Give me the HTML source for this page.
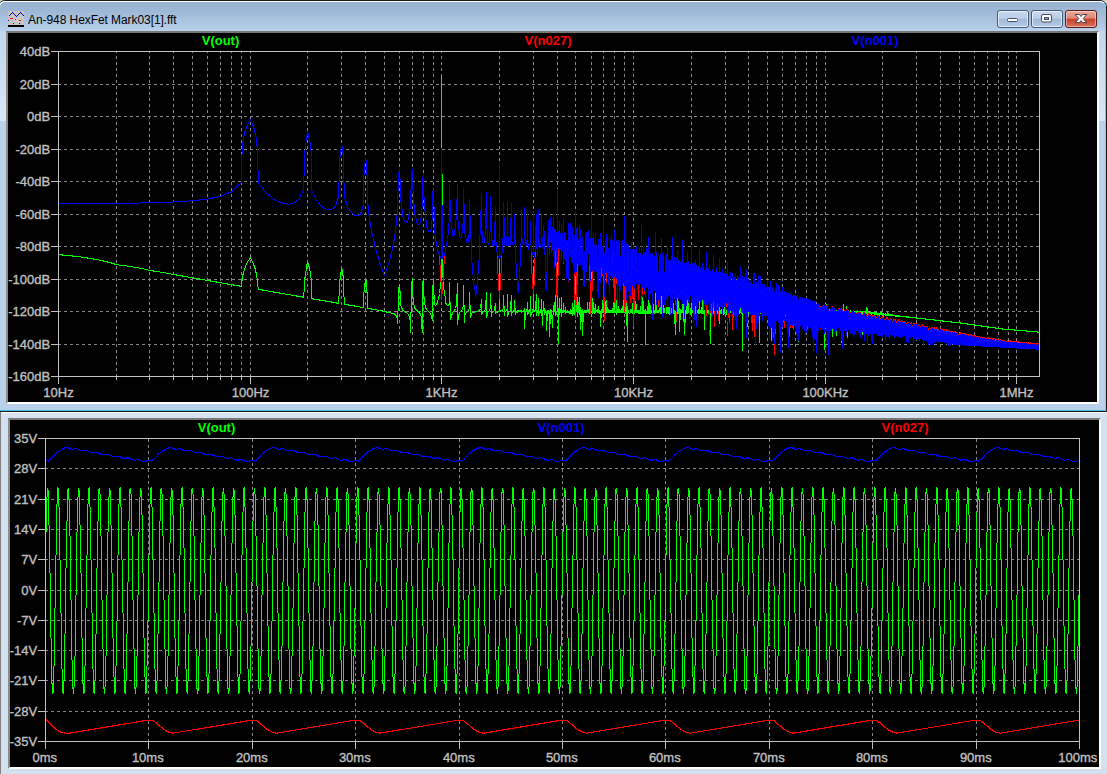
<!DOCTYPE html>
<html><head><meta charset="utf-8"><title>LTspice</title>
<style>
html,body{margin:0;padding:0;}
body{width:1107px;height:774px;overflow:hidden;position:relative;background:#d4d0c8;font-family:"Liberation Sans",sans-serif;}
div{position:absolute;box-sizing:border-box;}
#w1{left:-2px;top:0;width:1109px;height:412px;background:#b9d1ea;border:1px solid #1c1c1c;border-radius:7px 7px 0 0;}
#w1in{left:-1px;top:1px;width:1107px;height:410px;border:1px solid #fff;border-right-color:#62d2ee;border-bottom-color:#3ac8ea;border-radius:6px 6px 0 0;background:linear-gradient(#98b4d2 0,#9db8d6 9px,#a9c3df 18px,#b9d1ea 29px,#b9d1ea 100%);}
#w1l{left:0;top:31px;width:6px;height:90px;background:linear-gradient(#c3d7ee,#d9e6f5);}
#w1r{left:1099px;top:31px;width:6px;height:90px;background:linear-gradient(#c3d7ee,#d9e6f5);}
#c1{left:6px;top:31px;width:1093px;height:373px;background:#000;border-top:2px solid #777;border-left:2px solid #8a8a8a;border-right:2px solid #fff;border-bottom:2px solid #fff;}
#title{left:28px;top:12px;font-size:12px;line-height:16px;color:#000;white-space:nowrap;letter-spacing:-0.07px;}
#w2{left:0;top:412px;width:1107px;height:362px;background:linear-gradient(#fff 0,#fff 1px,#dbe6f4 1px,#d3e0f0 7px);}
#w2 .in{left:8px;top:6px;width:1093px;height:351px;background:#000;border-top:2px solid #777;border-left:2px solid #8a8a8a;border-right:2px solid #fff;border-bottom:2px solid #fff;}
#w2l{left:0;top:0;width:1px;height:362px;background:#808080;}
.btn{top:10px;height:18px;border:1px solid #46597a;border-radius:3px;box-shadow:inset 0 0 0 1px rgba(255,255,255,.65);background:linear-gradient(#c6d8ee 0,#bccfe8 45%,#9fb9d8 50%,#b4cbe6 100%);}
#bmin{left:997px;width:32px;}
#bmax{left:1031px;width:32px;}
#bclose{left:1065px;width:32px;border-color:#5a1a14;background:linear-gradient(#e9a99b 0,#de8a78 45%,#c8402a 50%,#d9735c 100%);box-shadow:inset 0 0 0 1px rgba(255,255,255,.45);}
svg{position:absolute;left:0;top:0;}
svg text{font-family:"Liberation Sans",sans-serif;}
</style></head><body>
<div id="w1"></div><div id="w1in"></div><div id="w1l"></div><div id="w1r"></div>
<div id="c1"></div>
<div id="w2"><div class="in"></div><div id="w2l"></div></div>
<div id="title">An-948 HexFet Mark03[1].fft</div>
<svg width="24" height="20" viewBox="0 0 24 20" style="left:8px;top:11px" shape-rendering="crispEdges">
<rect x="0" y="0" width="16" height="14" fill="#c6c6c6"/>
<path d="M0.5 5.5L4.5 1.500L8.5 5.5L12.5 1.500L16 5" stroke="#0000ff" fill="none"/>
<path d="M2 7.500H5M7 8.500H8M11 9.500H13" stroke="#ff0000"/>
<path d="M5 12.5H6M11 12.5H12M0 9.5H1" stroke="#0000c0"/>
<path d="M0 15H16" stroke="#000" stroke-width="2"/>
</svg>
<div class="btn" id="bmin"></div><div class="btn" id="bmax"></div><div class="btn" id="bclose"></div>
<svg width="1107" height="40" viewBox="0 0 1107 40">
<rect x="1007.5" y="18.5" width="10" height="3" rx="1" fill="#fff" stroke="#454f63"/>
<rect x="1041.5" y="14.5" width="10" height="7.5" rx="1.5" fill="#fff" stroke="#454f63"/>
<rect x="1044.5" y="17.500" width="4" height="2" fill="#8ea7c6" stroke="#454f63"/>
<path d="M1075.2 14.500h4.200l1.600 2l1.600-2h4.200l-3.600 4.100l3.600 4.100h-4.200l-1.600-2l-1.600 2h-4.200l3.600-4.100z" fill="#fff" stroke="#4a3a44" stroke-width="1" stroke-linejoin="round"/>
</svg>
<svg width="1107" height="774" viewBox="0 0 1107 774" shape-rendering="crispEdges" stroke-width="1">
<path d="M58 84.5H1039" stroke="#858585" stroke-dasharray="3 3"/>
<path d="M58 116.5H1039" stroke="#858585" stroke-dasharray="3 3"/>
<path d="M58 149.5H1039" stroke="#858585" stroke-dasharray="3 3"/>
<path d="M58 181.5H1039" stroke="#858585" stroke-dasharray="3 3"/>
<path d="M58 214.5H1039" stroke="#858585" stroke-dasharray="3 3"/>
<path d="M58 246.5H1039" stroke="#858585" stroke-dasharray="3 3"/>
<path d="M58 279.5H1039" stroke="#858585" stroke-dasharray="3 3"/>
<path d="M58 311.5H1039" stroke="#858585" stroke-dasharray="3 3"/>
<path d="M58 344.5H1039" stroke="#858585" stroke-dasharray="3 3"/>
<path d="M58.5 376V384" stroke="#c0c0c0"/>
<path d="M116.5 377V52" stroke="#858585" stroke-dasharray="3 3"/>
<path d="M116.5 376V380" stroke="#c0c0c0"/>
<path d="M149.5 377V52" stroke="#858585" stroke-dasharray="3 3"/>
<path d="M149.5 376V380" stroke="#c0c0c0"/>
<path d="M173.5 377V52" stroke="#858585" stroke-dasharray="3 3"/>
<path d="M173.5 376V380" stroke="#c0c0c0"/>
<path d="M192.5 377V52" stroke="#858585" stroke-dasharray="3 3"/>
<path d="M192.5 376V380" stroke="#c0c0c0"/>
<path d="M207.5 377V52" stroke="#858585" stroke-dasharray="3 3"/>
<path d="M207.5 376V380" stroke="#c0c0c0"/>
<path d="M220.5 377V52" stroke="#858585" stroke-dasharray="3 3"/>
<path d="M220.5 376V380" stroke="#c0c0c0"/>
<path d="M231.5 377V52" stroke="#858585" stroke-dasharray="3 3"/>
<path d="M231.5 376V380" stroke="#c0c0c0"/>
<path d="M241.5 377V52" stroke="#858585" stroke-dasharray="3 3"/>
<path d="M241.5 376V380" stroke="#c0c0c0"/>
<path d="M250.5 377V52" stroke="#858585" stroke-dasharray="3 3"/>
<path d="M250.5 376V384" stroke="#c0c0c0"/>
<path d="M307.5 377V52" stroke="#858585" stroke-dasharray="3 3"/>
<path d="M307.5 376V380" stroke="#c0c0c0"/>
<path d="M341.5 377V52" stroke="#858585" stroke-dasharray="3 3"/>
<path d="M341.5 376V380" stroke="#c0c0c0"/>
<path d="M365.5 377V52" stroke="#858585" stroke-dasharray="3 3"/>
<path d="M365.5 376V380" stroke="#c0c0c0"/>
<path d="M384.5 377V52" stroke="#858585" stroke-dasharray="3 3"/>
<path d="M384.5 376V380" stroke="#c0c0c0"/>
<path d="M399.5 377V52" stroke="#858585" stroke-dasharray="3 3"/>
<path d="M399.5 376V380" stroke="#c0c0c0"/>
<path d="M412.5 377V52" stroke="#858585" stroke-dasharray="3 3"/>
<path d="M412.5 376V380" stroke="#c0c0c0"/>
<path d="M423.5 377V52" stroke="#858585" stroke-dasharray="3 3"/>
<path d="M423.5 376V380" stroke="#c0c0c0"/>
<path d="M433.5 377V52" stroke="#858585" stroke-dasharray="3 3"/>
<path d="M433.5 376V380" stroke="#c0c0c0"/>
<path d="M441.5 377V52" stroke="#858585" stroke-dasharray="3 3"/>
<path d="M441.5 376V384" stroke="#c0c0c0"/>
<path d="M499.5 377V52" stroke="#858585" stroke-dasharray="3 3"/>
<path d="M499.5 376V380" stroke="#c0c0c0"/>
<path d="M533.5 377V52" stroke="#858585" stroke-dasharray="3 3"/>
<path d="M533.5 376V380" stroke="#c0c0c0"/>
<path d="M557.5 377V52" stroke="#858585" stroke-dasharray="3 3"/>
<path d="M557.5 376V380" stroke="#c0c0c0"/>
<path d="M575.5 377V52" stroke="#858585" stroke-dasharray="3 3"/>
<path d="M575.5 376V380" stroke="#c0c0c0"/>
<path d="M591.5 377V52" stroke="#858585" stroke-dasharray="3 3"/>
<path d="M591.5 376V380" stroke="#c0c0c0"/>
<path d="M603.5 377V52" stroke="#858585" stroke-dasharray="3 3"/>
<path d="M603.5 376V380" stroke="#c0c0c0"/>
<path d="M614.5 377V52" stroke="#858585" stroke-dasharray="3 3"/>
<path d="M614.5 376V380" stroke="#c0c0c0"/>
<path d="M624.5 377V52" stroke="#858585" stroke-dasharray="3 3"/>
<path d="M624.5 376V380" stroke="#c0c0c0"/>
<path d="M633.5 377V52" stroke="#858585" stroke-dasharray="3 3"/>
<path d="M633.5 376V384" stroke="#c0c0c0"/>
<path d="M691.5 377V52" stroke="#858585" stroke-dasharray="3 3"/>
<path d="M691.5 376V380" stroke="#c0c0c0"/>
<path d="M725.5 377V52" stroke="#858585" stroke-dasharray="3 3"/>
<path d="M725.5 376V380" stroke="#c0c0c0"/>
<path d="M748.5 377V52" stroke="#858585" stroke-dasharray="3 3"/>
<path d="M748.5 376V380" stroke="#c0c0c0"/>
<path d="M767.5 377V52" stroke="#858585" stroke-dasharray="3 3"/>
<path d="M767.5 376V380" stroke="#c0c0c0"/>
<path d="M782.5 377V52" stroke="#858585" stroke-dasharray="3 3"/>
<path d="M782.5 376V380" stroke="#c0c0c0"/>
<path d="M795.5 377V52" stroke="#858585" stroke-dasharray="3 3"/>
<path d="M795.5 376V380" stroke="#c0c0c0"/>
<path d="M806.5 377V52" stroke="#858585" stroke-dasharray="3 3"/>
<path d="M806.5 376V380" stroke="#c0c0c0"/>
<path d="M816.5 377V52" stroke="#858585" stroke-dasharray="3 3"/>
<path d="M816.5 376V380" stroke="#c0c0c0"/>
<path d="M825.5 377V52" stroke="#858585" stroke-dasharray="3 3"/>
<path d="M825.5 376V384" stroke="#c0c0c0"/>
<path d="M882.5 377V52" stroke="#858585" stroke-dasharray="3 3"/>
<path d="M882.5 376V380" stroke="#c0c0c0"/>
<path d="M916.5 377V52" stroke="#858585" stroke-dasharray="3 3"/>
<path d="M916.5 376V380" stroke="#c0c0c0"/>
<path d="M940.5 377V52" stroke="#858585" stroke-dasharray="3 3"/>
<path d="M940.5 376V380" stroke="#c0c0c0"/>
<path d="M959.5 377V52" stroke="#858585" stroke-dasharray="3 3"/>
<path d="M959.5 376V380" stroke="#c0c0c0"/>
<path d="M974.5 377V52" stroke="#858585" stroke-dasharray="3 3"/>
<path d="M974.5 376V380" stroke="#c0c0c0"/>
<path d="M987.5 377V52" stroke="#858585" stroke-dasharray="3 3"/>
<path d="M987.5 376V380" stroke="#c0c0c0"/>
<path d="M998.5 377V52" stroke="#858585" stroke-dasharray="3 3"/>
<path d="M998.5 376V380" stroke="#c0c0c0"/>
<path d="M1008.5 377V52" stroke="#858585" stroke-dasharray="3 3"/>
<path d="M1008.5 376V380" stroke="#c0c0c0"/>
<path d="M1016.5 377V52" stroke="#858585" stroke-dasharray="3 3"/>
<path d="M1016.5 376V384" stroke="#c0c0c0"/>
<path d="M58.5 254.5H59.5H60.5H61.5H62.5V255.5H63.5H64.5H65.5H66.5H67.5H68.5H69.5H70.5H71.5H72.5V256.5H73.5H74.5H75.5H76.5H77.5H78.5H79.5H80.5L81.5 257.5H82.5H83.5H84.5H85.5H86.5H87.5V258.5H88.5H89.5H90.5H91.5H92.5H93.5V259.5H94.5H95.5H96.5H97.5H98.5L99.5 260.5H100.5H101.5H102.5H103.5V261.5H104.5H105.5H106.5H107.5V262.5H108.5H109.5H110.5H111.5V263.5H112.5H113.5H114.5V264.5H115.5H116.5H117.5H118.5L119.5 265.5H120.5H121.5H122.5H123.5H124.5H125.5H126.5L127.5 266.5H128.5H129.5H130.5H131.5H132.5L133.5 267.5H134.5H135.5H136.5H137.5H138.5L139.5 268.5H140.5H141.5H142.5H143.5L144.5 269.5H145.5H146.5H147.5L148.5 270.5H149.5H150.5H151.5H152.5H153.5V271.5H154.5H155.5H156.5H157.5H158.5H159.5L160.5 272.5H161.5H162.5H163.5H164.5H165.5L166.5 273.5H167.5H168.5H169.5H170.5L171.5 274.5H172.5H173.5H174.5H175.5H176.5V275.5H177.5H178.5H179.5H180.5H181.5H182.5V276.5H183.5H184.5H185.5H186.5H187.5L188.5 277.5H189.5H190.5H191.5H192.5H193.5V278.5H194.5H195.5H196.5H197.5H198.5H199.5V279.5H200.5H201.5H202.5H203.5H204.5L205.5 280.5H206.5H207.5H208.5H209.5H210.5V281.5H211.5H212.5H213.5H214.5H215.5H216.5V282.5H217.5H218.5H219.5H220.5H221.5L222.5 283.5H223.5H224.5H225.5H226.5H227.5V284.5H228.5H229.5H230.5H231.5H232.5H233.5V285.5H234.5H235.5H236.5H237.5H238.5H239.5V286.5H240.5H241.5V282.5L242.5 278.5V275.5L243.5 273.5V271.5L244.5 270.5V268.5L245.5 267.5V265.5L246.5 264.5V263.5L247.5 262.5V261.5L248.5 260.5L249.5 259.5V258.5L250.5 257.5V258.5L251.5 259.5V260.5L252.5 261.5V262.5L253.5 263.5V264.5L254.5 266.5V267.5L255.5 269.5V271.5L256.5 273.5V276.5L257.5 279.5V283.5L258.5 289.5H259.5H260.5H261.5H262.5V290.5H263.5H264.5H265.5H266.5H267.5L268.5 291.5H269.5H270.5H271.5H272.5H273.5V292.5H274.5H275.5H276.5H277.5H278.5H279.5V293.5H280.5H281.5H282.5H283.5H284.5L285.5 294.5H286.5H287.5H288.5H289.5H290.5L291.5 295.5H292.5H293.5H294.5H295.5H296.5V296.5H297.5H298.5H299.5H300.5H301.5H302.5V297.5H303.5L304.5 286.5V279.5L305.5 275.5V272.5L306.5 269.5V265.5L307.5 263.5V262.5L308.5 263.5V265.5L309.5 267.5V269.5L310.5 272.5V275.5L311.5 280.5V298.5H312.5H313.5V299.5H314.5H315.5H316.5H317.5H318.5H319.5V300.5H320.5H321.5H322.5H323.5H324.5H325.5V301.5H326.5H327.5H328.5H329.5H330.5H331.5V302.5H332.5H333.5H334.5H335.5H336.5V303.5H337.5H338.5L339.5 288.5V281.5L340.5 277.5V273.5L341.5 270.5V268.5L342.5 270.5V273.5L343.5 277.5V289.5L344.5 304.5H345.5H346.5H347.5H348.5V305.5H349.5H350.5H351.5H352.5H353.5H354.5V306.5H355.5H356.5H357.5H358.5H359.5L360.5 307.5H361.5H362.5H363.5V295.5L364.5 289.5V285.5L365.5 281.5V278.5L366.5 281.5V289.5L367.5 295.5V308.5H368.5H369.5H370.5H371.5V309.5H372.5H373.5H374.5H375.5H376.5L377.5 310.5H378.5H379.5H380.5H381.5H382.5V311.5H383.5H384.5H385.5H386.5V312.5H387.5H388.5H389.5H390.5L391.5 313.5H392.5H393.5H394.5V314.5H395.5V315.5H396.5V316.5L397.5 318.5V323.5L398.5 298.5V289.5L399.5 284.5V288.5L400.5 294.5V305.5L401.5 306.5V307.5L402.5 309.5V310.5H403.5L404.5 311.5H405.5V312.5H406.5L407.5 313.5L408.5 314.5V315.5L409.5 316.5V317.5L410.5 321.5V332.5L411.5 293.5V284.5L412.5 278.5V290.5L413.5 302.5V304.5L414.5 305.5V308.5H415.5V309.5H416.5V310.5H417.5V311.5H418.5V312.5H419.5V313.5H420.5V315.5L421.5 316.5V325.5L422.5 332.5V284.5L423.5 278.5V290.5L424.5 302.5V304.5L425.5 305.5V308.5H426.5V309.5L427.5 310.5L428.5 311.5L429.5 312.5L430.5 313.5V314.5L431.5 315.5V317.5L432.5 320.5V289.5L433.5 280.5V287.5L434.5 302.5V304.5L435.5 305.5L436.5 304.5L437.5 302.5V301.5L438.5 298.5L439.5 293.5L440.5 285.5L441.5 270.5V75.5L442.5 270.5L443.5 285.5L444.5 293.5L445.5 298.5V302.5L446.5 304.5L447.5 305.5H448.5L449.5 303.5V282.5L450.5 319.5L451.5 315.5L452.5 313.5V312.5L453.5 311.5L454.5 310.5L455.5 308.5L456.5 304.5L457.5 283.5V324.5L458.5 315.5L459.5 313.5V312.5L460.5 311.5H461.5V310.5L462.5 309.5L463.5 305.5V285.5L464.5 322.5V315.5L465.5 313.5L466.5 312.5L467.5 311.5L468.5 310.5L469.5 307.5V292.5L470.5 317.5L471.5 314.5V313.5L472.5 312.5H473.5H474.5L475.5 311.5H476.5H477.5L478.5 310.5H479.5L480.5 308.5L481.5 299.5V314.5L482.5 312.5V311.5H483.5L484.5 310.5L485.5 309.5V307.5L486.5 292.5V317.5L487.5 313.5V311.5H488.5L489.5 310.5L490.5 307.5V293.5L491.5 316.5V313.5L492.5 312.5L493.5 311.5L494.5 310.5V309.5L495.5 303.5V313.5L496.5 312.5H497.5V311.5H498.5H499.5V248.5V311.5H500.5V310.5H501.5H502.5V309.5L503.5 308.5V295.5L504.5 315.5V312.5L505.5 311.5L506.5 310.5L507.5 307.5V293.5V316.5L508.5 313.5V312.5L509.5 311.5L510.5 310.5V307.5L511.5 295.5V315.5V312.5H512.5V311.5H513.5V310.5H514.5V300.5L515.5 314.5V312.5L516.5 311.5V312.5V311.5H517.5V312.5V310.5L518.5 311.5V310.5H519.5V311.5L520.5 310.5V311.5L521.5 310.5V312.5L522.5 311.5H523.5V310.5V311.5L524.5 309.5V307.5V328.5L525.5 312.5V311.5L526.5 310.5V311.5V309.5L527.5 308.5V301.5V314.5L528.5 313.5V310.5L529.5 311.5V310.5L530.5 308.5V295.5V316.5L531.5 313.5V311.5V312.5L532.5 311.5V312.5L533.5 306.5V266.5V311.5L534.5 310.5V311.5L535.5 309.5V310.5V307.5L536.5 294.5V315.5V312.5L537.5 311.5V312.5V310.5H538.5V297.5V315.5L539.5 312.5V311.5V312.5H540.5V310.5L541.5 308.5V298.5V315.5V311.5H542.5V325.5V310.5H543.5V301.5L544.5 314.5V311.5H545.5V312.5V310.5L546.5 311.5V330.5L547.5 311.5V309.5V310.5L548.5 311.5V309.5V313.5V311.5H549.5V336.5L550.5 311.5V309.5L551.5 312.5V310.5L552.5 326.5V327.5V324.5L553.5 305.5V310.5V307.5L554.5 311.5V308.5L555.5 295.5V315.5L556.5 313.5V312.5L557.5 311.5V252.5V311.5H558.5V343.5V308.5H559.5V297.5V314.5V312.5L560.5 311.5V312.5V310.5L561.5 307.5V296.5V316.5V311.5L562.5 310.5V312.5V310.5L563.5 309.5V302.5V312.5V309.5L564.5 311.5V310.5H565.5V306.5V313.5V311.5L566.5 312.5V311.5L567.5 310.5V312.5V311.5L568.5 312.5V310.5V311.5H569.5V313.5V311.5H570.5V308.5V313.5L571.5 312.5V313.5V311.5L572.5 308.5V302.5V315.5V313.5H573.5V307.5L574.5 308.5V299.5V314.5V312.5L575.5 311.5V313.5V270.5L576.5 311.5V310.5L577.5 309.5V296.5V316.5V312.5H578.5V307.5L579.5 297.5V314.5V312.5H580.5V329.5V306.5V315.5L581.5 311.5V312.5V309.5V310.5L582.5 332.5V308.5V335.5V331.5L583.5 312.5V310.5V311.5H584.5V310.5V312.5V310.5H585.5V309.5V312.5V311.5L586.5 312.5V309.5V312.5L587.5 310.5V311.5V301.5V311.5L588.5 310.5V308.5V312.5V311.5L589.5 310.5V301.5V313.5V311.5L590.5 305.5V312.5V304.5V307.5L591.5 264.5V312.5V311.5L592.5 310.5V297.5V313.5V311.5L593.5 310.5V312.5V301.5V311.5H594.5V313.5V310.5V311.5L595.5 304.5V312.5V310.5H596.5V311.5V310.5H597.5V312.5V311.5L598.5 306.5V312.5V310.5L599.5 312.5V310.5V313.5V310.5L600.5 311.5V310.5V326.5V325.5L601.5 310.5V312.5V308.5V311.5L602.5 309.5V299.5V312.5L603.5 311.5V312.5V270.5V311.5L604.5 312.5V310.5V313.5V311.5L605.5 301.5V313.5V312.5H606.5V299.5V311.5L607.5 312.5V306.5V312.5L608.5 310.5V308.5V312.5V311.5H609.5V312.5V309.5V311.5H610.5V310.5V312.5V310.5L611.5 311.5V312.5V309.5V311.5L612.5 312.5V307.5V311.5L613.5 312.5V302.5L614.5 311.5V312.5V285.5L615.5 310.5V309.5V312.5V311.5L616.5 300.5V314.5V304.5L617.5 298.5V312.5L618.5 306.5V312.5V311.5L619.5 309.5V312.5V311.5H620.5V310.5V312.5V310.5L621.5 311.5V312.5V308.5L622.5 311.5V312.5V306.5L623.5 311.5V312.5V297.5V310.5L624.5 311.5V280.5V312.5V311.5H625.5V313.5V296.5V311.5L626.5 310.5V312.5V298.5V311.5L627.5 340.5V305.5V341.5V310.5L628.5 311.5V309.5V312.5V311.5L629.5 310.5V305.5V313.5V307.5L630.5 311.5V310.5V312.5V310.5L631.5 311.5V312.5V306.5V310.5H632.5V313.5V302.5V311.5L633.5 310.5V293.5V312.5H634.5V298.5V313.5V312.5L635.5 311.5V300.5V312.5V311.5L636.5 304.5V312.5L637.5 311.5V312.5V309.5V311.5H638.5V313.5V309.5V312.5L639.5 311.5V309.5V313.5V310.5L640.5 311.5V313.5V305.5V310.5L641.5 312.5V313.5V296.5V310.5L642.5 312.5V296.5V313.5V311.5L643.5 301.5V313.5V309.5L644.5 312.5V313.5V309.5V311.5L645.5 312.5V344.5V309.5L646.5 312.5V313.5V310.5V311.5H647.5V310.5V313.5V311.5L648.5 301.5V313.5V296.5V310.5L649.5 312.5V302.5V313.5V311.5H650.5V304.5V313.5V312.5L651.5 311.5V312.5V309.5V311.5H652.5V313.5V309.5L653.5 310.5V303.5V312.5L654.5 313.5V309.5V310.5H655.5V292.5V312.5V311.5L656.5 302.5V312.5V311.5L657.5 310.5V312.5V309.5V312.5L658.5 310.5V312.5V311.5L659.5 309.5V311.5V303.5V311.5L660.5 312.5V313.5V307.5L661.5 311.5V313.5V292.5V313.5L662.5 312.5V298.5V311.5L663.5 312.5V305.5L664.5 310.5V312.5V309.5V310.5L665.5 312.5V313.5V309.5V310.5H666.5V313.5V306.5V311.5H667.5V295.5V312.5V311.5L668.5 313.5V306.5V308.5L669.5 310.5V306.5V314.5V311.5L670.5 310.5V313.5V309.5L671.5 311.5V312.5V307.5V309.5L672.5 312.5V292.5V313.5V311.5H673.5V302.5V313.5V311.5H674.5V313.5V309.5V312.5L675.5 334.5V310.5V334.5L676.5 310.5V309.5V313.5V312.5L677.5 309.5V313.5V292.5V313.5L678.5 311.5V300.5V313.5L679.5 310.5V307.5V331.5V328.5L680.5 312.5V309.5V313.5V309.5L681.5 310.5V312.5V309.5V312.5L682.5 308.5V312.5V295.5V301.5L683.5 310.5V312.5V303.5V310.5L684.5 333.5V310.5V334.5V333.5L685.5 312.5V309.5V313.5V310.5L686.5 312.5V309.5V313.5V311.5L687.5 288.5V313.5V310.5L688.5 305.5V312.5V303.5L689.5 311.5V309.5V313.5V311.5L690.5 313.5V314.5V307.5V311.5H691.5V296.5V313.5V309.5L692.5 311.5V304.5V312.5V310.5L693.5 311.5V309.5V313.5V311.5L694.5 310.5V312.5V308.5V312.5H695.5V297.5V313.5V311.5L696.5 312.5V301.5V313.5V310.5H697.5V312.5V310.5L698.5 311.5V313.5V308.5V311.5L699.5 313.5V296.5V311.5H700.5V312.5V309.5V312.5L701.5 311.5V313.5V309.5V311.5L702.5 303.5V313.5V284.5V312.5L703.5 311.5V304.5V313.5V309.5L704.5 311.5V309.5V329.5V310.5H705.5V309.5V312.5L706.5 310.5V313.5V294.5V312.5H707.5V305.5V311.5H708.5V309.5V313.5V312.5L709.5 311.5V313.5V296.5V311.5H710.5V300.5V343.5V311.5H711.5V309.5V313.5V312.5H712.5V313.5V304.5V310.5L713.5 311.5V292.5V313.5L714.5 311.5V312.5V302.5V311.5H715.5V312.5V302.5V312.5L716.5 309.5V297.5V313.5V309.5L717.5 311.5V309.5V313.5V311.5L718.5 310.5V312.5V309.5V312.5L719.5 310.5V323.5V301.5V314.5L720.5 311.5V313.5V309.5V311.5H721.5V313.5V308.5V311.5L722.5 310.5V299.5V313.5V311.5H723.5V309.5V314.5V309.5L724.5 311.5V313.5V306.5V313.5L725.5 312.5V296.5V311.5L726.5 312.5V309.5V314.5V312.5L727.5 311.5V312.5V293.5V309.5L728.5 311.5V301.5V313.5L729.5 310.5V312.5V309.5V312.5L730.5 311.5V312.5V293.5V311.5L731.5 310.5V307.5V313.5V310.5L732.5 309.5V312.5V298.5V311.5L733.5 312.5V304.5V313.5V311.5H734.5V313.5V303.5V305.5L735.5 311.5V314.5V297.5V312.5L736.5 313.5V309.5V313.5L737.5 311.5V313.5V302.5V310.5H738.5V305.5V313.5V310.5L739.5 312.5V313.5V305.5V312.5L740.5 310.5V312.5V298.5V310.5L741.5 311.5V300.5V313.5V310.5L742.5 311.5V350.5V303.5V311.5L743.5 312.5V313.5V309.5V313.5L744.5 311.5V313.5V290.5V312.5L745.5 311.5V304.5V313.5V311.5L746.5 310.5V331.5V302.5V312.5L747.5 313.5V305.5V326.5V311.5H748.5V313.5V299.5V311.5L749.5 312.5V301.5V313.5V312.5L750.5 310.5V314.5V311.5H751.5V301.5V313.5V311.5H752.5V300.5V313.5V311.5L753.5 310.5V301.5V314.5V311.5L754.5 310.5V313.5V300.5L755.5 311.5V304.5V323.5V311.5L756.5 310.5V313.5V299.5V310.5H757.5V304.5V313.5V312.5H758.5V313.5V301.5V310.5L759.5 311.5V342.5V309.5V310.5H760.5V313.5V308.5V313.5L761.5 312.5V313.5V309.5V311.5H762.5V309.5V313.5V310.5L763.5 311.5V309.5V313.5V311.5H764.5V313.5V309.5V311.5H765.5V305.5V314.5V310.5L766.5 312.5V309.5V313.5V311.5H767.5V313.5V309.5V312.5H768.5V313.5V310.5L769.5 311.5V312.5V308.5V311.5L770.5 310.5V309.5V313.5V309.5L771.5 311.5V309.5V340.5V311.5L772.5 312.5V313.5V309.5V310.5H773.5V309.5V314.5V309.5L774.5 312.5V308.5V313.5V311.5L775.5 312.5V309.5V313.5V311.5H776.5V309.5V313.5V312.5H777.5V313.5V309.5V311.5H778.5V309.5V313.5V310.5H779.5V313.5V309.5V311.5L780.5 313.5V314.5V309.5V311.5L781.5 312.5V300.5V313.5V311.5L782.5 313.5V309.5V312.5L783.5 311.5V313.5V309.5V310.5L784.5 311.5V309.5V313.5V311.5L785.5 310.5V313.5V309.5V310.5L786.5 312.5V313.5V309.5V312.5H787.5V313.5V309.5V311.5L788.5 312.5V313.5V308.5V311.5L789.5 312.5V309.5V314.5V312.5L790.5 313.5V309.5V311.5H791.5V313.5V308.5V311.5H792.5V313.5V309.5V312.5L793.5 311.5V310.5V313.5V312.5H794.5V309.5V312.5L795.5 311.5V313.5V308.5V313.5L796.5 311.5V313.5V309.5V310.5L797.5 311.5V313.5V309.5V312.5L798.5 341.5V309.5V312.5H799.5V313.5V308.5V310.5H800.5V313.5V308.5V312.5L801.5 310.5V314.5V308.5V311.5L802.5 310.5V309.5V313.5V311.5L803.5 326.5V309.5V327.5V311.5L804.5 313.5V309.5V314.5V311.5L805.5 312.5V309.5V314.5V309.5L806.5 311.5V309.5V313.5V311.5L807.5 312.5V309.5V313.5V311.5H808.5V309.5V313.5V311.5H809.5V309.5V314.5V309.5L810.5 311.5V314.5V309.5V312.5L811.5 311.5V309.5V314.5V312.5L812.5 310.5V309.5V313.5V312.5L813.5 313.5V309.5V312.5L814.5 310.5V309.5V313.5V311.5L815.5 310.5V313.5V302.5V313.5L816.5 311.5V310.5V313.5V312.5H817.5V313.5V308.5V310.5L818.5 312.5V309.5V314.5V312.5L819.5 309.5V313.5V312.5H820.5V313.5V306.5V310.5L821.5 311.5V314.5V309.5V311.5H822.5V309.5V313.5V311.5L823.5 310.5V309.5V313.5L824.5 311.5V309.5V349.5V313.5L825.5 312.5V309.5V314.5V312.5H826.5V314.5V303.5V305.5L827.5 311.5V314.5V309.5V313.5L828.5 312.5V313.5V309.5V311.5L829.5 312.5V308.5V314.5V312.5L830.5 311.5V308.5V314.5V312.5L831.5 310.5V309.5V314.5V311.5L832.5 313.5V309.5V336.5V334.5L833.5 311.5V313.5V309.5V310.5L834.5 311.5V309.5V314.5V311.5L835.5 312.5V309.5V315.5V312.5L836.5 311.5V309.5V335.5V312.5L837.5 311.5V314.5V309.5V311.5H838.5V314.5V309.5V312.5H839.5V313.5V309.5V312.5H840.5V310.5V313.5V312.5L841.5 311.5V310.5V342.5V310.5L842.5 313.5V309.5V311.5L843.5 310.5V313.5V303.5V311.5H844.5V314.5V309.5V313.5L845.5 311.5V309.5V322.5V313.5L846.5 307.5V305.5V313.5V307.5L847.5 313.5V337.5V309.5V311.5L848.5 310.5V313.5V312.5L849.5 311.5V313.5V310.5V312.5H850.5V310.5V314.5V310.5L851.5 312.5V310.5V314.5V312.5H852.5V310.5V314.5V311.5H853.5V310.5V314.5V311.5H854.5V314.5V310.5V311.5H855.5V313.5V310.5V312.5L856.5 313.5V310.5V312.5L857.5 310.5V313.5V311.5L858.5 312.5V310.5V314.5L859.5 312.5V313.5V310.5V312.5H860.5V310.5V326.5V312.5H861.5V313.5V310.5V311.5L862.5 312.5V310.5V334.5V312.5L863.5 311.5V313.5V310.5V312.5H864.5V313.5V310.5V311.5L865.5 312.5V313.5V310.5V312.5H866.5V313.5V306.5V312.5L867.5 308.5V307.5V314.5V312.5H868.5V311.5V313.5V312.5H869.5V313.5V311.5L870.5 312.5V313.5V311.5V312.5H871.5V311.5V314.5V312.5H872.5V311.5V313.5V312.5L873.5 313.5V311.5V312.5H874.5V311.5V314.5V312.5L875.5 313.5V311.5V314.5V312.5L876.5 314.5V311.5V312.5L877.5 313.5V312.5V314.5V313.5H878.5V312.5V329.5V328.5L879.5 313.5V312.5V314.5L880.5 312.5V314.5V313.5H881.5V314.5V311.5V313.5H882.5V314.5V312.5V313.5H883.5V320.5V314.5H884.5V313.5V314.5H885.5V313.5V315.5V313.5L886.5 314.5V313.5V315.5V314.5H887.5V312.5V315.5V312.5L888.5 314.5V313.5V315.5V314.5H889.5V315.5V313.5V314.5L890.5 315.5V314.5H891.5V315.5V314.5H892.5V315.5H893.5V314.5V315.5H894.5V314.5V315.5H895.5V314.5V316.5V315.5H896.5V316.5V315.5H897.5V316.5V315.5H898.5V316.5V315.5H899.5V316.5V314.5V315.5L900.5 316.5V315.5V316.5H901.5V315.5V316.5H902.5V315.5V316.5H903.5H904.5H905.5H906.5V317.5V316.5H907.5V317.5L908.5 316.5V317.5H909.5H910.5H911.5H912.5H913.5H914.5H915.5H916.5V318.5H917.5H918.5H919.5H920.5H921.5H922.5H923.5H924.5H925.5V319.5H926.5H927.5H928.5H929.5H930.5H931.5H932.5H933.5H934.5V320.5H935.5H936.5H937.5H938.5H939.5H940.5H941.5H942.5V321.5H943.5H944.5H945.5H946.5H947.5H948.5H949.5H950.5H951.5V322.5H952.5H953.5H954.5H955.5H956.5H957.5H958.5H959.5H960.5V323.5H961.5H962.5H963.5H964.5H965.5H966.5H967.5V324.5H968.5H969.5H970.5H971.5H972.5H973.5H974.5V325.5H975.5H976.5H977.5H978.5H979.5H980.5H981.5V326.5H982.5H983.5H984.5H985.5H986.5H987.5H988.5V327.5H989.5H990.5H991.5H992.5H993.5H994.5H995.5V328.5H996.5H997.5H998.5H999.5H1000.5H1001.5H1002.5V329.5H1003.5H1004.5H1005.5H1006.5H1007.5H1008.5H1009.5H1010.5H1011.5H1012.5H1013.5H1014.5V330.5H1015.5H1016.5H1017.5H1018.5H1019.5H1020.5H1021.5H1022.5H1023.5H1024.5H1025.5H1026.5V331.5H1027.5H1028.5H1029.5H1030.5H1031.5H1032.5H1033.5H1034.5H1035.5H1036.5H1037.5V332.5H1038.5H1039.5" stroke="#00ff00" fill="none"/>
<path d="M58.5 203.5H59.5H60.5H61.5H62.5H63.5H64.5H65.5H66.5H67.5H68.5H69.5H70.5H71.5H72.5H73.5H74.5H75.5H76.5H77.5H78.5H79.5H80.5H81.5H82.5H83.5H84.5H85.5H86.5H87.5H88.5H89.5H90.5H91.5H92.5H93.5H94.5H95.5H96.5H97.5H98.5H99.5H100.5H101.5H102.5H103.5H104.5H105.5H106.5H107.5H108.5H109.5H110.5H111.5H112.5H113.5H114.5H115.5H116.5H117.5H118.5H119.5H120.5H121.5H122.5H123.5H124.5H125.5H126.5H127.5H128.5H129.5H130.5H131.5H132.5H133.5H134.5H135.5H136.5H137.5H138.5L139.5 202.5H140.5H141.5H142.5H143.5H144.5H145.5H146.5H147.5H148.5H149.5H150.5H151.5H152.5H153.5H154.5H155.5H156.5H157.5H158.5H159.5H160.5H161.5H162.5H163.5H164.5H165.5H166.5H167.5H168.5H169.5H170.5H171.5H172.5H173.5V201.5H174.5H175.5H176.5H177.5H178.5H179.5H180.5H181.5H182.5H183.5H184.5H185.5H186.5H187.5H188.5H189.5V200.5H190.5H191.5H192.5H193.5H194.5H195.5H196.5H197.5H198.5H199.5V199.5H200.5H201.5H202.5H203.5H204.5H205.5H206.5H207.5L208.5 198.5H209.5H210.5H211.5H212.5V197.5H213.5H214.5H215.5H216.5H217.5V196.5H218.5H219.5H220.5H221.5V195.5H222.5H223.5L224.5 194.5H225.5V193.5H226.5H227.5H228.5V192.5H229.5H230.5L231.5 191.5H232.5V190.5H233.5V189.5L234.5 188.5L235.5 187.5H236.5V186.5H237.5V185.5H238.5V184.5H239.5L240.5 183.5L241.5 182.5V158.5L242.5 149.5V144.5L243.5 140.5V137.5L244.5 134.5V132.5L245.5 130.5V129.5L246.5 127.5V126.5L247.5 125.5V124.5L248.5 123.5V122.5L249.5 121.5V120.5L250.5 119.5V120.5L251.5 121.5V122.5L252.5 123.5V124.5L253.5 126.5V127.5L254.5 129.5V131.5L255.5 133.5V135.5L256.5 138.5V142.5L257.5 148.5V156.5L258.5 183.5L259.5 184.5L260.5 185.5L261.5 186.5L262.5 187.5V188.5H263.5V190.5L264.5 191.5L265.5 192.5V193.5H266.5L267.5 194.5H268.5V195.5H269.5L270.5 196.5L271.5 197.5L272.5 198.5H273.5V199.5H274.5H275.5V200.5H276.5L277.5 201.5H278.5H279.5V202.5H280.5H281.5H282.5V203.5H283.5H284.5H285.5H286.5H287.5V204.5H288.5H289.5L290.5 203.5H291.5H292.5H293.5L294.5 202.5H295.5V201.5H296.5V200.5H297.5L298.5 199.5H299.5V197.5L300.5 196.5V194.5L301.5 193.5L302.5 192.5V191.5L303.5 190.5L304.5 161.5V153.5L305.5 147.5V143.5L306.5 140.5V136.5L307.5 134.5V132.5L308.5 134.5V136.5L309.5 138.5V140.5L310.5 143.5V147.5L311.5 153.5V190.5L312.5 191.5V192.5L313.5 193.5V194.5L314.5 195.5V196.5L315.5 197.5V199.5L316.5 200.5L317.5 201.5L318.5 202.5V203.5H319.5V204.5L320.5 205.5H321.5V206.5H322.5V207.5H323.5L324.5 208.5H325.5V209.5H326.5H327.5H328.5H329.5H330.5H331.5L332.5 208.5H333.5V207.5H334.5V206.5H335.5V205.5L336.5 203.5V201.5L337.5 200.5V199.5L338.5 197.5V196.5L339.5 168.5V159.5L340.5 154.5V150.5L341.5 147.5V145.5L342.5 147.5V150.5L343.5 154.5V168.5L344.5 196.5V197.5L345.5 199.5V200.5L346.5 202.5V203.5L347.5 205.5V207.5L348.5 208.5L349.5 209.5V210.5L350.5 211.5L351.5 212.5L352.5 213.5L353.5 214.5H354.5V215.5H355.5H356.5H357.5H358.5H359.5V214.5H360.5V212.5H361.5V210.5L362.5 208.5V207.5L363.5 205.5V179.5L364.5 170.5V165.5L365.5 161.5V158.5L366.5 161.5V170.5L367.5 179.5V204.5L368.5 206.5V212.5L369.5 216.5V221.5L370.5 223.5V226.5L371.5 228.5V232.5L372.5 234.5V235.5L373.5 238.5V240.5L374.5 242.5V245.5L375.5 247.5V249.5L376.5 250.5V252.5L377.5 254.5V255.5L378.5 257.5V258.5L379.5 260.5V262.5L380.5 264.5V265.5L381.5 266.5V268.5L382.5 269.5V271.5L383.5 272.5V274.5L384.5 275.5V274.5L385.5 273.5V271.5L386.5 270.5V268.5L387.5 267.5V265.5L388.5 264.5V263.5L389.5 262.5V259.5L390.5 257.5V254.5L391.5 253.5V251.5L392.5 250.5V245.5L393.5 244.5V242.5L394.5 238.5V235.5L395.5 233.5V227.5L396.5 223.5V220.5L397.5 210.5V200.5L398.5 182.5V174.5L399.5 169.5V174.5L400.5 182.5V200.5L401.5 203.5V206.5L402.5 212.5V215.5L403.5 218.5V219.5L404.5 220.5V221.5H405.5L406.5 222.5V221.5H407.5V220.5L408.5 219.5V215.5L409.5 213.5V211.5L410.5 206.5V199.5L411.5 181.5V174.5L412.5 169.5V181.5L413.5 199.5V202.5L414.5 206.5V213.5L415.5 215.5V218.5L416.5 219.5V222.5L417.5 223.5V224.5H418.5H419.5V223.5L420.5 222.5V218.5L421.5 217.5V208.5L422.5 205.5V179.5L423.5 174.5V187.5L424.5 205.5V208.5L425.5 212.5V219.5L426.5 221.5V226.5L427.5 228.5V229.5L428.5 230.5V231.5H429.5H430.5V229.5L431.5 228.5V222.5L432.5 217.5V195.5L433.5 187.5V195.5L434.5 217.5V232.5L435.5 235.5V240.5L436.5 242.5V245.5L437.5 247.5V249.5L438.5 252.5L439.5 254.5L440.5 274.5L441.5 288.5V299.5L442.5 289.5L443.5 274.5L444.5 254.5L445.5 252.5V249.5L446.5 244.5L447.5 239.5L448.5 230.5L449.5 215.5V184.5L450.5 215.5L451.5 227.5L452.5 232.5V235.5L453.5 236.5L454.5 235.5V232.5L455.5 226.5L456.5 214.5L457.5 184.5V214.5L458.5 226.5L459.5 232.5V236.5L460.5 237.5H461.5V235.5L462.5 230.5L463.5 218.5V188.5L464.5 218.5V230.5L465.5 236.5L466.5 239.5V241.5L467.5 242.5H468.5V238.5L469.5 229.5V199.5L470.5 229.5L471.5 248.5V258.5L472.5 266.5V272.5L473.5 277.5V282.5L474.5 287.5L475.5 292.5V296.5L476.5 292.5V287.5L477.5 282.5V277.5L478.5 271.5V264.5L479.5 256.5V244.5L480.5 225.5L481.5 194.5V225.5L482.5 236.5V241.5L483.5 243.5L484.5 242.5V240.5L485.5 234.5V223.5L486.5 192.5V223.5L487.5 234.5V243.5L488.5 244.5L489.5 242.5V237.5L490.5 227.5V196.5L491.5 226.5V237.5L492.5 243.5V245.5L493.5 246.5L494.5 244.5V236.5L495.5 207.5V236.5L496.5 246.5V250.5L497.5 252.5V268.5L498.5 279.5V287.5L499.5 293.5V298.5V293.5L500.5 286.5V278.5L501.5 268.5V253.5L502.5 251.5V243.5L503.5 232.5V202.5L504.5 231.5V244.5L505.5 245.5H506.5V241.5L507.5 230.5V200.5V230.5L508.5 242.5V245.5L509.5 244.5V245.5L510.5 243.5V232.5L511.5 203.5V240.5L512.5 243.5V244.5H513.5L514.5 243.5V214.5L515.5 242.5V261.5L516.5 264.5V275.5L517.5 279.5V289.5L518.5 292.5V284.5L519.5 279.5V270.5L520.5 264.5V250.5L521.5 236.5V208.5V236.5L522.5 241.5V243.5L523.5 244.5V241.5L524.5 235.5V206.5V235.5L525.5 241.5V242.5L526.5 244.5V245.5V243.5L527.5 237.5V210.5V238.5L528.5 248.5V249.5L529.5 245.5V244.5L530.5 243.5V220.5V243.5L531.5 246.5V269.5L532.5 277.5V286.5L533.5 291.5V293.5V284.5L534.5 285.5V265.5L535.5 248.5V236.5L536.5 214.5V245.5L537.5 251.5V249.5V255.5V252.5L538.5 242.5V208.5V233.5L539.5 242.5V244.5L540.5 245.5V244.5V247.5L541.5 241.5V212.5V246.5H542.5V237.5L543.5 248.5V226.5L544.5 234.5V250.5L545.5 259.5V286.5L546.5 290.5V280.5V281.5L547.5 263.5V236.5V244.5L548.5 247.5V219.5V246.5H549.5V254.5V235.5L550.5 241.5V217.5L551.5 243.5V242.5V252.5L552.5 247.5V249.5V233.5V236.5L553.5 217.5V250.5V248.5L554.5 262.5V267.5V230.5L555.5 228.5V265.5L556.5 252.5V296.5L557.5 281.5V295.5V276.5L558.5 274.5V240.5L559.5 227.5V220.5V255.5V231.5L560.5 244.5V232.5V248.5L561.5 251.5V223.5V260.5L562.5 234.5V251.5V233.5L563.5 263.5V218.5V252.5L564.5 258.5V232.5L565.5 245.5V232.5V260.5V238.5L566.5 242.5V277.5V271.5L567.5 276.5V241.5L568.5 281.5V223.5L569.5 249.5V237.5V245.5L570.5 256.5V222.5V240.5L571.5 260.5V253.5V262.5V258.5L572.5 260.5V226.5V258.5L573.5 266.5V245.5V264.5L574.5 262.5V234.5V299.5L575.5 296.5V293.5V318.5L576.5 280.5V304.5V269.5L577.5 284.5V226.5V254.5L578.5 246.5V265.5V239.5V252.5L579.5 226.5V261.5V239.5L580.5 241.5V264.5V228.5V241.5L581.5 257.5V246.5V264.5V261.5L582.5 253.5V236.5V269.5V242.5L583.5 264.5V259.5V285.5V260.5L584.5 286.5V250.5V257.5L585.5 244.5V232.5V271.5V254.5L586.5 268.5V271.5V231.5V260.5L587.5 258.5V261.5V240.5L588.5 241.5V229.5V253.5V252.5L589.5 253.5V240.5V272.5V266.5L590.5 294.5V281.5V313.5V305.5L591.5 310.5V278.5V297.5L592.5 285.5V237.5V270.5L593.5 266.5V232.5V257.5L594.5 252.5V243.5V271.5V260.5L595.5 234.5V267.5V251.5L596.5 270.5V244.5V271.5L597.5 265.5V262.5V290.5L598.5 292.5V297.5V239.5L599.5 249.5V277.5V248.5V261.5L600.5 269.5V232.5V282.5V259.5L601.5 265.5V233.5V276.5V255.5L602.5 258.5V275.5V245.5V271.5L603.5 280.5V276.5V298.5V297.5L604.5 307.5V320.5V275.5V302.5L605.5 239.5V274.5V265.5L606.5 251.5V233.5V282.5V256.5L607.5 270.5V235.5V271.5L608.5 257.5V247.5V284.5V283.5L609.5 264.5V293.5V280.5L610.5 272.5V275.5V238.5V259.5L611.5 275.5V280.5V234.5V250.5L612.5 271.5V277.5V239.5V265.5L613.5 263.5V287.5V250.5L614.5 272.5V302.5V295.5L615.5 300.5V310.5V277.5V291.5L616.5 241.5V283.5V278.5L617.5 241.5V308.5V288.5L618.5 240.5V285.5V265.5L619.5 241.5V304.5L620.5 278.5V287.5V257.5V269.5L621.5 244.5V273.5V241.5L622.5 273.5V285.5V240.5L623.5 270.5V247.5V299.5L624.5 296.5V274.5V311.5V310.5L625.5 297.5V306.5V245.5V292.5L626.5 302.5V242.5V299.5L627.5 273.5V243.5V283.5V276.5L628.5 257.5V244.5V290.5V284.5L629.5 280.5V312.5V274.5V285.5L630.5 296.5V248.5V302.5V262.5L631.5 242.5V308.5V257.5L632.5 274.5V248.5V298.5V285.5L633.5 294.5V326.5V281.5L634.5 307.5V309.5V248.5V285.5L635.5 283.5V249.5V284.5V274.5L636.5 246.5V283.5V270.5L637.5 274.5V269.5V289.5V280.5L638.5 283.5V252.5V299.5V276.5L639.5 270.5V246.5V287.5V250.5L640.5 280.5V283.5V252.5V275.5L641.5 264.5V311.5V303.5L642.5 287.5V254.5V281.5L643.5 251.5V287.5V248.5V281.5L644.5 292.5V251.5V293.5V290.5L645.5 293.5V297.5V251.5V289.5L646.5 281.5V287.5V247.5V271.5L647.5 265.5V248.5V286.5V271.5L648.5 251.5V299.5V290.5L649.5 267.5V255.5V287.5V283.5L650.5 287.5V252.5V293.5V281.5L651.5 279.5V253.5V292.5V290.5L652.5 277.5V319.5V252.5V305.5L653.5 272.5V287.5V254.5V276.5L654.5 288.5V290.5V255.5V280.5L655.5 275.5V292.5V264.5V283.5L656.5 256.5V304.5V251.5V292.5L657.5 297.5V254.5V280.5L658.5 285.5V271.5V306.5V292.5L659.5 299.5V255.5V307.5V293.5L660.5 278.5V253.5V306.5V256.5L661.5 270.5V267.5V295.5V291.5L662.5 280.5V252.5V317.5L663.5 281.5V254.5V292.5V270.5L664.5 282.5V304.5V271.5V275.5L665.5 315.5V254.5V319.5V281.5L666.5 273.5V253.5V298.5V294.5L667.5 285.5V306.5V259.5V277.5H668.5V295.5V260.5L669.5 293.5V260.5V294.5V290.5L670.5 292.5V314.5V259.5V291.5L671.5 283.5V255.5V296.5V271.5L672.5 297.5V258.5V313.5V301.5L673.5 285.5V290.5V257.5V290.5L674.5 291.5V298.5V256.5V279.5L675.5 271.5V298.5V260.5V296.5L676.5 312.5V257.5V320.5V304.5L677.5 294.5V262.5V290.5L678.5 298.5V259.5V276.5L679.5 282.5V296.5V259.5V293.5L680.5 294.5V261.5V299.5L681.5 288.5V258.5V294.5V287.5L682.5 263.5V303.5V266.5L683.5 302.5V259.5V279.5L684.5 302.5V262.5V318.5V305.5L685.5 284.5V302.5V262.5V286.5L686.5 278.5V261.5V305.5V276.5L687.5 294.5V262.5V299.5L688.5 285.5V301.5V260.5V288.5L689.5 309.5V267.5V318.5V308.5L690.5 265.5V295.5V263.5V283.5L691.5 284.5V302.5V268.5V290.5L692.5 308.5V309.5V262.5V301.5L693.5 287.5V322.5V267.5V305.5L694.5 311.5V319.5V262.5V313.5L695.5 289.5V305.5V268.5V291.5L696.5 314.5V326.5V264.5V311.5L697.5 293.5V307.5V268.5V306.5L698.5 294.5V302.5V265.5V299.5H699.5V267.5V300.5V294.5H700.5V301.5V267.5V298.5L701.5 285.5V303.5V266.5V298.5L702.5 286.5V264.5V299.5V295.5L703.5 300.5V310.5V266.5V267.5L704.5 297.5V269.5V302.5V287.5L705.5 320.5V266.5V302.5L706.5 313.5V273.5V315.5V313.5L707.5 296.5V309.5V267.5V293.5L708.5 297.5V302.5V267.5V302.5L709.5 298.5V270.5V335.5V322.5L710.5 303.5V304.5V270.5V302.5L711.5 304.5V316.5V271.5V312.5L712.5 307.5V315.5V268.5V301.5L713.5 295.5V301.5V273.5V291.5L714.5 324.5V271.5V326.5V323.5L715.5 276.5V314.5V269.5V311.5L716.5 309.5V314.5V272.5V299.5L717.5 302.5V304.5V270.5V301.5L718.5 311.5V320.5V271.5V277.5L719.5 300.5V306.5V273.5V298.5L720.5 296.5V271.5V306.5V297.5L721.5 295.5V271.5V304.5V300.5L722.5 313.5V271.5V305.5H723.5V272.5V308.5V302.5L724.5 306.5V272.5V301.5L725.5 307.5V311.5V274.5V304.5L726.5 300.5V302.5V273.5V295.5L727.5 317.5V273.5V335.5V326.5L728.5 310.5V275.5V308.5L729.5 321.5V322.5V278.5V315.5L730.5 307.5V310.5V277.5V306.5L731.5 308.5V317.5V279.5V312.5L732.5 322.5V276.5V329.5V326.5L733.5 309.5V311.5V275.5V310.5L734.5 312.5V276.5V315.5L735.5 311.5V316.5V276.5V312.5L736.5 327.5V279.5V328.5V324.5L737.5 310.5V278.5V315.5L738.5 311.5V314.5V276.5V311.5L739.5 305.5V309.5V280.5V307.5L740.5 303.5V306.5V279.5V304.5L741.5 311.5V278.5V310.5L742.5 309.5V312.5V280.5V309.5L743.5 313.5V315.5V278.5V312.5L744.5 307.5V281.5V309.5V308.5L745.5 318.5V282.5V321.5V320.5L746.5 286.5V279.5V337.5V333.5L747.5 312.5V316.5V281.5V314.5L748.5 309.5V310.5V280.5V309.5L749.5 312.5V314.5V282.5V314.5L750.5 313.5V314.5V281.5V313.5L751.5 314.5V315.5V285.5V314.5L752.5 330.5V283.5V327.5L753.5 316.5V318.5V287.5V316.5L754.5 328.5V330.5V282.5V329.5L755.5 343.5V345.5V283.5V343.5L756.5 316.5V318.5V284.5V318.5L757.5 314.5V315.5V283.5V313.5L758.5 319.5V284.5V322.5V321.5L759.5 311.5V285.5V312.5V310.5H760.5V311.5V285.5V310.5L761.5 315.5V288.5V316.5L762.5 319.5V320.5V288.5V319.5L763.5 312.5V314.5V286.5V292.5L764.5 314.5V315.5V286.5V314.5L765.5 312.5V316.5V286.5V315.5H766.5V286.5V314.5L767.5 316.5V286.5V315.5L768.5 314.5V315.5V286.5V314.5L769.5 337.5V338.5V288.5V336.5L770.5 321.5V322.5V289.5V322.5L771.5 318.5V320.5V288.5V318.5L772.5 336.5V338.5V288.5V335.5L773.5 322.5V324.5V289.5V320.5L774.5 354.5V290.5V351.5L775.5 317.5V318.5V290.5V317.5L776.5 320.5V290.5V318.5L777.5 316.5V291.5V317.5V315.5L778.5 320.5V322.5V291.5V322.5L779.5 318.5V292.5V319.5V318.5L780.5 351.5V352.5V291.5V351.5L781.5 326.5V328.5V291.5V326.5L782.5 324.5V291.5V326.5V325.5L783.5 292.5V318.5L784.5 326.5V327.5V293.5V325.5L785.5 309.5V313.5V293.5V299.5L786.5 320.5V295.5V321.5V319.5L787.5 320.5V295.5V319.5L788.5 346.5V347.5V296.5V347.5L789.5 298.5V336.5V295.5V333.5L790.5 323.5V324.5V295.5V324.5L791.5 323.5V324.5V295.5V324.5L792.5 325.5V295.5V325.5L793.5 329.5V295.5V329.5L794.5 297.5V323.5V295.5V320.5L795.5 330.5V331.5V295.5V330.5L796.5 331.5V333.5V295.5V331.5L797.5 332.5V296.5V335.5V334.5L798.5 337.5V298.5V340.5V338.5L799.5 327.5V328.5V298.5V325.5L800.5 323.5V299.5V325.5V323.5L801.5 322.5V300.5V323.5V322.5L802.5 327.5V328.5V300.5V326.5L803.5 323.5V326.5V299.5V326.5L804.5 329.5V330.5V298.5V328.5L805.5 301.5V334.5V300.5V333.5L806.5 330.5V331.5V298.5L807.5 328.5V329.5V299.5V327.5H808.5V298.5V328.5V327.5L809.5 323.5V325.5V300.5V324.5L810.5 326.5V327.5V301.5V326.5L811.5 325.5V327.5V304.5V327.5L812.5 334.5V302.5V335.5V305.5L813.5 350.5V351.5V302.5V351.5L814.5 327.5V328.5V301.5V310.5L815.5 326.5V327.5V301.5V326.5L816.5 350.5V352.5V303.5V350.5L817.5 331.5V334.5V304.5V331.5L818.5 328.5V302.5V330.5V328.5L819.5 319.5V322.5V304.5V322.5L820.5 326.5V328.5V305.5V326.5L821.5 323.5V326.5V305.5V325.5L822.5 328.5V305.5V325.5L823.5 322.5V323.5V304.5V322.5L824.5 332.5V333.5V304.5V330.5L825.5 324.5V303.5V325.5V324.5L826.5 309.5V326.5V304.5V326.5L827.5 332.5V333.5V305.5V333.5L828.5 353.5V308.5V351.5L829.5 314.5V327.5V309.5V325.5L830.5 329.5V308.5V329.5H831.5V306.5V325.5L832.5 327.5V305.5V328.5V326.5L833.5 331.5V332.5V306.5V331.5L834.5 328.5V330.5V307.5V330.5H835.5V332.5V308.5V329.5L836.5 328.5V329.5V310.5V325.5H837.5V326.5V309.5V325.5L838.5 324.5V327.5V307.5V326.5L839.5 328.5V332.5V307.5V330.5L840.5 328.5V329.5V307.5V328.5L841.5 331.5V334.5V307.5V333.5L842.5 346.5V308.5V348.5V345.5L843.5 327.5V328.5V310.5V326.5L844.5 329.5V309.5V327.5H845.5V329.5V309.5V328.5L846.5 309.5V334.5V308.5V334.5L847.5 328.5V329.5V308.5V328.5L848.5 326.5V309.5V328.5V326.5L849.5 331.5V333.5V310.5V315.5L850.5 330.5V331.5V311.5V330.5L851.5 332.5V333.5V310.5V330.5L852.5 329.5V332.5V310.5V332.5L853.5 333.5V335.5V309.5V335.5L854.5 331.5V311.5V329.5L855.5 331.5V332.5V311.5V331.5L856.5 328.5V329.5V312.5V329.5L857.5 326.5V329.5V311.5V327.5L858.5 329.5V331.5V311.5V330.5L859.5 332.5V333.5V311.5V333.5L860.5 334.5V311.5V336.5V335.5L861.5 328.5V330.5V313.5V330.5L862.5 329.5V330.5V313.5V329.5L863.5 326.5V329.5V311.5V329.5L864.5 338.5V339.5V311.5V332.5H865.5V312.5V332.5H866.5V314.5V320.5L867.5 342.5V314.5V341.5L868.5 318.5V334.5V312.5V332.5L869.5 331.5V333.5V312.5V331.5L870.5 329.5V331.5V314.5V328.5L871.5 337.5V316.5V336.5L872.5 342.5V314.5V340.5L873.5 328.5V331.5V314.5V328.5L874.5 331.5V314.5V331.5H875.5V315.5V329.5L876.5 330.5V332.5V316.5V329.5L877.5 331.5V333.5V314.5V333.5L878.5 331.5V314.5V334.5L879.5 316.5V334.5V315.5V333.5L880.5 334.5V317.5V333.5L881.5 332.5V334.5V316.5V332.5L882.5 320.5V335.5V315.5V332.5L883.5 330.5V332.5V316.5V332.5L884.5 333.5V318.5V329.5L885.5 337.5V338.5V318.5V337.5L886.5 332.5V335.5V316.5V335.5L887.5 330.5V332.5V316.5V332.5L888.5 333.5V318.5V334.5V333.5L889.5 337.5V319.5V337.5L890.5 330.5V332.5V317.5V331.5L891.5 334.5V318.5V334.5L892.5 332.5V334.5V320.5V332.5H893.5V333.5V318.5V332.5L894.5 335.5V318.5V336.5V321.5L895.5 330.5V318.5V334.5V329.5L896.5 332.5V334.5V320.5V334.5L897.5 335.5V319.5V333.5L898.5 332.5V335.5V318.5V334.5L899.5 332.5V334.5V320.5V334.5L900.5 333.5V335.5V320.5V335.5L901.5 333.5V334.5V319.5V333.5L902.5 334.5V335.5V320.5V332.5L903.5 331.5V334.5V321.5V333.5L904.5 332.5V334.5V320.5V327.5L905.5 334.5V321.5V336.5V335.5L906.5 339.5V340.5V322.5V339.5L907.5 332.5V334.5V321.5V333.5L908.5 339.5V341.5V321.5V340.5L909.5 334.5V335.5V324.5V332.5L910.5 334.5V336.5V322.5V334.5L911.5 332.5V334.5V321.5V332.5H912.5V335.5V324.5V334.5L913.5 328.5V341.5V322.5V340.5L914.5 334.5V335.5V322.5V334.5L915.5 336.5V337.5V324.5V336.5L916.5 337.5V322.5V336.5L917.5 335.5V336.5V323.5V336.5L918.5 337.5V324.5V337.5H919.5V338.5V323.5V338.5L920.5 334.5V325.5V337.5V334.5L921.5 336.5V324.5V335.5H922.5V336.5V323.5V334.5L923.5 342.5V343.5V325.5V343.5L924.5 337.5V338.5V325.5V337.5H925.5V325.5V337.5H926.5V325.5V337.5L927.5 341.5V325.5V339.5L928.5 343.5V327.5V342.5L929.5 337.5V338.5V325.5V338.5L930.5 342.5V343.5V327.5V342.5L931.5 338.5V339.5V326.5V338.5L932.5 343.5V326.5V342.5L933.5 333.5V340.5V327.5V331.5L934.5 341.5V326.5V340.5L935.5 339.5V340.5V328.5V339.5L936.5 337.5V339.5V326.5V338.5L937.5 340.5V328.5V339.5L938.5 338.5V340.5V328.5V337.5L939.5 340.5V341.5V330.5V340.5L940.5 330.5V340.5V327.5V340.5L941.5 334.5V341.5V328.5V340.5L942.5 339.5V328.5V339.5H943.5V340.5V328.5V340.5H944.5V341.5V328.5V340.5H945.5V330.5V341.5V340.5L946.5 341.5V328.5V335.5L947.5 342.5V343.5V330.5V342.5L948.5 344.5V329.5V335.5L949.5 341.5V342.5V330.5V341.5H950.5V343.5V330.5V342.5L951.5 341.5V342.5V330.5V342.5H952.5V330.5V341.5H953.5V343.5V331.5V342.5L954.5 343.5V330.5V342.5H955.5V330.5V343.5V342.5H956.5V331.5V343.5V342.5L957.5 341.5V343.5V331.5V343.5H958.5V333.5V342.5H959.5V343.5V332.5V343.5H960.5V331.5V342.5L961.5 343.5V332.5V343.5H962.5V332.5V343.5H963.5V332.5V343.5H964.5V332.5V343.5H965.5V332.5V343.5H966.5V333.5V343.5H967.5V333.5V343.5H968.5V333.5V343.5H969.5V334.5V344.5V343.5H970.5V344.5V333.5V343.5L971.5 344.5V333.5V343.5H972.5V344.5V334.5V344.5H973.5V334.5V344.5H974.5V334.5V344.5H975.5V334.5V344.5H976.5V335.5V344.5H977.5V335.5V344.5H978.5V335.5V342.5L979.5 344.5V335.5V344.5H980.5V336.5V344.5H981.5V335.5V344.5H982.5V336.5V344.5H983.5V336.5V344.5H984.5V336.5V344.5H985.5V337.5V344.5H986.5V337.5V345.5H987.5V336.5V345.5H988.5V336.5V345.5H989.5V337.5V345.5H990.5V337.5V345.5L991.5 338.5V345.5V337.5V345.5H992.5V337.5V345.5H993.5V337.5V345.5H994.5V337.5V345.5H995.5V338.5V345.5H996.5V338.5V345.5H997.5V338.5V345.5H998.5V338.5V345.5H999.5V339.5V345.5H1000.5V338.5V345.5H1001.5V339.5V345.5H1002.5V339.5V345.5H1003.5V339.5V345.5H1004.5V339.5V346.5H1005.5V340.5V346.5H1006.5V340.5V346.5H1007.5V339.5V346.5H1008.5V340.5V346.5H1009.5V339.5V346.5H1010.5V339.5V346.5H1011.5V340.5V346.5H1012.5V340.5V346.5H1013.5V340.5V346.5H1014.5V340.5V346.5H1015.5V340.5V346.5H1016.5V340.5V346.5H1017.5V340.5V346.5L1018.5 344.5V346.5V340.5V346.5H1019.5V341.5V346.5H1020.5V341.5V346.5H1021.5V341.5V347.5H1022.5V341.5V347.5H1023.5V341.5V347.5H1024.5V341.5V347.5H1025.5V341.5V347.5H1026.5V341.5V342.5L1027.5 347.5V342.5V347.5H1028.5V341.5V347.5H1029.5V342.5V347.5H1030.5V341.5V347.5H1031.5V342.5V347.5H1032.5V342.5V347.5H1033.5V342.5V347.5H1034.5V342.5V347.5H1035.5V342.5V347.5H1036.5V342.5V347.5H1037.5V342.5V347.5L1038.5 343.5V347.5V342.5V347.5H1039.5V342.5V347.5" stroke="#ff0000" fill="none"/>
<path d="M58.5 203.5H59.5H60.5H61.5H62.5H63.5H64.5H65.5H66.5H67.5H68.5H69.5H70.5H71.5H72.5H73.5H74.5H75.5H76.5H77.5H78.5H79.5H80.5H81.5H82.5H83.5H84.5H85.5H86.5H87.5H88.5H89.5H90.5H91.5H92.5H93.5H94.5H95.5H96.5H97.5H98.5H99.5H100.5H101.5H102.5H103.5H104.5H105.5H106.5H107.5H108.5H109.5H110.5H111.5H112.5H113.5H114.5H115.5H116.5H117.5H118.5H119.5H120.5H121.5H122.5H123.5H124.5H125.5H126.5H127.5H128.5H129.5H130.5H131.5H132.5H133.5H134.5H135.5H136.5H137.5H138.5L139.5 202.5H140.5H141.5H142.5H143.5H144.5H145.5H146.5H147.5H148.5H149.5H150.5H151.5H152.5H153.5H154.5H155.5H156.5H157.5H158.5H159.5H160.5H161.5H162.5H163.5H164.5H165.5H166.5H167.5H168.5H169.5H170.5H171.5H172.5H173.5V201.5H174.5H175.5H176.5H177.5H178.5H179.5H180.5H181.5H182.5H183.5H184.5H185.5H186.5H187.5H188.5H189.5V200.5H190.5H191.5H192.5H193.5H194.5H195.5H196.5H197.5H198.5H199.5V199.5H200.5H201.5H202.5H203.5H204.5H205.5H206.5H207.5L208.5 198.5H209.5H210.5H211.5H212.5V197.5H213.5H214.5H215.5H216.5H217.5V196.5H218.5H219.5H220.5H221.5V195.5H222.5H223.5L224.5 194.5H225.5V193.5H226.5H227.5H228.5V192.5H229.5H230.5L231.5 191.5H232.5V190.5H233.5V189.5L234.5 188.5L235.5 187.5H236.5V186.5H237.5V185.5H238.5V184.5H239.5L240.5 183.5L241.5 182.5V158.5L242.5 149.5V144.5L243.5 140.5V137.5L244.5 134.5V132.5L245.5 130.5V129.5L246.5 127.5V126.5L247.5 125.5V124.5L248.5 123.5V122.5L249.5 121.5V120.5L250.5 119.5V120.5L251.5 121.5V122.5L252.5 123.5V124.5L253.5 126.5V127.5L254.5 129.5V131.5L255.5 133.5V135.5L256.5 138.5V142.5L257.5 148.5V156.5L258.5 183.5L259.5 184.5L260.5 185.5L261.5 186.5L262.5 187.5V188.5H263.5V190.5L264.5 191.5L265.5 192.5V193.5H266.5L267.5 194.5H268.5V195.5H269.5L270.5 196.5L271.5 197.5L272.5 198.5H273.5V199.5H274.5H275.5V200.5H276.5L277.5 201.5H278.5H279.5V202.5H280.5H281.5H282.5V203.5H283.5H284.5H285.5H286.5H287.5V204.5H288.5H289.5L290.5 203.5H291.5H292.5H293.5L294.5 202.5H295.5V201.5H296.5V200.5H297.5L298.5 199.5H299.5V197.5L300.5 196.5V194.5L301.5 193.5L302.5 192.5V191.5L303.5 190.5L304.5 161.5V153.5L305.5 147.5V143.5L306.5 140.5V136.5L307.5 134.5V132.5L308.5 134.5V136.5L309.5 138.5V140.5L310.5 143.5V147.5L311.5 153.5V190.5L312.5 191.5V192.5L313.5 193.5V194.5L314.5 195.5V196.5L315.5 197.5V199.5L316.5 200.5L317.5 201.5L318.5 202.5V203.5H319.5V204.5L320.5 205.5H321.5V206.5H322.5V207.5H323.5L324.5 208.5H325.5V209.5H326.5H327.5H328.5H329.5H330.5H331.5L332.5 208.5H333.5V207.5H334.5V206.5H335.5V205.5L336.5 203.5V201.5L337.5 200.5V199.5L338.5 197.5V196.5L339.5 168.5V159.5L340.5 154.5V150.5L341.5 147.5V145.5L342.5 147.5V150.5L343.5 154.5V168.5L344.5 196.5V197.5L345.5 199.5V200.5L346.5 202.5V203.5L347.5 205.5V207.5L348.5 208.5L349.5 209.5V210.5L350.5 211.5L351.5 212.5L352.5 213.5L353.5 214.5H354.5V215.5H355.5H356.5H357.5H358.5H359.5V214.5H360.5V212.5H361.5V210.5L362.5 208.5V207.5L363.5 205.5V179.5L364.5 170.5V165.5L365.5 161.5V158.5L366.5 161.5V170.5L367.5 179.5V204.5L368.5 206.5V212.5L369.5 216.5V221.5L370.5 223.5V226.5L371.5 228.5V232.5L372.5 234.5V235.5L373.5 238.5V240.5L374.5 242.5V245.5L375.5 247.5V249.5L376.5 250.5V252.5L377.5 254.5V255.5L378.5 257.5V258.5L379.5 260.5V262.5L380.5 264.5V265.5L381.5 266.5V268.5L382.5 269.5V271.5L383.5 272.5V274.5L384.5 275.5V274.5L385.5 273.5V271.5L386.5 270.5V268.5L387.5 267.5V265.5L388.5 264.5V263.5L389.5 262.5V259.5L390.5 257.5V254.5L391.5 253.5V251.5L392.5 250.5V245.5L393.5 244.5V242.5L394.5 238.5V235.5L395.5 233.5V227.5L396.5 223.5V220.5L397.5 210.5V200.5L398.5 182.5V174.5L399.5 169.5V174.5L400.5 182.5V200.5L401.5 203.5V206.5L402.5 212.5V215.5L403.5 218.5V219.5L404.5 220.5V221.5H405.5L406.5 222.5V221.5H407.5V220.5L408.5 219.5V215.5L409.5 213.5V211.5L410.5 206.5V199.5L411.5 181.5V174.5L412.5 169.5V181.5L413.5 199.5V202.5L414.5 206.5V213.5L415.5 215.5V218.5L416.5 219.5V222.5L417.5 223.5V224.5H418.5H419.5V223.5L420.5 222.5V218.5L421.5 217.5V208.5L422.5 205.5V179.5L423.5 174.5V187.5L424.5 205.5V208.5L425.5 212.5V219.5L426.5 221.5V226.5L427.5 228.5V229.5L428.5 230.5V231.5H429.5H430.5V229.5L431.5 228.5V222.5L432.5 217.5V195.5L433.5 187.5V195.5L434.5 217.5V232.5L435.5 235.5V240.5L436.5 242.5V245.5L437.5 247.5V249.5L438.5 252.5L439.5 254.5L440.5 257.5L441.5 258.5V148.5L442.5 258.5L443.5 257.5L444.5 254.5L445.5 252.5V249.5L446.5 244.5L447.5 239.5L448.5 230.5L449.5 215.5V184.5L450.5 215.5L451.5 227.5L452.5 232.5V235.5L453.5 236.5L454.5 235.5V232.5L455.5 226.5L456.5 214.5L457.5 184.5V214.5L458.5 226.5L459.5 232.5V236.5L460.5 237.5H461.5V235.5L462.5 230.5L463.5 218.5V188.5L464.5 218.5V230.5L465.5 236.5L466.5 239.5V241.5L467.5 242.5H468.5V238.5L469.5 229.5V199.5L470.5 229.5L471.5 248.5V258.5L472.5 266.5V272.5L473.5 277.5V282.5L474.5 287.5L475.5 292.5V296.5L476.5 292.5V287.5L477.5 282.5V277.5L478.5 271.5V264.5L479.5 256.5V244.5L480.5 225.5L481.5 194.5V225.5L482.5 236.5V241.5L483.5 243.5L484.5 242.5V240.5L485.5 234.5V223.5L486.5 192.5V223.5L487.5 234.5V243.5L488.5 244.5L489.5 242.5V237.5L490.5 227.5V196.5L491.5 226.5V237.5L492.5 243.5V245.5L493.5 246.5L494.5 244.5V236.5L495.5 207.5V236.5L496.5 246.5V250.5L497.5 252.5V255.5L498.5 256.5V257.5L499.5 258.5V161.5V258.5L500.5 257.5V256.5L501.5 254.5V253.5L502.5 251.5V243.5L503.5 232.5V202.5L504.5 231.5V244.5L505.5 245.5H506.5V241.5L507.5 230.5V200.5V230.5L508.5 242.5V245.5L509.5 244.5V245.5L510.5 243.5V232.5L511.5 203.5V240.5L512.5 243.5V244.5H513.5L514.5 243.5V214.5L515.5 242.5V261.5L516.5 264.5V275.5L517.5 279.5V289.5L518.5 292.5V284.5L519.5 279.5V270.5L520.5 264.5V250.5L521.5 236.5V208.5V236.5L522.5 241.5V243.5L523.5 244.5V241.5L524.5 235.5V206.5V235.5L525.5 241.5V242.5L526.5 244.5V245.5V243.5L527.5 237.5V210.5V238.5L528.5 248.5V249.5L529.5 245.5V244.5L530.5 243.5V220.5V243.5L531.5 246.5V251.5L532.5 253.5V254.5L533.5 255.5V210.5V252.5L534.5 256.5V257.5V252.5V255.5L535.5 248.5V236.5L536.5 214.5V245.5L537.5 251.5V249.5V255.5V252.5L538.5 242.5V208.5V233.5L539.5 242.5V244.5L540.5 245.5V244.5V247.5L541.5 241.5V212.5V246.5H542.5V237.5L543.5 248.5V226.5L544.5 234.5V250.5L545.5 259.5V286.5L546.5 290.5V280.5V281.5L547.5 263.5V236.5V244.5L548.5 247.5V219.5V246.5H549.5V254.5V235.5L550.5 241.5V217.5L551.5 243.5V242.5V252.5L552.5 247.5V249.5V233.5V236.5L553.5 217.5V250.5V248.5L554.5 262.5V267.5V230.5L555.5 228.5V250.5L556.5 232.5V262.5L557.5 244.5V188.5V261.5V245.5L558.5 247.5V248.5V235.5L559.5 227.5V220.5V255.5V231.5L560.5 244.5V232.5V247.5L561.5 251.5V223.5V260.5L562.5 234.5V251.5V233.5L563.5 261.5V218.5V252.5L564.5 258.5V232.5L565.5 245.5V232.5V260.5V238.5L566.5 242.5V277.5V271.5L567.5 276.5V241.5L568.5 280.5V223.5L569.5 249.5V237.5V245.5L570.5 256.5V222.5V240.5L571.5 260.5V253.5V262.5V258.5L572.5 260.5V226.5V258.5L573.5 266.5V245.5V264.5L574.5 260.5V234.5V272.5L575.5 264.5V275.5V211.5L576.5 243.5V271.5V245.5L577.5 263.5V226.5V254.5L578.5 246.5V265.5V239.5V252.5L579.5 226.5V261.5V239.5L580.5 241.5V264.5V228.5V241.5L581.5 257.5V246.5V264.5V261.5L582.5 253.5V236.5V269.5V242.5L583.5 264.5V259.5V285.5V260.5L584.5 286.5V250.5V257.5L585.5 244.5V232.5V271.5V254.5L586.5 268.5V271.5V231.5V260.5L587.5 258.5V261.5V240.5L588.5 241.5V229.5V253.5V252.5L589.5 253.5V240.5V264.5V244.5L590.5 270.5V254.5V280.5V268.5L591.5 209.5V271.5V270.5L592.5 261.5V237.5V270.5L593.5 266.5V232.5V257.5L594.5 252.5V243.5V271.5V260.5L595.5 234.5V267.5V251.5L596.5 270.5V244.5V271.5L597.5 265.5V262.5V290.5L598.5 292.5V297.5V239.5L599.5 249.5V277.5V248.5V261.5L600.5 269.5V232.5V282.5V259.5L601.5 260.5V233.5V267.5V252.5L602.5 258.5V273.5V245.5V253.5L603.5 261.5V273.5V211.5V270.5L604.5 281.5V296.5V252.5V286.5L605.5 239.5V274.5V265.5L606.5 249.5V233.5V272.5V253.5L607.5 270.5V235.5V271.5L608.5 257.5V247.5V284.5V283.5L609.5 264.5V293.5V280.5L610.5 272.5V275.5V238.5V259.5L611.5 275.5V280.5V234.5V250.5L612.5 271.5V277.5V239.5V265.5L613.5 263.5V277.5V250.5L614.5 255.5V276.5V230.5L615.5 274.5V284.5V253.5V274.5L616.5 241.5V278.5L617.5 241.5V308.5V288.5L618.5 240.5V285.5V265.5L619.5 241.5V304.5L620.5 278.5V287.5V257.5V269.5L621.5 244.5V273.5V241.5L622.5 273.5V285.5V240.5L623.5 270.5V282.5V247.5V281.5L624.5 277.5V285.5V215.5V285.5L625.5 272.5V282.5V245.5V280.5L626.5 292.5V299.5V242.5V299.5L627.5 273.5V243.5V283.5V276.5L628.5 257.5V244.5V290.5V284.5L629.5 280.5V312.5V274.5V285.5L630.5 290.5V248.5V295.5V261.5L631.5 242.5V308.5V257.5L632.5 274.5V285.5V248.5V264.5L633.5 271.5V292.5V244.5V257.5L634.5 285.5V288.5V248.5V280.5L635.5 283.5V249.5V284.5V274.5L636.5 246.5V283.5V270.5L637.5 274.5V269.5V289.5V280.5L638.5 274.5V252.5V284.5V270.5H639.5V246.5V287.5V250.5L640.5 280.5V283.5V252.5V275.5L641.5 263.5V295.5V223.5V288.5L642.5 287.5V254.5V281.5L643.5 251.5V287.5V248.5V281.5L644.5 287.5V251.5V289.5V287.5L645.5 293.5V297.5V251.5V289.5L646.5 281.5V287.5V247.5V271.5L647.5 265.5V248.5V286.5V271.5L648.5 251.5V299.5V236.5V290.5L649.5 267.5V255.5V287.5V283.5L650.5 287.5V252.5V293.5V281.5L651.5 279.5V253.5V292.5V290.5L652.5 277.5V319.5V252.5V305.5L653.5 272.5V287.5V254.5V276.5L654.5 288.5V290.5V255.5V280.5L655.5 275.5V292.5V231.5V283.5L656.5 256.5V304.5V251.5V292.5L657.5 297.5V254.5V280.5H658.5V270.5V299.5V286.5L659.5 299.5V255.5V307.5V293.5L660.5 278.5V253.5V306.5V256.5L661.5 270.5V237.5V295.5V291.5L662.5 280.5V252.5V317.5L663.5 281.5V254.5V292.5V270.5L664.5 282.5V304.5V271.5V275.5L665.5 315.5V254.5V319.5V281.5L666.5 273.5V253.5V298.5V294.5L667.5 285.5V246.5V306.5V277.5H668.5V295.5V260.5L669.5 293.5V260.5V294.5V290.5L670.5 292.5V314.5V259.5V291.5L671.5 283.5V255.5V296.5V271.5L672.5 297.5V236.5V313.5V301.5L673.5 285.5V290.5V257.5V290.5L674.5 291.5V298.5V256.5V279.5L675.5 271.5V298.5V260.5V296.5L676.5 305.5V257.5V311.5V299.5L677.5 294.5V249.5V290.5L678.5 298.5V259.5V276.5L679.5 282.5V296.5V259.5V293.5L680.5 294.5V261.5V299.5L681.5 288.5V258.5V294.5V287.5L682.5 263.5V239.5V303.5V266.5L683.5 302.5V259.5V279.5L684.5 302.5V262.5V318.5V305.5L685.5 284.5V302.5V262.5V286.5L686.5 278.5V261.5V305.5V276.5L687.5 252.5V299.5L688.5 285.5V301.5V260.5V288.5L689.5 309.5V267.5V318.5V308.5L690.5 265.5V295.5V263.5V283.5L691.5 284.5V245.5V302.5V290.5L692.5 308.5V309.5V262.5V301.5L693.5 287.5V322.5V267.5V305.5L694.5 311.5V319.5V262.5V313.5L695.5 289.5V305.5V259.5V291.5L696.5 314.5V326.5V264.5V311.5L697.5 293.5V307.5V268.5V306.5L698.5 294.5V302.5V265.5V299.5H699.5V248.5V300.5V294.5H700.5V301.5V267.5V298.5L701.5 285.5V303.5V266.5V298.5L702.5 286.5V299.5V262.5V295.5L703.5 292.5V266.5V300.5V267.5L704.5 297.5V269.5V302.5V287.5L705.5 320.5V266.5V302.5H706.5V251.5V304.5V303.5L707.5 296.5V309.5V267.5V293.5L708.5 297.5V302.5V267.5V302.5L709.5 296.5V264.5V329.5V318.5L710.5 303.5V304.5V270.5V302.5L711.5 296.5V303.5V271.5V300.5L712.5 307.5V315.5V268.5V301.5L713.5 295.5V254.5V301.5V291.5L714.5 309.5V271.5V310.5V307.5L715.5 276.5V314.5V269.5V311.5L716.5 309.5V266.5V314.5V299.5L717.5 302.5V304.5V270.5V301.5L718.5 303.5V310.5V271.5V277.5L719.5 300.5V306.5V257.5V298.5L720.5 296.5V271.5V306.5V297.5L721.5 295.5V271.5V304.5V300.5L722.5 313.5V268.5V305.5H723.5V272.5V308.5V302.5L724.5 306.5V272.5V301.5L725.5 307.5V269.5V311.5V304.5L726.5 300.5V302.5V273.5V295.5L727.5 309.5V321.5V260.5V314.5L728.5 310.5V275.5V308.5L729.5 311.5V312.5V278.5V307.5H730.5V310.5V271.5V306.5L731.5 308.5V317.5V279.5V312.5L732.5 308.5V313.5V272.5V310.5L733.5 309.5V311.5V275.5V310.5L734.5 312.5V276.5V315.5L735.5 311.5V316.5V273.5V312.5L736.5 327.5V279.5V328.5V324.5L737.5 310.5V315.5V274.5V315.5L738.5 311.5V314.5V276.5V311.5L739.5 305.5V309.5V280.5V307.5L740.5 303.5V306.5V266.5V304.5L741.5 311.5V278.5V310.5L742.5 309.5V275.5V312.5V309.5L743.5 313.5V315.5V278.5V312.5L744.5 307.5V309.5V276.5V308.5L745.5 318.5V282.5V321.5V320.5L746.5 286.5V337.5V269.5V333.5L747.5 312.5V316.5V281.5V314.5L748.5 309.5V310.5V278.5V309.5L749.5 312.5V314.5V282.5V314.5L750.5 313.5V314.5V281.5V313.5L751.5 314.5V278.5V315.5V314.5H752.5V283.5V311.5L753.5 316.5V272.5V318.5V316.5L754.5 312.5V313.5V273.5L755.5 343.5V345.5V283.5V343.5L756.5 316.5V318.5V281.5V318.5L757.5 314.5V315.5V283.5V313.5L758.5 319.5V322.5V274.5V321.5L759.5 311.5V285.5V312.5V310.5H760.5V311.5V275.5V310.5L761.5 315.5V288.5V316.5L762.5 319.5V320.5V283.5V319.5L763.5 312.5V314.5V286.5V292.5L764.5 314.5V315.5V283.5V314.5L765.5 312.5V316.5V284.5V315.5H766.5V286.5V314.5L767.5 316.5V279.5V315.5L768.5 314.5V315.5V286.5V314.5L769.5 337.5V338.5V285.5V336.5L770.5 321.5V322.5V280.5V322.5L771.5 318.5V320.5V288.5V318.5L772.5 336.5V338.5V286.5V335.5L773.5 322.5V324.5V287.5V320.5L774.5 342.5V343.5V290.5V340.5L775.5 317.5V318.5V287.5V317.5L776.5 320.5V283.5L777.5 316.5V291.5V317.5V315.5L778.5 320.5V322.5V284.5V322.5L779.5 318.5V285.5V318.5L780.5 351.5V352.5V291.5V351.5L781.5 326.5V328.5V289.5V326.5L782.5 324.5V286.5V326.5V325.5L783.5 292.5V318.5L784.5 320.5V290.5V318.5L785.5 309.5V313.5V291.5V299.5L786.5 320.5V321.5V291.5V319.5L787.5 320.5V295.5V319.5L788.5 346.5V347.5V292.5V347.5L789.5 298.5V326.5V290.5V323.5H790.5V324.5V293.5V324.5L791.5 323.5V324.5V291.5V324.5L792.5 325.5V295.5V325.5L793.5 323.5V293.5V323.5L794.5 297.5V323.5V294.5V320.5L795.5 330.5V331.5V293.5V330.5L796.5 331.5V333.5V295.5V331.5L797.5 332.5V335.5V294.5V334.5L798.5 337.5V298.5V340.5V338.5L799.5 327.5V328.5V295.5V325.5L800.5 323.5V296.5V325.5V323.5L801.5 322.5V296.5V323.5V322.5L802.5 327.5V328.5V297.5V326.5L803.5 323.5V326.5V297.5V326.5L804.5 329.5V330.5V297.5V328.5L805.5 301.5V334.5V298.5V333.5L806.5 330.5V298.5V332.5V298.5L807.5 323.5V324.5V298.5V323.5L808.5 328.5V298.5V327.5L809.5 323.5V325.5V299.5V325.5L810.5 327.5V299.5V326.5L811.5 325.5V328.5V299.5V327.5L812.5 334.5V336.5V300.5V305.5L813.5 350.5V351.5V300.5V351.5L814.5 328.5V300.5V310.5L815.5 327.5V300.5V326.5L816.5 350.5V352.5V303.5V350.5L817.5 332.5V334.5V304.5V332.5L818.5 328.5V330.5V302.5V328.5L819.5 319.5V322.5V304.5V322.5L820.5 326.5V327.5V306.5V325.5L821.5 324.5V326.5V306.5V326.5L822.5 328.5V305.5V329.5V326.5L823.5 322.5V323.5V305.5V323.5L824.5 333.5V304.5V331.5L825.5 324.5V303.5V326.5V324.5L826.5 310.5V305.5V327.5L827.5 333.5V334.5V306.5V333.5L828.5 354.5V308.5V352.5L829.5 315.5V328.5V310.5V325.5L830.5 329.5V330.5V308.5V330.5L831.5 329.5V330.5V306.5V326.5L832.5 328.5V306.5V326.5L833.5 331.5V333.5V306.5V332.5L834.5 329.5V331.5V307.5V330.5H835.5V333.5V308.5V330.5L836.5 328.5V310.5V330.5V326.5H837.5V327.5V309.5V325.5L838.5 324.5V327.5V308.5V326.5L839.5 329.5V333.5V308.5V331.5L840.5 329.5V330.5V307.5V329.5L841.5 332.5V334.5V308.5V334.5L842.5 346.5V309.5V348.5V346.5L843.5 328.5V311.5V327.5L844.5 330.5V310.5V327.5L845.5 328.5V330.5V309.5V329.5L846.5 310.5V335.5V309.5V335.5L847.5 329.5V330.5V309.5V329.5L848.5 327.5V328.5V310.5V327.5L849.5 331.5V334.5V311.5V316.5L850.5 331.5V332.5V312.5V331.5L851.5 333.5V311.5V331.5L852.5 330.5V333.5V310.5V333.5L853.5 334.5V336.5V310.5V336.5L854.5 332.5V311.5V330.5L855.5 332.5V333.5V312.5V332.5L856.5 329.5V330.5V313.5V330.5L857.5 327.5V330.5V312.5V328.5L858.5 330.5V332.5V312.5V331.5L859.5 333.5V334.5V312.5V334.5L860.5 335.5V312.5V337.5V336.5L861.5 329.5V331.5V314.5V331.5L862.5 330.5V331.5V314.5V330.5L863.5 327.5V330.5V312.5V330.5L864.5 339.5V340.5V312.5V333.5H865.5V313.5V333.5H866.5V315.5V321.5L867.5 343.5V316.5V342.5L868.5 319.5V335.5V314.5V334.5L869.5 332.5V334.5V313.5V333.5L870.5 330.5V332.5V315.5V329.5L871.5 338.5V317.5V337.5L872.5 343.5V316.5V341.5L873.5 329.5V332.5V315.5V329.5L874.5 332.5V333.5V315.5V332.5H875.5V316.5V330.5L876.5 332.5V333.5V317.5V331.5L877.5 332.5V335.5V315.5V335.5L878.5 332.5V335.5V315.5V335.5L879.5 318.5V335.5V316.5V334.5L880.5 335.5V318.5V334.5H881.5V335.5V317.5V333.5L882.5 322.5V336.5V317.5V333.5L883.5 331.5V334.5V317.5V334.5H884.5V319.5V331.5L885.5 338.5V340.5V319.5V338.5L886.5 333.5V336.5V318.5V336.5L887.5 331.5V334.5V318.5V333.5L888.5 335.5V319.5V334.5L889.5 338.5V320.5V338.5L890.5 331.5V333.5V318.5V332.5L891.5 335.5V319.5V335.5L892.5 334.5V335.5V321.5V334.5H893.5V320.5V333.5L894.5 336.5V337.5V319.5V323.5L895.5 332.5V335.5V320.5V330.5L896.5 333.5V335.5V322.5V335.5L897.5 336.5V320.5V334.5H898.5V336.5V320.5V335.5L899.5 333.5V335.5V321.5V335.5L900.5 334.5V337.5V321.5V336.5L901.5 334.5V335.5V320.5V334.5L902.5 336.5V321.5V333.5L903.5 332.5V335.5V322.5V334.5L904.5 333.5V335.5V321.5V328.5L905.5 336.5V337.5V322.5V336.5L906.5 340.5V341.5V323.5V340.5L907.5 334.5V335.5V322.5V334.5L908.5 341.5V342.5V322.5V341.5L909.5 335.5V336.5V325.5V334.5L910.5 336.5V337.5V323.5V335.5L911.5 333.5V335.5V322.5V333.5H912.5V336.5V325.5V335.5L913.5 329.5V342.5V323.5V342.5L914.5 335.5V336.5V323.5V336.5L915.5 337.5V338.5V325.5V337.5L916.5 338.5V339.5V323.5V338.5L917.5 336.5V338.5V324.5V337.5L918.5 338.5V325.5V338.5H919.5V340.5V324.5V339.5L920.5 336.5V338.5V326.5V335.5L921.5 337.5V325.5V337.5H922.5V325.5V335.5L923.5 343.5V345.5V326.5V344.5L924.5 338.5V339.5V326.5V339.5L925.5 338.5V326.5V339.5V338.5H926.5V326.5V338.5L927.5 342.5V326.5V340.5L928.5 344.5V329.5V343.5L929.5 338.5V339.5V326.5V339.5L930.5 343.5V344.5V328.5V343.5L931.5 339.5V340.5V327.5V340.5L932.5 344.5V327.5V344.5L933.5 334.5V342.5V328.5V332.5L934.5 342.5V328.5V341.5H935.5V329.5V340.5L936.5 338.5V340.5V328.5V340.5L937.5 341.5V330.5V342.5V340.5H938.5V341.5V329.5V339.5L939.5 341.5V342.5V331.5V341.5L940.5 332.5V341.5V328.5V341.5L941.5 335.5V342.5V329.5V341.5L942.5 340.5V329.5V341.5V340.5H943.5V341.5V330.5V341.5H944.5V342.5V330.5V341.5L945.5 342.5V331.5V341.5L946.5 342.5V330.5V337.5L947.5 343.5V344.5V331.5V343.5L948.5 345.5V330.5V336.5L949.5 342.5V343.5V331.5V342.5H950.5V344.5V331.5V344.5L951.5 343.5V332.5V343.5H952.5V331.5V342.5L953.5 343.5V344.5V332.5V343.5L954.5 344.5V331.5V343.5H955.5V344.5V332.5V343.5L956.5 344.5V332.5V344.5L957.5 342.5V344.5V332.5V344.5H958.5V334.5V343.5H959.5V344.5V334.5V344.5H960.5V333.5V343.5L961.5 344.5V333.5V344.5H962.5V345.5V333.5V344.5H963.5V333.5V344.5H964.5V333.5V344.5H965.5V345.5V334.5V344.5H966.5V334.5V345.5V344.5H967.5V345.5V334.5V345.5H968.5V335.5V345.5H969.5V335.5V345.5L970.5 344.5V345.5V334.5V345.5H971.5V335.5V345.5H972.5V335.5V345.5H973.5V335.5V345.5H974.5V336.5V345.5H975.5V335.5V345.5H976.5V336.5V345.5H977.5V336.5V345.5H978.5V336.5V343.5L979.5 345.5V336.5V345.5H980.5V337.5V345.5H981.5V336.5V345.5H982.5V337.5V346.5V345.5L983.5 346.5V337.5V346.5H984.5V337.5V346.5H985.5V338.5V346.5H986.5V338.5V346.5H987.5V337.5V346.5H988.5V338.5V346.5H989.5V338.5V346.5H990.5V338.5V346.5L991.5 339.5V346.5H992.5V339.5V346.5H993.5V339.5V346.5H994.5V338.5V346.5H995.5V340.5V346.5H996.5V339.5V346.5H997.5V339.5V346.5H998.5V339.5V346.5H999.5V340.5V346.5H1000.5V339.5V347.5H1001.5V340.5V347.5H1002.5V340.5V347.5H1003.5V340.5V347.5H1004.5V340.5V347.5H1005.5V341.5V347.5H1006.5V341.5V347.5H1007.5V340.5V347.5H1008.5V341.5V347.5H1009.5V341.5V347.5H1010.5V341.5V347.5H1011.5V341.5V347.5H1012.5V341.5V347.5H1013.5V341.5V347.5H1014.5V341.5V347.5H1015.5V341.5V347.5H1016.5V341.5V347.5H1017.5V342.5V347.5L1018.5 346.5V348.5V342.5V348.5H1019.5V342.5V348.5H1020.5V342.5V348.5H1021.5V342.5V348.5H1022.5V342.5V348.5H1023.5V342.5V348.5H1024.5V342.5V348.5H1025.5V342.5V348.5H1026.5V342.5V343.5L1027.5 348.5V343.5V348.5H1028.5V343.5V348.5H1029.5V343.5V348.5H1030.5V343.5V348.5H1031.5V343.5V348.5H1032.5V343.5V348.5H1033.5V343.5V348.5H1034.5V343.5V348.5H1035.5V343.5V349.5H1036.5V344.5V349.5H1037.5V343.5V349.5L1038.5 344.5V349.5H1039.5V344.5V348.5" stroke="#0000ff" fill="none"/>
<path d="M58.5 51.5H1039.5V376.5H58.5Z" stroke="#c0c0c0" fill="none"/>
<path d="M51 51.5H58" stroke="#c0c0c0"/>
<path d="M51 84.5H58" stroke="#c0c0c0"/>
<path d="M51 116.5H58" stroke="#c0c0c0"/>
<path d="M51 149.5H58" stroke="#c0c0c0"/>
<path d="M51 181.5H58" stroke="#c0c0c0"/>
<path d="M51 214.5H58" stroke="#c0c0c0"/>
<path d="M51 246.5H58" stroke="#c0c0c0"/>
<path d="M51 279.5H58" stroke="#c0c0c0"/>
<path d="M51 311.5H58" stroke="#c0c0c0"/>
<path d="M51 344.5H58" stroke="#c0c0c0"/>
<path d="M51 376.5H58" stroke="#c0c0c0"/>
<path d="M45 468.5H1079" stroke="#858585" stroke-dasharray="3 3"/>
<path d="M45 499.5H1079" stroke="#858585" stroke-dasharray="3 3"/>
<path d="M45 529.5H1079" stroke="#858585" stroke-dasharray="3 3"/>
<path d="M45 559.5H1079" stroke="#858585" stroke-dasharray="3 3"/>
<path d="M45 590.5H1079" stroke="#858585" stroke-dasharray="3 3"/>
<path d="M45 620.5H1079" stroke="#858585" stroke-dasharray="3 3"/>
<path d="M45 650.5H1079" stroke="#858585" stroke-dasharray="3 3"/>
<path d="M45 680.5H1079" stroke="#858585" stroke-dasharray="3 3"/>
<path d="M45 711.5H1079" stroke="#858585" stroke-dasharray="3 3"/>
<path d="M45.5 741V749" stroke="#c0c0c0"/>
<path d="M148.5 742V439" stroke="#858585" stroke-dasharray="3 3"/>
<path d="M148.5 741V749" stroke="#c0c0c0"/>
<path d="M252.5 742V439" stroke="#858585" stroke-dasharray="3 3"/>
<path d="M252.5 741V749" stroke="#c0c0c0"/>
<path d="M355.5 742V439" stroke="#858585" stroke-dasharray="3 3"/>
<path d="M355.5 741V749" stroke="#c0c0c0"/>
<path d="M459.5 742V439" stroke="#858585" stroke-dasharray="3 3"/>
<path d="M459.5 741V749" stroke="#c0c0c0"/>
<path d="M562.5 742V439" stroke="#858585" stroke-dasharray="3 3"/>
<path d="M562.5 741V749" stroke="#c0c0c0"/>
<path d="M665.5 742V439" stroke="#858585" stroke-dasharray="3 3"/>
<path d="M665.5 741V749" stroke="#c0c0c0"/>
<path d="M769.5 742V439" stroke="#858585" stroke-dasharray="3 3"/>
<path d="M769.5 741V749" stroke="#c0c0c0"/>
<path d="M872.5 742V439" stroke="#858585" stroke-dasharray="3 3"/>
<path d="M872.5 741V749" stroke="#c0c0c0"/>
<path d="M976.5 742V439" stroke="#858585" stroke-dasharray="3 3"/>
<path d="M976.5 741V749" stroke="#c0c0c0"/>
<path d="M1079.5 741V749" stroke="#c0c0c0"/>
<path d="M45.5 559.5 L45.5 549.5 L45.5 537.5 L46.5 526.5 L46.5 516.5 L46.5 507.5 L46.5 500.5 L47.5 494.5 L47.5 490.5 L47.5 488.5 L47.5 487.5 L47.5 489.5 L48.5 491.5 L48.5 496.5 L48.5 502.5 L48.5 510.5 L48.5 519.5 L49.5 529.5 L49.5 541.5 L49.5 553.5 L49.5 566.5 L50.5 579.5 L50.5 592.5 L50.5 606.5 L50.5 619.5 L50.5 631.5 L51.5 643.5 L51.5 654.5 L51.5 664.5 L51.5 673.5 L51.5 680.5 L52.5 686.5 L52.5 690.5 L52.5 692.5 L52.5 693.5 L53.5 692.5 L53.5 689.5 L53.5 684.5 L53.5 678.5 L53.5 670.5 L54.5 661.5 L54.5 651.5 L54.5 640.5 L54.5 627.5 L54.5 615.5 L55.5 601.5 L55.5 588.5 L55.5 575.5 L55.5 561.5 L56.5 549.5 L56.5 537.5 L56.5 526.5 L56.5 516.5 L56.5 507.5 L57.5 500.5 L57.5 494.5 L57.5 490.5 L57.5 488.5 L57.5 487.5 L58.5 489.5 L58.5 491.5 L58.5 496.5 L58.5 502.5 L59.5 510.5 L59.5 519.5 L59.5 529.5 L59.5 541.5 L59.5 553.5 L60.5 566.5 L60.5 579.5 L60.5 592.5 L60.5 606.5 L61.5 619.5 L61.5 631.5 L61.5 643.5 L61.5 654.5 L61.5 664.5 L62.5 673.5 L62.5 680.5 L62.5 686.5 L62.5 690.5 L62.5 692.5 L63.5 693.5 L63.5 692.5 L63.5 689.5 L63.5 684.5 L64.5 678.5 L64.5 670.5 L64.5 661.5 L64.5 651.5 L64.5 640.5 L65.5 627.5 L65.5 615.5 L65.5 601.5 L65.5 588.5 L65.5 575.5 L66.5 561.5 L66.5 549.5 L66.5 537.5 L66.5 526.5 L67.5 516.5 L67.5 507.5 L67.5 500.5 L67.5 494.5 L67.5 490.5 L68.5 488.5 L68.5 487.5 L68.5 489.5 L68.5 491.5 L68.5 496.5 L69.5 502.5 L69.5 510.5 L69.5 519.5 L69.5 529.5 L70.5 541.5 L70.5 553.5 L70.5 566.5 L70.5 579.5 L70.5 592.5 L71.5 606.5 L71.5 619.5 L71.5 631.5 L71.5 643.5 L71.5 654.5 L72.5 664.5 L72.5 673.5 L72.5 680.5 L72.5 686.5 L73.5 690.5 L73.5 692.5 L73.5 693.5 L73.5 692.5 L73.5 689.5 L74.5 684.5 L74.5 678.5 L74.5 670.5 L74.5 661.5 L75.5 651.5 L75.5 640.5 L75.5 627.5 L75.5 615.5 L75.5 601.5 L76.5 588.5 L76.5 575.5 L76.5 561.5 L76.5 549.5 L76.5 537.5 L77.5 526.5 L77.5 516.5 L77.5 507.5 L77.5 500.5 L78.5 494.5 L78.5 490.5 L78.5 488.5 L78.5 487.5 L78.5 489.5 L79.5 491.5 L79.5 496.5 L79.5 502.5 L79.5 510.5 L79.5 519.5 L80.5 529.5 L80.5 541.5 L80.5 553.5 L80.5 566.5 L81.5 579.5 L81.5 592.5 L81.5 606.5 L81.5 619.5 L81.5 631.5 L82.5 643.5 L82.5 654.5 L82.5 664.5 L82.5 673.5 L82.5 680.5 L83.5 686.5 L83.5 690.5 L83.5 692.5 L83.5 693.5 L84.5 692.5 L84.5 689.5 L84.5 684.5 L84.5 678.5 L84.5 670.5 L85.5 661.5 L85.5 651.5 L85.5 640.5 L85.5 627.5 L85.5 615.5 L86.5 601.5 L86.5 588.5 L86.5 575.5 L86.5 561.5 L87.5 549.5 L87.5 537.5 L87.5 526.5 L87.5 516.5 L87.5 507.5 L88.5 500.5 L88.5 494.5 L88.5 490.5 L88.5 488.5 L89.5 487.5 L89.5 489.5 L89.5 491.5 L89.5 496.5 L89.5 502.5 L90.5 510.5 L90.5 519.5 L90.5 529.5 L90.5 541.5 L90.5 553.5 L91.5 566.5 L91.5 579.5 L91.5 592.5 L91.5 606.5 L92.5 619.5 L92.5 631.5 L92.5 643.5 L92.5 654.5 L92.5 664.5 L93.5 673.5 L93.5 680.5 L93.5 686.5 L93.5 690.5 L93.5 692.5 L94.5 693.5 L94.5 692.5 L94.5 689.5 L94.5 684.5 L95.5 678.5 L95.5 670.5 L95.5 661.5 L95.5 651.5 L95.5 640.5 L96.5 627.5 L96.5 615.5 L96.5 601.5 L96.5 588.5 L96.5 575.5 L97.5 561.5 L97.5 549.5 L97.5 537.5 L97.5 526.5 L98.5 516.5 L98.5 507.5 L98.5 500.5 L98.5 494.5 L98.5 490.5 L99.5 488.5 L99.5 487.5 L99.5 489.5 L99.5 491.5 L100.5 496.5 L100.5 502.5 L100.5 510.5 L100.5 519.5 L100.5 529.5 L101.5 541.5 L101.5 553.5 L101.5 566.5 L101.5 579.5 L101.5 592.5 L102.5 606.5 L102.5 619.5 L102.5 631.5 L102.5 643.5 L103.5 654.5 L103.5 664.5 L103.5 673.5 L103.5 680.5 L103.5 686.5 L104.5 690.5 L104.5 692.5 L104.5 693.5 L104.5 692.5 L104.5 689.5 L105.5 684.5 L105.5 678.5 L105.5 670.5 L105.5 661.5 L106.5 651.5 L106.5 640.5 L106.5 627.5 L106.5 615.5 L106.5 601.5 L107.5 588.5 L107.5 575.5 L107.5 561.5 L107.5 549.5 L107.5 537.5 L108.5 526.5 L108.5 516.5 L108.5 507.5 L108.5 500.5 L109.5 494.5 L109.5 490.5 L109.5 488.5 L109.5 487.5 L109.5 489.5 L110.5 491.5 L110.5 496.5 L110.5 502.5 L110.5 510.5 L110.5 519.5 L111.5 529.5 L111.5 541.5 L111.5 553.5 L111.5 566.5 L112.5 579.5 L112.5 592.5 L112.5 606.5 L112.5 619.5 L112.5 631.5 L113.5 643.5 L113.5 654.5 L113.5 664.5 L113.5 673.5 L114.5 680.5 L114.5 686.5 L114.5 690.5 L114.5 692.5 L114.5 693.5 L115.5 692.5 L115.5 689.5 L115.5 684.5 L115.5 678.5 L115.5 670.5 L116.5 661.5 L116.5 651.5 L116.5 640.5 L116.5 627.5 L117.5 615.5 L117.5 601.5 L117.5 588.5 L117.5 575.5 L117.5 561.5 L118.5 549.5 L118.5 537.5 L118.5 526.5 L118.5 516.5 L118.5 507.5 L119.5 500.5 L119.5 494.5 L119.5 490.5 L119.5 488.5 L120.5 487.5 L120.5 489.5 L120.5 491.5 L120.5 496.5 L120.5 502.5 L121.5 510.5 L121.5 519.5 L121.5 529.5 L121.5 541.5 L121.5 553.5 L122.5 566.5 L122.5 579.5 L122.5 592.5 L122.5 606.5 L123.5 619.5 L123.5 631.5 L123.5 643.5 L123.5 654.5 L123.5 664.5 L124.5 673.5 L124.5 680.5 L124.5 686.5 L124.5 690.5 L124.5 692.5 L125.5 693.5 L125.5 692.5 L125.5 689.5 L125.5 684.5 L126.5 678.5 L126.5 670.5 L126.5 661.5 L126.5 651.5 L126.5 640.5 L127.5 627.5 L127.5 615.5 L127.5 601.5 L127.5 588.5 L128.5 575.5 L128.5 561.5 L128.5 549.5 L128.5 537.5 L128.5 526.5 L129.5 516.5 L129.5 507.5 L129.5 500.5 L129.5 494.5 L129.5 490.5 L130.5 488.5 L130.5 487.5 L130.5 489.5 L130.5 491.5 L131.5 496.5 L131.5 502.5 L131.5 510.5 L131.5 519.5 L131.5 529.5 L132.5 541.5 L132.5 553.5 L132.5 566.5 L132.5 579.5 L132.5 592.5 L133.5 606.5 L133.5 619.5 L133.5 631.5 L133.5 643.5 L134.5 654.5 L134.5 664.5 L134.5 673.5 L134.5 680.5 L134.5 686.5 L135.5 690.5 L135.5 692.5 L135.5 693.5 L135.5 692.5 L135.5 689.5 L136.5 684.5 L136.5 678.5 L136.5 670.5 L136.5 661.5 L137.5 651.5 L137.5 640.5 L137.5 627.5 L137.5 615.5 L137.5 601.5 L138.5 588.5 L138.5 575.5 L138.5 561.5 L138.5 549.5 L138.5 537.5 L139.5 526.5 L139.5 516.5 L139.5 507.5 L139.5 500.5 L140.5 494.5 L140.5 490.5 L140.5 488.5 L140.5 487.5 L140.5 489.5 L141.5 491.5 L141.5 496.5 L141.5 502.5 L141.5 510.5 L142.5 519.5 L142.5 529.5 L142.5 541.5 L142.5 553.5 L142.5 566.5 L143.5 579.5 L143.5 592.5 L143.5 606.5 L143.5 619.5 L143.5 631.5 L144.5 643.5 L144.5 654.5 L144.5 664.5 L144.5 673.5 L145.5 680.5 L145.5 686.5 L145.5 690.5 L145.5 692.5 L145.5 693.5 L146.5 692.5 L146.5 689.5 L146.5 684.5 L146.5 678.5 L146.5 670.5 L147.5 661.5 L147.5 651.5 L147.5 640.5 L147.5 627.5 L148.5 615.5 L148.5 601.5 L148.5 588.5 L148.5 575.5 L148.5 561.5 L149.5 549.5 L149.5 537.5 L149.5 526.5 L149.5 516.5 L149.5 507.5 L150.5 500.5 L150.5 494.5 L150.5 490.5 L150.5 488.5 L151.5 487.5 L151.5 489.5 L151.5 491.5 L151.5 496.5 L151.5 502.5 L152.5 510.5 L152.5 519.5 L152.5 529.5 L152.5 541.5 L152.5 553.5 L153.5 566.5 L153.5 579.5 L153.5 592.5 L153.5 606.5 L154.5 619.5 L154.5 631.5 L154.5 643.5 L154.5 654.5 L154.5 664.5 L155.5 673.5 L155.5 680.5 L155.5 686.5 L155.5 690.5 L156.5 692.5 L156.5 693.5 L156.5 692.5 L156.5 689.5 L156.5 684.5 L157.5 678.5 L157.5 670.5 L157.5 661.5 L157.5 651.5 L157.5 640.5 L158.5 627.5 L158.5 615.5 L158.5 601.5 L158.5 588.5 L159.5 575.5 L159.5 561.5 L159.5 549.5 L159.5 537.5 L159.5 526.5 L160.5 516.5 L160.5 507.5 L160.5 500.5 L160.5 494.5 L160.5 490.5 L161.5 488.5 L161.5 487.5 L161.5 489.5 L161.5 491.5 L162.5 496.5 L162.5 502.5 L162.5 510.5 L162.5 519.5 L162.5 529.5 L163.5 541.5 L163.5 553.5 L163.5 566.5 L163.5 579.5 L163.5 592.5 L164.5 606.5 L164.5 619.5 L164.5 631.5 L164.5 643.5 L165.5 654.5 L165.5 664.5 L165.5 673.5 L165.5 680.5 L165.5 686.5 L166.5 690.5 L166.5 692.5 L166.5 693.5 L166.5 692.5 L166.5 689.5 L167.5 684.5 L167.5 678.5 L167.5 670.5 L167.5 661.5 L168.5 651.5 L168.5 640.5 L168.5 627.5 L168.5 615.5 L168.5 601.5 L169.5 588.5 L169.5 575.5 L169.5 561.5 L169.5 549.5 L170.5 537.5 L170.5 526.5 L170.5 516.5 L170.5 507.5 L170.5 500.5 L171.5 494.5 L171.5 490.5 L171.5 488.5 L171.5 487.5 L171.5 489.5 L172.5 491.5 L172.5 496.5 L172.5 502.5 L172.5 510.5 L173.5 519.5 L173.5 529.5 L173.5 541.5 L173.5 553.5 L173.5 566.5 L174.5 579.5 L174.5 592.5 L174.5 606.5 L174.5 619.5 L174.5 631.5 L175.5 643.5 L175.5 654.5 L175.5 664.5 L175.5 673.5 L176.5 680.5 L176.5 686.5 L176.5 690.5 L176.5 692.5 L176.5 693.5 L177.5 692.5 L177.5 689.5 L177.5 684.5 L177.5 678.5 L177.5 670.5 L178.5 661.5 L178.5 651.5 L178.5 640.5 L178.5 627.5 L179.5 615.5 L179.5 601.5 L179.5 588.5 L179.5 575.5 L179.5 561.5 L180.5 549.5 L180.5 537.5 L180.5 526.5 L180.5 516.5 L180.5 507.5 L181.5 500.5 L181.5 494.5 L181.5 490.5 L181.5 488.5 L182.5 487.5 L182.5 489.5 L182.5 491.5 L182.5 496.5 L182.5 502.5 L183.5 510.5 L183.5 519.5 L183.5 529.5 L183.5 541.5 L184.5 553.5 L184.5 566.5 L184.5 579.5 L184.5 592.5 L184.5 606.5 L185.5 619.5 L185.5 631.5 L185.5 643.5 L185.5 654.5 L185.5 664.5 L186.5 673.5 L186.5 680.5 L186.5 686.5 L186.5 690.5 L187.5 692.5 L187.5 693.5 L187.5 692.5 L187.5 689.5 L187.5 684.5 L188.5 678.5 L188.5 670.5 L188.5 661.5 L188.5 651.5 L188.5 640.5 L189.5 627.5 L189.5 615.5 L189.5 601.5 L189.5 588.5 L190.5 575.5 L190.5 561.5 L190.5 549.5 L190.5 537.5 L190.5 526.5 L191.5 516.5 L191.5 507.5 L191.5 500.5 L191.5 494.5 L191.5 490.5 L192.5 488.5 L192.5 487.5 L192.5 489.5 L192.5 491.5 L193.5 496.5 L193.5 502.5 L193.5 510.5 L193.5 519.5 L193.5 529.5 L194.5 541.5 L194.5 553.5 L194.5 566.5 L194.5 579.5 L194.5 592.5 L195.5 606.5 L195.5 619.5 L195.5 631.5 L195.5 643.5 L196.5 654.5 L196.5 664.5 L196.5 673.5 L196.5 680.5 L196.5 686.5 L197.5 690.5 L197.5 692.5 L197.5 693.5 L197.5 692.5 L198.5 689.5 L198.5 684.5 L198.5 678.5 L198.5 670.5 L198.5 661.5 L199.5 651.5 L199.5 640.5 L199.5 627.5 L199.5 615.5 L199.5 601.5 L200.5 588.5 L200.5 575.5 L200.5 561.5 L200.5 549.5 L201.5 537.5 L201.5 526.5 L201.5 516.5 L201.5 507.5 L201.5 500.5 L202.5 494.5 L202.5 490.5 L202.5 488.5 L202.5 487.5 L202.5 489.5 L203.5 491.5 L203.5 496.5 L203.5 502.5 L203.5 510.5 L204.5 519.5 L204.5 529.5 L204.5 541.5 L204.5 553.5 L204.5 566.5 L205.5 579.5 L205.5 592.5 L205.5 606.5 L205.5 619.5 L205.5 631.5 L206.5 643.5 L206.5 654.5 L206.5 664.5 L206.5 673.5 L207.5 680.5 L207.5 686.5 L207.5 690.5 L207.5 692.5 L207.5 693.5 L208.5 692.5 L208.5 689.5 L208.5 684.5 L208.5 678.5 L209.5 670.5 L209.5 661.5 L209.5 651.5 L209.5 640.5 L209.5 627.5 L210.5 615.5 L210.5 601.5 L210.5 588.5 L210.5 575.5 L210.5 561.5 L211.5 549.5 L211.5 537.5 L211.5 526.5 L211.5 516.5 L212.5 507.5 L212.5 500.5 L212.5 494.5 L212.5 490.5 L212.5 488.5 L213.5 487.5 L213.5 489.5 L213.5 491.5 L213.5 496.5 L213.5 502.5 L214.5 510.5 L214.5 519.5 L214.5 529.5 L214.5 541.5 L215.5 553.5 L215.5 566.5 L215.5 579.5 L215.5 592.5 L215.5 606.5 L216.5 619.5 L216.5 631.5 L216.5 643.5 L216.5 654.5 L216.5 664.5 L217.5 673.5 L217.5 680.5 L217.5 686.5 L217.5 690.5 L218.5 692.5 L218.5 693.5 L218.5 692.5 L218.5 689.5 L218.5 684.5 L219.5 678.5 L219.5 670.5 L219.5 661.5 L219.5 651.5 L219.5 640.5 L220.5 627.5 L220.5 615.5 L220.5 601.5 L220.5 588.5 L221.5 575.5 L221.5 561.5 L221.5 549.5 L221.5 537.5 L221.5 526.5 L222.5 516.5 L222.5 507.5 L222.5 500.5 L222.5 494.5 L223.5 490.5 L223.5 488.5 L223.5 487.5 L223.5 489.5 L223.5 491.5 L224.5 496.5 L224.5 502.5 L224.5 510.5 L224.5 519.5 L224.5 529.5 L225.5 541.5 L225.5 553.5 L225.5 566.5 L225.5 579.5 L226.5 592.5 L226.5 606.5 L226.5 619.5 L226.5 631.5 L226.5 643.5 L227.5 654.5 L227.5 664.5 L227.5 673.5 L227.5 680.5 L227.5 686.5 L228.5 690.5 L228.5 692.5 L228.5 693.5 L228.5 692.5 L229.5 689.5 L229.5 684.5 L229.5 678.5 L229.5 670.5 L229.5 661.5 L230.5 651.5 L230.5 640.5 L230.5 627.5 L230.5 615.5 L230.5 601.5 L231.5 588.5 L231.5 575.5 L231.5 561.5 L231.5 549.5 L232.5 537.5 L232.5 526.5 L232.5 516.5 L232.5 507.5 L232.5 500.5 L233.5 494.5 L233.5 490.5 L233.5 488.5 L233.5 487.5 L233.5 489.5 L234.5 491.5 L234.5 496.5 L234.5 502.5 L234.5 510.5 L235.5 519.5 L235.5 529.5 L235.5 541.5 L235.5 553.5 L235.5 566.5 L236.5 579.5 L236.5 592.5 L236.5 606.5 L236.5 619.5 L237.5 631.5 L237.5 643.5 L237.5 654.5 L237.5 664.5 L237.5 673.5 L238.5 680.5 L238.5 686.5 L238.5 690.5 L238.5 692.5 L238.5 693.5 L239.5 692.5 L239.5 689.5 L239.5 684.5 L239.5 678.5 L240.5 670.5 L240.5 661.5 L240.5 651.5 L240.5 640.5 L240.5 627.5 L241.5 615.5 L241.5 601.5 L241.5 588.5 L241.5 575.5 L241.5 561.5 L242.5 549.5 L242.5 537.5 L242.5 526.5 L242.5 516.5 L243.5 507.5 L243.5 500.5 L243.5 494.5 L243.5 490.5 L243.5 488.5 L244.5 487.5 L244.5 489.5 L244.5 491.5 L244.5 496.5 L244.5 502.5 L245.5 510.5 L245.5 519.5 L245.5 529.5 L245.5 541.5 L246.5 553.5 L246.5 566.5 L246.5 579.5 L246.5 592.5 L246.5 606.5 L247.5 619.5 L247.5 631.5 L247.5 643.5 L247.5 654.5 L247.5 664.5 L248.5 673.5 L248.5 680.5 L248.5 686.5 L248.5 690.5 L249.5 692.5 L249.5 693.5 L249.5 692.5 L249.5 689.5 L249.5 684.5 L250.5 678.5 L250.5 670.5 L250.5 661.5 L250.5 651.5 L251.5 640.5 L251.5 627.5 L251.5 615.5 L251.5 601.5 L251.5 588.5 L252.5 575.5 L252.5 561.5 L252.5 549.5 L252.5 537.5 L252.5 526.5 L253.5 516.5 L253.5 507.5 L253.5 500.5 L253.5 494.5 L254.5 490.5 L254.5 488.5 L254.5 487.5 L254.5 489.5 L254.5 491.5 L255.5 496.5 L255.5 502.5 L255.5 510.5 L255.5 519.5 L255.5 529.5 L256.5 541.5 L256.5 553.5 L256.5 566.5 L256.5 579.5 L257.5 592.5 L257.5 606.5 L257.5 619.5 L257.5 631.5 L257.5 643.5 L258.5 654.5 L258.5 664.5 L258.5 673.5 L258.5 680.5 L258.5 686.5 L259.5 690.5 L259.5 692.5 L259.5 693.5 L259.5 692.5 L260.5 689.5 L260.5 684.5 L260.5 678.5 L260.5 670.5 L260.5 661.5 L261.5 651.5 L261.5 640.5 L261.5 627.5 L261.5 615.5 L261.5 601.5 L262.5 588.5 L262.5 575.5 L262.5 561.5 L262.5 549.5 L263.5 537.5 L263.5 526.5 L263.5 516.5 L263.5 507.5 L263.5 500.5 L264.5 494.5 L264.5 490.5 L264.5 488.5 L264.5 487.5 L265.5 489.5 L265.5 491.5 L265.5 496.5 L265.5 502.5 L265.5 510.5 L266.5 519.5 L266.5 529.5 L266.5 541.5 L266.5 553.5 L266.5 566.5 L267.5 579.5 L267.5 592.5 L267.5 606.5 L267.5 619.5 L268.5 631.5 L268.5 643.5 L268.5 654.5 L268.5 664.5 L268.5 673.5 L269.5 680.5 L269.5 686.5 L269.5 690.5 L269.5 692.5 L269.5 693.5 L270.5 692.5 L270.5 689.5 L270.5 684.5 L270.5 678.5 L271.5 670.5 L271.5 661.5 L271.5 651.5 L271.5 640.5 L271.5 627.5 L272.5 615.5 L272.5 601.5 L272.5 588.5 L272.5 575.5 L272.5 561.5 L273.5 549.5 L273.5 537.5 L273.5 526.5 L273.5 516.5 L274.5 507.5 L274.5 500.5 L274.5 494.5 L274.5 490.5 L274.5 488.5 L275.5 487.5 L275.5 489.5 L275.5 491.5 L275.5 496.5 L275.5 502.5 L276.5 510.5 L276.5 519.5 L276.5 529.5 L276.5 541.5 L277.5 553.5 L277.5 566.5 L277.5 579.5 L277.5 592.5 L277.5 606.5 L278.5 619.5 L278.5 631.5 L278.5 643.5 L278.5 654.5 L279.5 664.5 L279.5 673.5 L279.5 680.5 L279.5 686.5 L279.5 690.5 L280.5 692.5 L280.5 693.5 L280.5 692.5 L280.5 689.5 L280.5 684.5 L281.5 678.5 L281.5 670.5 L281.5 661.5 L281.5 651.5 L282.5 640.5 L282.5 627.5 L282.5 615.5 L282.5 601.5 L282.5 588.5 L283.5 575.5 L283.5 561.5 L283.5 549.5 L283.5 537.5 L283.5 526.5 L284.5 516.5 L284.5 507.5 L284.5 500.5 L284.5 494.5 L285.5 490.5 L285.5 488.5 L285.5 487.5 L285.5 489.5 L285.5 491.5 L286.5 496.5 L286.5 502.5 L286.5 510.5 L286.5 519.5 L286.5 529.5 L287.5 541.5 L287.5 553.5 L287.5 566.5 L287.5 579.5 L288.5 592.5 L288.5 606.5 L288.5 619.5 L288.5 631.5 L288.5 643.5 L289.5 654.5 L289.5 664.5 L289.5 673.5 L289.5 680.5 L289.5 686.5 L290.5 690.5 L290.5 692.5 L290.5 693.5 L290.5 692.5 L291.5 689.5 L291.5 684.5 L291.5 678.5 L291.5 670.5 L291.5 661.5 L292.5 651.5 L292.5 640.5 L292.5 627.5 L292.5 615.5 L293.5 601.5 L293.5 588.5 L293.5 575.5 L293.5 561.5 L293.5 549.5 L294.5 537.5 L294.5 526.5 L294.5 516.5 L294.5 507.5 L294.5 500.5 L295.5 494.5 L295.5 490.5 L295.5 488.5 L295.5 487.5 L296.5 489.5 L296.5 491.5 L296.5 496.5 L296.5 502.5 L296.5 510.5 L297.5 519.5 L297.5 529.5 L297.5 541.5 L297.5 553.5 L297.5 566.5 L298.5 579.5 L298.5 592.5 L298.5 606.5 L298.5 619.5 L299.5 631.5 L299.5 643.5 L299.5 654.5 L299.5 664.5 L299.5 673.5 L300.5 680.5 L300.5 686.5 L300.5 690.5 L300.5 692.5 L300.5 693.5 L301.5 692.5 L301.5 689.5 L301.5 684.5 L301.5 678.5 L302.5 670.5 L302.5 661.5 L302.5 651.5 L302.5 640.5 L302.5 627.5 L303.5 615.5 L303.5 601.5 L303.5 588.5 L303.5 575.5 L304.5 561.5 L304.5 549.5 L304.5 537.5 L304.5 526.5 L304.5 516.5 L305.5 507.5 L305.5 500.5 L305.5 494.5 L305.5 490.5 L305.5 488.5 L306.5 487.5 L306.5 489.5 L306.5 491.5 L306.5 496.5 L307.5 502.5 L307.5 510.5 L307.5 519.5 L307.5 529.5 L307.5 541.5 L308.5 553.5 L308.5 566.5 L308.5 579.5 L308.5 592.5 L308.5 606.5 L309.5 619.5 L309.5 631.5 L309.5 643.5 L309.5 654.5 L310.5 664.5 L310.5 673.5 L310.5 680.5 L310.5 686.5 L310.5 690.5 L311.5 692.5 L311.5 693.5 L311.5 692.5 L311.5 689.5 L311.5 684.5 L312.5 678.5 L312.5 670.5 L312.5 661.5 L312.5 651.5 L313.5 640.5 L313.5 627.5 L313.5 615.5 L313.5 601.5 L313.5 588.5 L314.5 575.5 L314.5 561.5 L314.5 549.5 L314.5 537.5 L314.5 526.5 L315.5 516.5 L315.5 507.5 L315.5 500.5 L315.5 494.5 L316.5 490.5 L316.5 488.5 L316.5 487.5 L316.5 489.5 L316.5 491.5 L317.5 496.5 L317.5 502.5 L317.5 510.5 L317.5 519.5 L318.5 529.5 L318.5 541.5 L318.5 553.5 L318.5 566.5 L318.5 579.5 L319.5 592.5 L319.5 606.5 L319.5 619.5 L319.5 631.5 L319.5 643.5 L320.5 654.5 L320.5 664.5 L320.5 673.5 L320.5 680.5 L321.5 686.5 L321.5 690.5 L321.5 692.5 L321.5 693.5 L321.5 692.5 L322.5 689.5 L322.5 684.5 L322.5 678.5 L322.5 670.5 L322.5 661.5 L323.5 651.5 L323.5 640.5 L323.5 627.5 L323.5 615.5 L324.5 601.5 L324.5 588.5 L324.5 575.5 L324.5 561.5 L324.5 549.5 L325.5 537.5 L325.5 526.5 L325.5 516.5 L325.5 507.5 L325.5 500.5 L326.5 494.5 L326.5 490.5 L326.5 488.5 L326.5 487.5 L327.5 489.5 L327.5 491.5 L327.5 496.5 L327.5 502.5 L327.5 510.5 L328.5 519.5 L328.5 529.5 L328.5 541.5 L328.5 553.5 L328.5 566.5 L329.5 579.5 L329.5 592.5 L329.5 606.5 L329.5 619.5 L330.5 631.5 L330.5 643.5 L330.5 654.5 L330.5 664.5 L330.5 673.5 L331.5 680.5 L331.5 686.5 L331.5 690.5 L331.5 692.5 L332.5 693.5 L332.5 692.5 L332.5 689.5 L332.5 684.5 L332.5 678.5 L333.5 670.5 L333.5 661.5 L333.5 651.5 L333.5 640.5 L333.5 627.5 L334.5 615.5 L334.5 601.5 L334.5 588.5 L334.5 575.5 L335.5 561.5 L335.5 549.5 L335.5 537.5 L335.5 526.5 L335.5 516.5 L336.5 507.5 L336.5 500.5 L336.5 494.5 L336.5 490.5 L336.5 488.5 L337.5 487.5 L337.5 489.5 L337.5 491.5 L337.5 496.5 L338.5 502.5 L338.5 510.5 L338.5 519.5 L338.5 529.5 L338.5 541.5 L339.5 553.5 L339.5 566.5 L339.5 579.5 L339.5 592.5 L339.5 606.5 L340.5 619.5 L340.5 631.5 L340.5 643.5 L340.5 654.5 L341.5 664.5 L341.5 673.5 L341.5 680.5 L341.5 686.5 L341.5 690.5 L342.5 692.5 L342.5 693.5 L342.5 692.5 L342.5 689.5 L342.5 684.5 L343.5 678.5 L343.5 670.5 L343.5 661.5 L343.5 651.5 L344.5 640.5 L344.5 627.5 L344.5 615.5 L344.5 601.5 L344.5 588.5 L345.5 575.5 L345.5 561.5 L345.5 549.5 L345.5 537.5 L346.5 526.5 L346.5 516.5 L346.5 507.5 L346.5 500.5 L346.5 494.5 L347.5 490.5 L347.5 488.5 L347.5 487.5 L347.5 489.5 L347.5 491.5 L348.5 496.5 L348.5 502.5 L348.5 510.5 L348.5 519.5 L349.5 529.5 L349.5 541.5 L349.5 553.5 L349.5 566.5 L349.5 579.5 L350.5 592.5 L350.5 606.5 L350.5 619.5 L350.5 631.5 L350.5 643.5 L351.5 654.5 L351.5 664.5 L351.5 673.5 L351.5 680.5 L352.5 686.5 L352.5 690.5 L352.5 692.5 L352.5 693.5 L352.5 692.5 L353.5 689.5 L353.5 684.5 L353.5 678.5 L353.5 670.5 L353.5 661.5 L354.5 651.5 L354.5 640.5 L354.5 627.5 L354.5 615.5 L355.5 601.5 L355.5 588.5 L355.5 575.5 L355.5 561.5 L355.5 549.5 L356.5 537.5 L356.5 526.5 L356.5 516.5 L356.5 507.5 L356.5 500.5 L357.5 494.5 L357.5 490.5 L357.5 488.5 L357.5 487.5 L358.5 489.5 L358.5 491.5 L358.5 496.5 L358.5 502.5 L358.5 510.5 L359.5 519.5 L359.5 529.5 L359.5 541.5 L359.5 553.5 L360.5 566.5 L360.5 579.5 L360.5 592.5 L360.5 606.5 L360.5 619.5 L361.5 631.5 L361.5 643.5 L361.5 654.5 L361.5 664.5 L361.5 673.5 L362.5 680.5 L362.5 686.5 L362.5 690.5 L362.5 692.5 L363.5 693.5 L363.5 692.5 L363.5 689.5 L363.5 684.5 L363.5 678.5 L364.5 670.5 L364.5 661.5 L364.5 651.5 L364.5 640.5 L364.5 627.5 L365.5 615.5 L365.5 601.5 L365.5 588.5 L365.5 575.5 L366.5 561.5 L366.5 549.5 L366.5 537.5 L366.5 526.5 L366.5 516.5 L367.5 507.5 L367.5 500.5 L367.5 494.5 L367.5 490.5 L367.5 488.5 L368.5 487.5 L368.5 489.5 L368.5 491.5 L368.5 496.5 L369.5 502.5 L369.5 510.5 L369.5 519.5 L369.5 529.5 L369.5 541.5 L370.5 553.5 L370.5 566.5 L370.5 579.5 L370.5 592.5 L370.5 606.5 L371.5 619.5 L371.5 631.5 L371.5 643.5 L371.5 654.5 L372.5 664.5 L372.5 673.5 L372.5 680.5 L372.5 686.5 L372.5 690.5 L373.5 692.5 L373.5 693.5 L373.5 692.5 L373.5 689.5 L374.5 684.5 L374.5 678.5 L374.5 670.5 L374.5 661.5 L374.5 651.5 L375.5 640.5 L375.5 627.5 L375.5 615.5 L375.5 601.5 L375.5 588.5 L376.5 575.5 L376.5 561.5 L376.5 549.5 L376.5 537.5 L377.5 526.5 L377.5 516.5 L377.5 507.5 L377.5 500.5 L377.5 494.5 L378.5 490.5 L378.5 488.5 L378.5 487.5 L378.5 489.5 L378.5 491.5 L379.5 496.5 L379.5 502.5 L379.5 510.5 L379.5 519.5 L380.5 529.5 L380.5 541.5 L380.5 553.5 L380.5 566.5 L380.5 579.5 L381.5 592.5 L381.5 606.5 L381.5 619.5 L381.5 631.5 L381.5 643.5 L382.5 654.5 L382.5 664.5 L382.5 673.5 L382.5 680.5 L383.5 686.5 L383.5 690.5 L383.5 692.5 L383.5 693.5 L383.5 692.5 L384.5 689.5 L384.5 684.5 L384.5 678.5 L384.5 670.5 L384.5 661.5 L385.5 651.5 L385.5 640.5 L385.5 627.5 L385.5 615.5 L386.5 601.5 L386.5 588.5 L386.5 575.5 L386.5 561.5 L386.5 549.5 L387.5 537.5 L387.5 526.5 L387.5 516.5 L387.5 507.5 L388.5 500.5 L388.5 494.5 L388.5 490.5 L388.5 488.5 L388.5 487.5 L389.5 489.5 L389.5 491.5 L389.5 496.5 L389.5 502.5 L389.5 510.5 L390.5 519.5 L390.5 529.5 L390.5 541.5 L390.5 553.5 L391.5 566.5 L391.5 579.5 L391.5 592.5 L391.5 606.5 L391.5 619.5 L392.5 631.5 L392.5 643.5 L392.5 654.5 L392.5 664.5 L392.5 673.5 L393.5 680.5 L393.5 686.5 L393.5 690.5 L393.5 692.5 L394.5 693.5 L394.5 692.5 L394.5 689.5 L394.5 684.5 L394.5 678.5 L395.5 670.5 L395.5 661.5 L395.5 651.5 L395.5 640.5 L395.5 627.5 L396.5 615.5 L396.5 601.5 L396.5 588.5 L396.5 575.5 L397.5 561.5 L397.5 549.5 L397.5 537.5 L397.5 526.5 L397.5 516.5 L398.5 507.5 L398.5 500.5 L398.5 494.5 L398.5 490.5 L398.5 488.5 L399.5 487.5 L399.5 489.5 L399.5 491.5 L399.5 496.5 L400.5 502.5 L400.5 510.5 L400.5 519.5 L400.5 529.5 L400.5 541.5 L401.5 553.5 L401.5 566.5 L401.5 579.5 L401.5 592.5 L402.5 606.5 L402.5 619.5 L402.5 631.5 L402.5 643.5 L402.5 654.5 L403.5 664.5 L403.5 673.5 L403.5 680.5 L403.5 686.5 L403.5 690.5 L404.5 692.5 L404.5 693.5 L404.5 692.5 L404.5 689.5 L405.5 684.5 L405.5 678.5 L405.5 670.5 L405.5 661.5 L405.5 651.5 L406.5 640.5 L406.5 627.5 L406.5 615.5 L406.5 601.5 L406.5 588.5 L407.5 575.5 L407.5 561.5 L407.5 549.5 L407.5 537.5 L408.5 526.5 L408.5 516.5 L408.5 507.5 L408.5 500.5 L408.5 494.5 L409.5 490.5 L409.5 488.5 L409.5 487.5 L409.5 489.5 L409.5 491.5 L410.5 496.5 L410.5 502.5 L410.5 510.5 L410.5 519.5 L411.5 529.5 L411.5 541.5 L411.5 553.5 L411.5 566.5 L411.5 579.5 L412.5 592.5 L412.5 606.5 L412.5 619.5 L412.5 631.5 L413.5 643.5 L413.5 654.5 L413.5 664.5 L413.5 673.5 L413.5 680.5 L414.5 686.5 L414.5 690.5 L414.5 692.5 L414.5 693.5 L414.5 692.5 L415.5 689.5 L415.5 684.5 L415.5 678.5 L415.5 670.5 L416.5 661.5 L416.5 651.5 L416.5 640.5 L416.5 627.5 L416.5 615.5 L417.5 601.5 L417.5 588.5 L417.5 575.5 L417.5 561.5 L417.5 549.5 L418.5 537.5 L418.5 526.5 L418.5 516.5 L418.5 507.5 L419.5 500.5 L419.5 494.5 L419.5 490.5 L419.5 488.5 L419.5 487.5 L420.5 489.5 L420.5 491.5 L420.5 496.5 L420.5 502.5 L420.5 510.5 L421.5 519.5 L421.5 529.5 L421.5 541.5 L421.5 553.5 L422.5 566.5 L422.5 579.5 L422.5 592.5 L422.5 606.5 L422.5 619.5 L423.5 631.5 L423.5 643.5 L423.5 654.5 L423.5 664.5 L423.5 673.5 L424.5 680.5 L424.5 686.5 L424.5 690.5 L424.5 692.5 L425.5 693.5 L425.5 692.5 L425.5 689.5 L425.5 684.5 L425.5 678.5 L426.5 670.5 L426.5 661.5 L426.5 651.5 L426.5 640.5 L427.5 627.5 L427.5 615.5 L427.5 601.5 L427.5 588.5 L427.5 575.5 L428.5 561.5 L428.5 549.5 L428.5 537.5 L428.5 526.5 L428.5 516.5 L429.5 507.5 L429.5 500.5 L429.5 494.5 L429.5 490.5 L430.5 488.5 L430.5 487.5 L430.5 489.5 L430.5 491.5 L430.5 496.5 L431.5 502.5 L431.5 510.5 L431.5 519.5 L431.5 529.5 L431.5 541.5 L432.5 553.5 L432.5 566.5 L432.5 579.5 L432.5 592.5 L433.5 606.5 L433.5 619.5 L433.5 631.5 L433.5 643.5 L433.5 654.5 L434.5 664.5 L434.5 673.5 L434.5 680.5 L434.5 686.5 L434.5 690.5 L435.5 692.5 L435.5 693.5 L435.5 692.5 L435.5 689.5 L436.5 684.5 L436.5 678.5 L436.5 670.5 L436.5 661.5 L436.5 651.5 L437.5 640.5 L437.5 627.5 L437.5 615.5 L437.5 601.5 L437.5 588.5 L438.5 575.5 L438.5 561.5 L438.5 549.5 L438.5 537.5 L439.5 526.5 L439.5 516.5 L439.5 507.5 L439.5 500.5 L439.5 494.5 L440.5 490.5 L440.5 488.5 L440.5 487.5 L440.5 489.5 L441.5 491.5 L441.5 496.5 L441.5 502.5 L441.5 510.5 L441.5 519.5 L442.5 529.5 L442.5 541.5 L442.5 553.5 L442.5 566.5 L442.5 579.5 L443.5 592.5 L443.5 606.5 L443.5 619.5 L443.5 631.5 L444.5 643.5 L444.5 654.5 L444.5 664.5 L444.5 673.5 L444.5 680.5 L445.5 686.5 L445.5 690.5 L445.5 692.5 L445.5 693.5 L445.5 692.5 L446.5 689.5 L446.5 684.5 L446.5 678.5 L446.5 670.5 L447.5 661.5 L447.5 651.5 L447.5 640.5 L447.5 627.5 L447.5 615.5 L448.5 601.5 L448.5 588.5 L448.5 575.5 L448.5 561.5 L448.5 549.5 L449.5 537.5 L449.5 526.5 L449.5 516.5 L449.5 507.5 L450.5 500.5 L450.5 494.5 L450.5 490.5 L450.5 488.5 L450.5 487.5 L451.5 489.5 L451.5 491.5 L451.5 496.5 L451.5 502.5 L451.5 510.5 L452.5 519.5 L452.5 529.5 L452.5 541.5 L452.5 553.5 L453.5 566.5 L453.5 579.5 L453.5 592.5 L453.5 606.5 L453.5 619.5 L454.5 631.5 L454.5 643.5 L454.5 654.5 L454.5 664.5 L455.5 673.5 L455.5 680.5 L455.5 686.5 L455.5 690.5 L455.5 692.5 L456.5 693.5 L456.5 692.5 L456.5 689.5 L456.5 684.5 L456.5 678.5 L457.5 670.5 L457.5 661.5 L457.5 651.5 L457.5 640.5 L458.5 627.5 L458.5 615.5 L458.5 601.5 L458.5 588.5 L458.5 575.5 L459.5 561.5 L459.5 549.5 L459.5 537.5 L459.5 526.5 L459.5 516.5 L460.5 507.5 L460.5 500.5 L460.5 494.5 L460.5 490.5 L461.5 488.5 L461.5 487.5 L461.5 489.5 L461.5 491.5 L461.5 496.5 L462.5 502.5 L462.5 510.5 L462.5 519.5 L462.5 529.5 L462.5 541.5 L463.5 553.5 L463.5 566.5 L463.5 579.5 L463.5 592.5 L464.5 606.5 L464.5 619.5 L464.5 631.5 L464.5 643.5 L464.5 654.5 L465.5 664.5 L465.5 673.5 L465.5 680.5 L465.5 686.5 L465.5 690.5 L466.5 692.5 L466.5 693.5 L466.5 692.5 L466.5 689.5 L467.5 684.5 L467.5 678.5 L467.5 670.5 L467.5 661.5 L467.5 651.5 L468.5 640.5 L468.5 627.5 L468.5 615.5 L468.5 601.5 L469.5 588.5 L469.5 575.5 L469.5 561.5 L469.5 549.5 L469.5 537.5 L470.5 526.5 L470.5 516.5 L470.5 507.5 L470.5 500.5 L470.5 494.5 L471.5 490.5 L471.5 488.5 L471.5 487.5 L471.5 489.5 L472.5 491.5 L472.5 496.5 L472.5 502.5 L472.5 510.5 L472.5 519.5 L473.5 529.5 L473.5 541.5 L473.5 553.5 L473.5 566.5 L473.5 579.5 L474.5 592.5 L474.5 606.5 L474.5 619.5 L474.5 631.5 L475.5 643.5 L475.5 654.5 L475.5 664.5 L475.5 673.5 L475.5 680.5 L476.5 686.5 L476.5 690.5 L476.5 692.5 L476.5 693.5 L476.5 692.5 L477.5 689.5 L477.5 684.5 L477.5 678.5 L477.5 670.5 L478.5 661.5 L478.5 651.5 L478.5 640.5 L478.5 627.5 L478.5 615.5 L479.5 601.5 L479.5 588.5 L479.5 575.5 L479.5 561.5 L479.5 549.5 L480.5 537.5 L480.5 526.5 L480.5 516.5 L480.5 507.5 L481.5 500.5 L481.5 494.5 L481.5 490.5 L481.5 488.5 L481.5 487.5 L482.5 489.5 L482.5 491.5 L482.5 496.5 L482.5 502.5 L483.5 510.5 L483.5 519.5 L483.5 529.5 L483.5 541.5 L483.5 553.5 L484.5 566.5 L484.5 579.5 L484.5 592.5 L484.5 606.5 L484.5 619.5 L485.5 631.5 L485.5 643.5 L485.5 654.5 L485.5 664.5 L486.5 673.5 L486.5 680.5 L486.5 686.5 L486.5 690.5 L486.5 692.5 L487.5 693.5 L487.5 692.5 L487.5 689.5 L487.5 684.5 L487.5 678.5 L488.5 670.5 L488.5 661.5 L488.5 651.5 L488.5 640.5 L489.5 627.5 L489.5 615.5 L489.5 601.5 L489.5 588.5 L489.5 575.5 L490.5 561.5 L490.5 549.5 L490.5 537.5 L490.5 526.5 L490.5 516.5 L491.5 507.5 L491.5 500.5 L491.5 494.5 L491.5 490.5 L492.5 488.5 L492.5 487.5 L492.5 489.5 L492.5 491.5 L492.5 496.5 L493.5 502.5 L493.5 510.5 L493.5 519.5 L493.5 529.5 L493.5 541.5 L494.5 553.5 L494.5 566.5 L494.5 579.5 L494.5 592.5 L495.5 606.5 L495.5 619.5 L495.5 631.5 L495.5 643.5 L495.5 654.5 L496.5 664.5 L496.5 673.5 L496.5 680.5 L496.5 686.5 L497.5 690.5 L497.5 692.5 L497.5 693.5 L497.5 692.5 L497.5 689.5 L498.5 684.5 L498.5 678.5 L498.5 670.5 L498.5 661.5 L498.5 651.5 L499.5 640.5 L499.5 627.5 L499.5 615.5 L499.5 601.5 L500.5 588.5 L500.5 575.5 L500.5 561.5 L500.5 549.5 L500.5 537.5 L501.5 526.5 L501.5 516.5 L501.5 507.5 L501.5 500.5 L501.5 494.5 L502.5 490.5 L502.5 488.5 L502.5 487.5 L502.5 489.5 L503.5 491.5 L503.5 496.5 L503.5 502.5 L503.5 510.5 L503.5 519.5 L504.5 529.5 L504.5 541.5 L504.5 553.5 L504.5 566.5 L504.5 579.5 L505.5 592.5 L505.5 606.5 L505.5 619.5 L505.5 631.5 L506.5 643.5 L506.5 654.5 L506.5 664.5 L506.5 673.5 L506.5 680.5 L507.5 686.5 L507.5 690.5 L507.5 692.5 L507.5 693.5 L507.5 692.5 L508.5 689.5 L508.5 684.5 L508.5 678.5 L508.5 670.5 L509.5 661.5 L509.5 651.5 L509.5 640.5 L509.5 627.5 L509.5 615.5 L510.5 601.5 L510.5 588.5 L510.5 575.5 L510.5 561.5 L511.5 549.5 L511.5 537.5 L511.5 526.5 L511.5 516.5 L511.5 507.5 L512.5 500.5 L512.5 494.5 L512.5 490.5 L512.5 488.5 L512.5 487.5 L513.5 489.5 L513.5 491.5 L513.5 496.5 L513.5 502.5 L514.5 510.5 L514.5 519.5 L514.5 529.5 L514.5 541.5 L514.5 553.5 L515.5 566.5 L515.5 579.5 L515.5 592.5 L515.5 606.5 L515.5 619.5 L516.5 631.5 L516.5 643.5 L516.5 654.5 L516.5 664.5 L517.5 673.5 L517.5 680.5 L517.5 686.5 L517.5 690.5 L517.5 692.5 L518.5 693.5 L518.5 692.5 L518.5 689.5 L518.5 684.5 L518.5 678.5 L519.5 670.5 L519.5 661.5 L519.5 651.5 L519.5 640.5 L520.5 627.5 L520.5 615.5 L520.5 601.5 L520.5 588.5 L520.5 575.5 L521.5 561.5 L521.5 549.5 L521.5 537.5 L521.5 526.5 L522.5 516.5 L522.5 507.5 L522.5 500.5 L522.5 494.5 L522.5 490.5 L523.5 488.5 L523.5 487.5 L523.5 489.5 L523.5 491.5 L523.5 496.5 L524.5 502.5 L524.5 510.5 L524.5 519.5 L524.5 529.5 L525.5 541.5 L525.5 553.5 L525.5 566.5 L525.5 579.5 L525.5 592.5 L526.5 606.5 L526.5 619.5 L526.5 631.5 L526.5 643.5 L526.5 654.5 L527.5 664.5 L527.5 673.5 L527.5 680.5 L527.5 686.5 L528.5 690.5 L528.5 692.5 L528.5 693.5 L528.5 692.5 L528.5 689.5 L529.5 684.5 L529.5 678.5 L529.5 670.5 L529.5 661.5 L529.5 651.5 L530.5 640.5 L530.5 627.5 L530.5 615.5 L530.5 601.5 L531.5 588.5 L531.5 575.5 L531.5 561.5 L531.5 549.5 L531.5 537.5 L532.5 526.5 L532.5 516.5 L532.5 507.5 L532.5 500.5 L532.5 494.5 L533.5 490.5 L533.5 488.5 L533.5 487.5 L533.5 489.5 L534.5 491.5 L534.5 496.5 L534.5 502.5 L534.5 510.5 L534.5 519.5 L535.5 529.5 L535.5 541.5 L535.5 553.5 L535.5 566.5 L536.5 579.5 L536.5 592.5 L536.5 606.5 L536.5 619.5 L536.5 631.5 L537.5 643.5 L537.5 654.5 L537.5 664.5 L537.5 673.5 L537.5 680.5 L538.5 686.5 L538.5 690.5 L538.5 692.5 L538.5 693.5 L539.5 692.5 L539.5 689.5 L539.5 684.5 L539.5 678.5 L539.5 670.5 L540.5 661.5 L540.5 651.5 L540.5 640.5 L540.5 627.5 L540.5 615.5 L541.5 601.5 L541.5 588.5 L541.5 575.5 L541.5 561.5 L542.5 549.5 L542.5 537.5 L542.5 526.5 L542.5 516.5 L542.5 507.5 L543.5 500.5 L543.5 494.5 L543.5 490.5 L543.5 488.5 L543.5 487.5 L544.5 489.5 L544.5 491.5 L544.5 496.5 L544.5 502.5 L545.5 510.5 L545.5 519.5 L545.5 529.5 L545.5 541.5 L545.5 553.5 L546.5 566.5 L546.5 579.5 L546.5 592.5 L546.5 606.5 L546.5 619.5 L547.5 631.5 L547.5 643.5 L547.5 654.5 L547.5 664.5 L548.5 673.5 L548.5 680.5 L548.5 686.5 L548.5 690.5 L548.5 692.5 L549.5 693.5 L549.5 692.5 L549.5 689.5 L549.5 684.5 L550.5 678.5 L550.5 670.5 L550.5 661.5 L550.5 651.5 L550.5 640.5 L551.5 627.5 L551.5 615.5 L551.5 601.5 L551.5 588.5 L551.5 575.5 L552.5 561.5 L552.5 549.5 L552.5 537.5 L552.5 526.5 L553.5 516.5 L553.5 507.5 L553.5 500.5 L553.5 494.5 L553.5 490.5 L554.5 488.5 L554.5 487.5 L554.5 489.5 L554.5 491.5 L554.5 496.5 L555.5 502.5 L555.5 510.5 L555.5 519.5 L555.5 529.5 L556.5 541.5 L556.5 553.5 L556.5 566.5 L556.5 579.5 L556.5 592.5 L557.5 606.5 L557.5 619.5 L557.5 631.5 L557.5 643.5 L557.5 654.5 L558.5 664.5 L558.5 673.5 L558.5 680.5 L558.5 686.5 L559.5 690.5 L559.5 692.5 L559.5 693.5 L559.5 692.5 L559.5 689.5 L560.5 684.5 L560.5 678.5 L560.5 670.5 L560.5 661.5 L560.5 651.5 L561.5 640.5 L561.5 627.5 L561.5 615.5 L561.5 601.5 L562.5 588.5 L562.5 575.5 L562.5 561.5 L562.5 549.5 L562.5 537.5 L563.5 526.5 L563.5 516.5 L563.5 507.5 L563.5 500.5 L564.5 494.5 L564.5 490.5 L564.5 488.5 L564.5 487.5 L564.5 489.5 L565.5 491.5 L565.5 496.5 L565.5 502.5 L565.5 510.5 L565.5 519.5 L566.5 529.5 L566.5 541.5 L566.5 553.5 L566.5 566.5 L567.5 579.5 L567.5 592.5 L567.5 606.5 L567.5 619.5 L567.5 631.5 L568.5 643.5 L568.5 654.5 L568.5 664.5 L568.5 673.5 L568.5 680.5 L569.5 686.5 L569.5 690.5 L569.5 692.5 L569.5 693.5 L570.5 692.5 L570.5 689.5 L570.5 684.5 L570.5 678.5 L570.5 670.5 L571.5 661.5 L571.5 651.5 L571.5 640.5 L571.5 627.5 L571.5 615.5 L572.5 601.5 L572.5 588.5 L572.5 575.5 L572.5 561.5 L573.5 549.5 L573.5 537.5 L573.5 526.5 L573.5 516.5 L573.5 507.5 L574.5 500.5 L574.5 494.5 L574.5 490.5 L574.5 488.5 L574.5 487.5 L575.5 489.5 L575.5 491.5 L575.5 496.5 L575.5 502.5 L576.5 510.5 L576.5 519.5 L576.5 529.5 L576.5 541.5 L576.5 553.5 L577.5 566.5 L577.5 579.5 L577.5 592.5 L577.5 606.5 L578.5 619.5 L578.5 631.5 L578.5 643.5 L578.5 654.5 L578.5 664.5 L579.5 673.5 L579.5 680.5 L579.5 686.5 L579.5 690.5 L579.5 692.5 L580.5 693.5 L580.5 692.5 L580.5 689.5 L580.5 684.5 L581.5 678.5 L581.5 670.5 L581.5 661.5 L581.5 651.5 L581.5 640.5 L582.5 627.5 L582.5 615.5 L582.5 601.5 L582.5 588.5 L582.5 575.5 L583.5 561.5 L583.5 549.5 L583.5 537.5 L583.5 526.5 L584.5 516.5 L584.5 507.5 L584.5 500.5 L584.5 494.5 L584.5 490.5 L585.5 488.5 L585.5 487.5 L585.5 489.5 L585.5 491.5 L585.5 496.5 L586.5 502.5 L586.5 510.5 L586.5 519.5 L586.5 529.5 L587.5 541.5 L587.5 553.5 L587.5 566.5 L587.5 579.5 L587.5 592.5 L588.5 606.5 L588.5 619.5 L588.5 631.5 L588.5 643.5 L588.5 654.5 L589.5 664.5 L589.5 673.5 L589.5 680.5 L589.5 686.5 L590.5 690.5 L590.5 692.5 L590.5 693.5 L590.5 692.5 L590.5 689.5 L591.5 684.5 L591.5 678.5 L591.5 670.5 L591.5 661.5 L592.5 651.5 L592.5 640.5 L592.5 627.5 L592.5 615.5 L592.5 601.5 L593.5 588.5 L593.5 575.5 L593.5 561.5 L593.5 549.5 L593.5 537.5 L594.5 526.5 L594.5 516.5 L594.5 507.5 L594.5 500.5 L595.5 494.5 L595.5 490.5 L595.5 488.5 L595.5 487.5 L595.5 489.5 L596.5 491.5 L596.5 496.5 L596.5 502.5 L596.5 510.5 L596.5 519.5 L597.5 529.5 L597.5 541.5 L597.5 553.5 L597.5 566.5 L598.5 579.5 L598.5 592.5 L598.5 606.5 L598.5 619.5 L598.5 631.5 L599.5 643.5 L599.5 654.5 L599.5 664.5 L599.5 673.5 L599.5 680.5 L600.5 686.5 L600.5 690.5 L600.5 692.5 L600.5 693.5 L601.5 692.5 L601.5 689.5 L601.5 684.5 L601.5 678.5 L601.5 670.5 L602.5 661.5 L602.5 651.5 L602.5 640.5 L602.5 627.5 L602.5 615.5 L603.5 601.5 L603.5 588.5 L603.5 575.5 L603.5 561.5 L604.5 549.5 L604.5 537.5 L604.5 526.5 L604.5 516.5 L604.5 507.5 L605.5 500.5 L605.5 494.5 L605.5 490.5 L605.5 488.5 L606.5 487.5 L606.5 489.5 L606.5 491.5 L606.5 496.5 L606.5 502.5 L607.5 510.5 L607.5 519.5 L607.5 529.5 L607.5 541.5 L607.5 553.5 L608.5 566.5 L608.5 579.5 L608.5 592.5 L608.5 606.5 L609.5 619.5 L609.5 631.5 L609.5 643.5 L609.5 654.5 L609.5 664.5 L610.5 673.5 L610.5 680.5 L610.5 686.5 L610.5 690.5 L610.5 692.5 L611.5 693.5 L611.5 692.5 L611.5 689.5 L611.5 684.5 L612.5 678.5 L612.5 670.5 L612.5 661.5 L612.5 651.5 L612.5 640.5 L613.5 627.5 L613.5 615.5 L613.5 601.5 L613.5 588.5 L613.5 575.5 L614.5 561.5 L614.5 549.5 L614.5 537.5 L614.5 526.5 L615.5 516.5 L615.5 507.5 L615.5 500.5 L615.5 494.5 L615.5 490.5 L616.5 488.5 L616.5 487.5 L616.5 489.5 L616.5 491.5 L617.5 496.5 L617.5 502.5 L617.5 510.5 L617.5 519.5 L617.5 529.5 L618.5 541.5 L618.5 553.5 L618.5 566.5 L618.5 579.5 L618.5 592.5 L619.5 606.5 L619.5 619.5 L619.5 631.5 L619.5 643.5 L620.5 654.5 L620.5 664.5 L620.5 673.5 L620.5 680.5 L620.5 686.5 L621.5 690.5 L621.5 692.5 L621.5 693.5 L621.5 692.5 L621.5 689.5 L622.5 684.5 L622.5 678.5 L622.5 670.5 L622.5 661.5 L623.5 651.5 L623.5 640.5 L623.5 627.5 L623.5 615.5 L623.5 601.5 L624.5 588.5 L624.5 575.5 L624.5 561.5 L624.5 549.5 L624.5 537.5 L625.5 526.5 L625.5 516.5 L625.5 507.5 L625.5 500.5 L626.5 494.5 L626.5 490.5 L626.5 488.5 L626.5 487.5 L626.5 489.5 L627.5 491.5 L627.5 496.5 L627.5 502.5 L627.5 510.5 L627.5 519.5 L628.5 529.5 L628.5 541.5 L628.5 553.5 L628.5 566.5 L629.5 579.5 L629.5 592.5 L629.5 606.5 L629.5 619.5 L629.5 631.5 L630.5 643.5 L630.5 654.5 L630.5 664.5 L630.5 673.5 L631.5 680.5 L631.5 686.5 L631.5 690.5 L631.5 692.5 L631.5 693.5 L632.5 692.5 L632.5 689.5 L632.5 684.5 L632.5 678.5 L632.5 670.5 L633.5 661.5 L633.5 651.5 L633.5 640.5 L633.5 627.5 L634.5 615.5 L634.5 601.5 L634.5 588.5 L634.5 575.5 L634.5 561.5 L635.5 549.5 L635.5 537.5 L635.5 526.5 L635.5 516.5 L635.5 507.5 L636.5 500.5 L636.5 494.5 L636.5 490.5 L636.5 488.5 L637.5 487.5 L637.5 489.5 L637.5 491.5 L637.5 496.5 L637.5 502.5 L638.5 510.5 L638.5 519.5 L638.5 529.5 L638.5 541.5 L638.5 553.5 L639.5 566.5 L639.5 579.5 L639.5 592.5 L639.5 606.5 L640.5 619.5 L640.5 631.5 L640.5 643.5 L640.5 654.5 L640.5 664.5 L641.5 673.5 L641.5 680.5 L641.5 686.5 L641.5 690.5 L641.5 692.5 L642.5 693.5 L642.5 692.5 L642.5 689.5 L642.5 684.5 L643.5 678.5 L643.5 670.5 L643.5 661.5 L643.5 651.5 L643.5 640.5 L644.5 627.5 L644.5 615.5 L644.5 601.5 L644.5 588.5 L645.5 575.5 L645.5 561.5 L645.5 549.5 L645.5 537.5 L645.5 526.5 L646.5 516.5 L646.5 507.5 L646.5 500.5 L646.5 494.5 L646.5 490.5 L647.5 488.5 L647.5 487.5 L647.5 489.5 L647.5 491.5 L648.5 496.5 L648.5 502.5 L648.5 510.5 L648.5 519.5 L648.5 529.5 L649.5 541.5 L649.5 553.5 L649.5 566.5 L649.5 579.5 L649.5 592.5 L650.5 606.5 L650.5 619.5 L650.5 631.5 L650.5 643.5 L651.5 654.5 L651.5 664.5 L651.5 673.5 L651.5 680.5 L651.5 686.5 L652.5 690.5 L652.5 692.5 L652.5 693.5 L652.5 692.5 L652.5 689.5 L653.5 684.5 L653.5 678.5 L653.5 670.5 L653.5 661.5 L654.5 651.5 L654.5 640.5 L654.5 627.5 L654.5 615.5 L654.5 601.5 L655.5 588.5 L655.5 575.5 L655.5 561.5 L655.5 549.5 L655.5 537.5 L656.5 526.5 L656.5 516.5 L656.5 507.5 L656.5 500.5 L657.5 494.5 L657.5 490.5 L657.5 488.5 L657.5 487.5 L657.5 489.5 L658.5 491.5 L658.5 496.5 L658.5 502.5 L658.5 510.5 L659.5 519.5 L659.5 529.5 L659.5 541.5 L659.5 553.5 L659.5 566.5 L660.5 579.5 L660.5 592.5 L660.5 606.5 L660.5 619.5 L660.5 631.5 L661.5 643.5 L661.5 654.5 L661.5 664.5 L661.5 673.5 L662.5 680.5 L662.5 686.5 L662.5 690.5 L662.5 692.5 L662.5 693.5 L663.5 692.5 L663.5 689.5 L663.5 684.5 L663.5 678.5 L663.5 670.5 L664.5 661.5 L664.5 651.5 L664.5 640.5 L664.5 627.5 L665.5 615.5 L665.5 601.5 L665.5 588.5 L665.5 575.5 L665.5 561.5 L666.5 549.5 L666.5 537.5 L666.5 526.5 L666.5 516.5 L666.5 507.5 L667.5 500.5 L667.5 494.5 L667.5 490.5 L667.5 488.5 L668.5 487.5 L668.5 489.5 L668.5 491.5 L668.5 496.5 L668.5 502.5 L669.5 510.5 L669.5 519.5 L669.5 529.5 L669.5 541.5 L669.5 553.5 L670.5 566.5 L670.5 579.5 L670.5 592.5 L670.5 606.5 L671.5 619.5 L671.5 631.5 L671.5 643.5 L671.5 654.5 L671.5 664.5 L672.5 673.5 L672.5 680.5 L672.5 686.5 L672.5 690.5 L673.5 692.5 L673.5 693.5 L673.5 692.5 L673.5 689.5 L673.5 684.5 L674.5 678.5 L674.5 670.5 L674.5 661.5 L674.5 651.5 L674.5 640.5 L675.5 627.5 L675.5 615.5 L675.5 601.5 L675.5 588.5 L676.5 575.5 L676.5 561.5 L676.5 549.5 L676.5 537.5 L676.5 526.5 L677.5 516.5 L677.5 507.5 L677.5 500.5 L677.5 494.5 L677.5 490.5 L678.5 488.5 L678.5 487.5 L678.5 489.5 L678.5 491.5 L679.5 496.5 L679.5 502.5 L679.5 510.5 L679.5 519.5 L679.5 529.5 L680.5 541.5 L680.5 553.5 L680.5 566.5 L680.5 579.5 L680.5 592.5 L681.5 606.5 L681.5 619.5 L681.5 631.5 L681.5 643.5 L682.5 654.5 L682.5 664.5 L682.5 673.5 L682.5 680.5 L682.5 686.5 L683.5 690.5 L683.5 692.5 L683.5 693.5 L683.5 692.5 L683.5 689.5 L684.5 684.5 L684.5 678.5 L684.5 670.5 L684.5 661.5 L685.5 651.5 L685.5 640.5 L685.5 627.5 L685.5 615.5 L685.5 601.5 L686.5 588.5 L686.5 575.5 L686.5 561.5 L686.5 549.5 L687.5 537.5 L687.5 526.5 L687.5 516.5 L687.5 507.5 L687.5 500.5 L688.5 494.5 L688.5 490.5 L688.5 488.5 L688.5 487.5 L688.5 489.5 L689.5 491.5 L689.5 496.5 L689.5 502.5 L689.5 510.5 L690.5 519.5 L690.5 529.5 L690.5 541.5 L690.5 553.5 L690.5 566.5 L691.5 579.5 L691.5 592.5 L691.5 606.5 L691.5 619.5 L691.5 631.5 L692.5 643.5 L692.5 654.5 L692.5 664.5 L692.5 673.5 L693.5 680.5 L693.5 686.5 L693.5 690.5 L693.5 692.5 L693.5 693.5 L694.5 692.5 L694.5 689.5 L694.5 684.5 L694.5 678.5 L694.5 670.5 L695.5 661.5 L695.5 651.5 L695.5 640.5 L695.5 627.5 L696.5 615.5 L696.5 601.5 L696.5 588.5 L696.5 575.5 L696.5 561.5 L697.5 549.5 L697.5 537.5 L697.5 526.5 L697.5 516.5 L697.5 507.5 L698.5 500.5 L698.5 494.5 L698.5 490.5 L698.5 488.5 L699.5 487.5 L699.5 489.5 L699.5 491.5 L699.5 496.5 L699.5 502.5 L700.5 510.5 L700.5 519.5 L700.5 529.5 L700.5 541.5 L701.5 553.5 L701.5 566.5 L701.5 579.5 L701.5 592.5 L701.5 606.5 L702.5 619.5 L702.5 631.5 L702.5 643.5 L702.5 654.5 L702.5 664.5 L703.5 673.5 L703.5 680.5 L703.5 686.5 L703.5 690.5 L704.5 692.5 L704.5 693.5 L704.5 692.5 L704.5 689.5 L704.5 684.5 L705.5 678.5 L705.5 670.5 L705.5 661.5 L705.5 651.5 L705.5 640.5 L706.5 627.5 L706.5 615.5 L706.5 601.5 L706.5 588.5 L707.5 575.5 L707.5 561.5 L707.5 549.5 L707.5 537.5 L707.5 526.5 L708.5 516.5 L708.5 507.5 L708.5 500.5 L708.5 494.5 L708.5 490.5 L709.5 488.5 L709.5 487.5 L709.5 489.5 L709.5 491.5 L710.5 496.5 L710.5 502.5 L710.5 510.5 L710.5 519.5 L710.5 529.5 L711.5 541.5 L711.5 553.5 L711.5 566.5 L711.5 579.5 L711.5 592.5 L712.5 606.5 L712.5 619.5 L712.5 631.5 L712.5 643.5 L713.5 654.5 L713.5 664.5 L713.5 673.5 L713.5 680.5 L713.5 686.5 L714.5 690.5 L714.5 692.5 L714.5 693.5 L714.5 692.5 L715.5 689.5 L715.5 684.5 L715.5 678.5 L715.5 670.5 L715.5 661.5 L716.5 651.5 L716.5 640.5 L716.5 627.5 L716.5 615.5 L716.5 601.5 L717.5 588.5 L717.5 575.5 L717.5 561.5 L717.5 549.5 L718.5 537.5 L718.5 526.5 L718.5 516.5 L718.5 507.5 L718.5 500.5 L719.5 494.5 L719.5 490.5 L719.5 488.5 L719.5 487.5 L719.5 489.5 L720.5 491.5 L720.5 496.5 L720.5 502.5 L720.5 510.5 L721.5 519.5 L721.5 529.5 L721.5 541.5 L721.5 553.5 L721.5 566.5 L722.5 579.5 L722.5 592.5 L722.5 606.5 L722.5 619.5 L722.5 631.5 L723.5 643.5 L723.5 654.5 L723.5 664.5 L723.5 673.5 L724.5 680.5 L724.5 686.5 L724.5 690.5 L724.5 692.5 L724.5 693.5 L725.5 692.5 L725.5 689.5 L725.5 684.5 L725.5 678.5 L726.5 670.5 L726.5 661.5 L726.5 651.5 L726.5 640.5 L726.5 627.5 L727.5 615.5 L727.5 601.5 L727.5 588.5 L727.5 575.5 L727.5 561.5 L728.5 549.5 L728.5 537.5 L728.5 526.5 L728.5 516.5 L729.5 507.5 L729.5 500.5 L729.5 494.5 L729.5 490.5 L729.5 488.5 L730.5 487.5 L730.5 489.5 L730.5 491.5 L730.5 496.5 L730.5 502.5 L731.5 510.5 L731.5 519.5 L731.5 529.5 L731.5 541.5 L732.5 553.5 L732.5 566.5 L732.5 579.5 L732.5 592.5 L732.5 606.5 L733.5 619.5 L733.5 631.5 L733.5 643.5 L733.5 654.5 L733.5 664.5 L734.5 673.5 L734.5 680.5 L734.5 686.5 L734.5 690.5 L735.5 692.5 L735.5 693.5 L735.5 692.5 L735.5 689.5 L735.5 684.5 L736.5 678.5 L736.5 670.5 L736.5 661.5 L736.5 651.5 L736.5 640.5 L737.5 627.5 L737.5 615.5 L737.5 601.5 L737.5 588.5 L738.5 575.5 L738.5 561.5 L738.5 549.5 L738.5 537.5 L738.5 526.5 L739.5 516.5 L739.5 507.5 L739.5 500.5 L739.5 494.5 L740.5 490.5 L740.5 488.5 L740.5 487.5 L740.5 489.5 L740.5 491.5 L741.5 496.5 L741.5 502.5 L741.5 510.5 L741.5 519.5 L741.5 529.5 L742.5 541.5 L742.5 553.5 L742.5 566.5 L742.5 579.5 L743.5 592.5 L743.5 606.5 L743.5 619.5 L743.5 631.5 L743.5 643.5 L744.5 654.5 L744.5 664.5 L744.5 673.5 L744.5 680.5 L744.5 686.5 L745.5 690.5 L745.5 692.5 L745.5 693.5 L745.5 692.5 L746.5 689.5 L746.5 684.5 L746.5 678.5 L746.5 670.5 L746.5 661.5 L747.5 651.5 L747.5 640.5 L747.5 627.5 L747.5 615.5 L747.5 601.5 L748.5 588.5 L748.5 575.5 L748.5 561.5 L748.5 549.5 L749.5 537.5 L749.5 526.5 L749.5 516.5 L749.5 507.5 L749.5 500.5 L750.5 494.5 L750.5 490.5 L750.5 488.5 L750.5 487.5 L750.5 489.5 L751.5 491.5 L751.5 496.5 L751.5 502.5 L751.5 510.5 L752.5 519.5 L752.5 529.5 L752.5 541.5 L752.5 553.5 L752.5 566.5 L753.5 579.5 L753.5 592.5 L753.5 606.5 L753.5 619.5 L754.5 631.5 L754.5 643.5 L754.5 654.5 L754.5 664.5 L754.5 673.5 L755.5 680.5 L755.5 686.5 L755.5 690.5 L755.5 692.5 L755.5 693.5 L756.5 692.5 L756.5 689.5 L756.5 684.5 L756.5 678.5 L757.5 670.5 L757.5 661.5 L757.5 651.5 L757.5 640.5 L757.5 627.5 L758.5 615.5 L758.5 601.5 L758.5 588.5 L758.5 575.5 L758.5 561.5 L759.5 549.5 L759.5 537.5 L759.5 526.5 L759.5 516.5 L760.5 507.5 L760.5 500.5 L760.5 494.5 L760.5 490.5 L760.5 488.5 L761.5 487.5 L761.5 489.5 L761.5 491.5 L761.5 496.5 L761.5 502.5 L762.5 510.5 L762.5 519.5 L762.5 529.5 L762.5 541.5 L763.5 553.5 L763.5 566.5 L763.5 579.5 L763.5 592.5 L763.5 606.5 L764.5 619.5 L764.5 631.5 L764.5 643.5 L764.5 654.5 L764.5 664.5 L765.5 673.5 L765.5 680.5 L765.5 686.5 L765.5 690.5 L766.5 692.5 L766.5 693.5 L766.5 692.5 L766.5 689.5 L766.5 684.5 L767.5 678.5 L767.5 670.5 L767.5 661.5 L767.5 651.5 L768.5 640.5 L768.5 627.5 L768.5 615.5 L768.5 601.5 L768.5 588.5 L769.5 575.5 L769.5 561.5 L769.5 549.5 L769.5 537.5 L769.5 526.5 L770.5 516.5 L770.5 507.5 L770.5 500.5 L770.5 494.5 L771.5 490.5 L771.5 488.5 L771.5 487.5 L771.5 489.5 L771.5 491.5 L772.5 496.5 L772.5 502.5 L772.5 510.5 L772.5 519.5 L772.5 529.5 L773.5 541.5 L773.5 553.5 L773.5 566.5 L773.5 579.5 L774.5 592.5 L774.5 606.5 L774.5 619.5 L774.5 631.5 L774.5 643.5 L775.5 654.5 L775.5 664.5 L775.5 673.5 L775.5 680.5 L775.5 686.5 L776.5 690.5 L776.5 692.5 L776.5 693.5 L776.5 692.5 L777.5 689.5 L777.5 684.5 L777.5 678.5 L777.5 670.5 L777.5 661.5 L778.5 651.5 L778.5 640.5 L778.5 627.5 L778.5 615.5 L778.5 601.5 L779.5 588.5 L779.5 575.5 L779.5 561.5 L779.5 549.5 L780.5 537.5 L780.5 526.5 L780.5 516.5 L780.5 507.5 L780.5 500.5 L781.5 494.5 L781.5 490.5 L781.5 488.5 L781.5 487.5 L782.5 489.5 L782.5 491.5 L782.5 496.5 L782.5 502.5 L782.5 510.5 L783.5 519.5 L783.5 529.5 L783.5 541.5 L783.5 553.5 L783.5 566.5 L784.5 579.5 L784.5 592.5 L784.5 606.5 L784.5 619.5 L785.5 631.5 L785.5 643.5 L785.5 654.5 L785.5 664.5 L785.5 673.5 L786.5 680.5 L786.5 686.5 L786.5 690.5 L786.5 692.5 L786.5 693.5 L787.5 692.5 L787.5 689.5 L787.5 684.5 L787.5 678.5 L788.5 670.5 L788.5 661.5 L788.5 651.5 L788.5 640.5 L788.5 627.5 L789.5 615.5 L789.5 601.5 L789.5 588.5 L789.5 575.5 L789.5 561.5 L790.5 549.5 L790.5 537.5 L790.5 526.5 L790.5 516.5 L791.5 507.5 L791.5 500.5 L791.5 494.5 L791.5 490.5 L791.5 488.5 L792.5 487.5 L792.5 489.5 L792.5 491.5 L792.5 496.5 L792.5 502.5 L793.5 510.5 L793.5 519.5 L793.5 529.5 L793.5 541.5 L794.5 553.5 L794.5 566.5 L794.5 579.5 L794.5 592.5 L794.5 606.5 L795.5 619.5 L795.5 631.5 L795.5 643.5 L795.5 654.5 L796.5 664.5 L796.5 673.5 L796.5 680.5 L796.5 686.5 L796.5 690.5 L797.5 692.5 L797.5 693.5 L797.5 692.5 L797.5 689.5 L797.5 684.5 L798.5 678.5 L798.5 670.5 L798.5 661.5 L798.5 651.5 L799.5 640.5 L799.5 627.5 L799.5 615.5 L799.5 601.5 L799.5 588.5 L800.5 575.5 L800.5 561.5 L800.5 549.5 L800.5 537.5 L800.5 526.5 L801.5 516.5 L801.5 507.5 L801.5 500.5 L801.5 494.5 L802.5 490.5 L802.5 488.5 L802.5 487.5 L802.5 489.5 L802.5 491.5 L803.5 496.5 L803.5 502.5 L803.5 510.5 L803.5 519.5 L803.5 529.5 L804.5 541.5 L804.5 553.5 L804.5 566.5 L804.5 579.5 L805.5 592.5 L805.5 606.5 L805.5 619.5 L805.5 631.5 L805.5 643.5 L806.5 654.5 L806.5 664.5 L806.5 673.5 L806.5 680.5 L806.5 686.5 L807.5 690.5 L807.5 692.5 L807.5 693.5 L807.5 692.5 L808.5 689.5 L808.5 684.5 L808.5 678.5 L808.5 670.5 L808.5 661.5 L809.5 651.5 L809.5 640.5 L809.5 627.5 L809.5 615.5 L810.5 601.5 L810.5 588.5 L810.5 575.5 L810.5 561.5 L810.5 549.5 L811.5 537.5 L811.5 526.5 L811.5 516.5 L811.5 507.5 L811.5 500.5 L812.5 494.5 L812.5 490.5 L812.5 488.5 L812.5 487.5 L813.5 489.5 L813.5 491.5 L813.5 496.5 L813.5 502.5 L813.5 510.5 L814.5 519.5 L814.5 529.5 L814.5 541.5 L814.5 553.5 L814.5 566.5 L815.5 579.5 L815.5 592.5 L815.5 606.5 L815.5 619.5 L816.5 631.5 L816.5 643.5 L816.5 654.5 L816.5 664.5 L816.5 673.5 L817.5 680.5 L817.5 686.5 L817.5 690.5 L817.5 692.5 L817.5 693.5 L818.5 692.5 L818.5 689.5 L818.5 684.5 L818.5 678.5 L819.5 670.5 L819.5 661.5 L819.5 651.5 L819.5 640.5 L819.5 627.5 L820.5 615.5 L820.5 601.5 L820.5 588.5 L820.5 575.5 L820.5 561.5 L821.5 549.5 L821.5 537.5 L821.5 526.5 L821.5 516.5 L822.5 507.5 L822.5 500.5 L822.5 494.5 L822.5 490.5 L822.5 488.5 L823.5 487.5 L823.5 489.5 L823.5 491.5 L823.5 496.5 L824.5 502.5 L824.5 510.5 L824.5 519.5 L824.5 529.5 L824.5 541.5 L825.5 553.5 L825.5 566.5 L825.5 579.5 L825.5 592.5 L825.5 606.5 L826.5 619.5 L826.5 631.5 L826.5 643.5 L826.5 654.5 L827.5 664.5 L827.5 673.5 L827.5 680.5 L827.5 686.5 L827.5 690.5 L828.5 692.5 L828.5 693.5 L828.5 692.5 L828.5 689.5 L828.5 684.5 L829.5 678.5 L829.5 670.5 L829.5 661.5 L829.5 651.5 L830.5 640.5 L830.5 627.5 L830.5 615.5 L830.5 601.5 L830.5 588.5 L831.5 575.5 L831.5 561.5 L831.5 549.5 L831.5 537.5 L831.5 526.5 L832.5 516.5 L832.5 507.5 L832.5 500.5 L832.5 494.5 L833.5 490.5 L833.5 488.5 L833.5 487.5 L833.5 489.5 L833.5 491.5 L834.5 496.5 L834.5 502.5 L834.5 510.5 L834.5 519.5 L835.5 529.5 L835.5 541.5 L835.5 553.5 L835.5 566.5 L835.5 579.5 L836.5 592.5 L836.5 606.5 L836.5 619.5 L836.5 631.5 L836.5 643.5 L837.5 654.5 L837.5 664.5 L837.5 673.5 L837.5 680.5 L838.5 686.5 L838.5 690.5 L838.5 692.5 L838.5 693.5 L838.5 692.5 L839.5 689.5 L839.5 684.5 L839.5 678.5 L839.5 670.5 L839.5 661.5 L840.5 651.5 L840.5 640.5 L840.5 627.5 L840.5 615.5 L841.5 601.5 L841.5 588.5 L841.5 575.5 L841.5 561.5 L841.5 549.5 L842.5 537.5 L842.5 526.5 L842.5 516.5 L842.5 507.5 L842.5 500.5 L843.5 494.5 L843.5 490.5 L843.5 488.5 L843.5 487.5 L844.5 489.5 L844.5 491.5 L844.5 496.5 L844.5 502.5 L844.5 510.5 L845.5 519.5 L845.5 529.5 L845.5 541.5 L845.5 553.5 L845.5 566.5 L846.5 579.5 L846.5 592.5 L846.5 606.5 L846.5 619.5 L847.5 631.5 L847.5 643.5 L847.5 654.5 L847.5 664.5 L847.5 673.5 L848.5 680.5 L848.5 686.5 L848.5 690.5 L848.5 692.5 L849.5 693.5 L849.5 692.5 L849.5 689.5 L849.5 684.5 L849.5 678.5 L850.5 670.5 L850.5 661.5 L850.5 651.5 L850.5 640.5 L850.5 627.5 L851.5 615.5 L851.5 601.5 L851.5 588.5 L851.5 575.5 L852.5 561.5 L852.5 549.5 L852.5 537.5 L852.5 526.5 L852.5 516.5 L853.5 507.5 L853.5 500.5 L853.5 494.5 L853.5 490.5 L853.5 488.5 L854.5 487.5 L854.5 489.5 L854.5 491.5 L854.5 496.5 L855.5 502.5 L855.5 510.5 L855.5 519.5 L855.5 529.5 L855.5 541.5 L856.5 553.5 L856.5 566.5 L856.5 579.5 L856.5 592.5 L856.5 606.5 L857.5 619.5 L857.5 631.5 L857.5 643.5 L857.5 654.5 L858.5 664.5 L858.5 673.5 L858.5 680.5 L858.5 686.5 L858.5 690.5 L859.5 692.5 L859.5 693.5 L859.5 692.5 L859.5 689.5 L859.5 684.5 L860.5 678.5 L860.5 670.5 L860.5 661.5 L860.5 651.5 L861.5 640.5 L861.5 627.5 L861.5 615.5 L861.5 601.5 L861.5 588.5 L862.5 575.5 L862.5 561.5 L862.5 549.5 L862.5 537.5 L863.5 526.5 L863.5 516.5 L863.5 507.5 L863.5 500.5 L863.5 494.5 L864.5 490.5 L864.5 488.5 L864.5 487.5 L864.5 489.5 L864.5 491.5 L865.5 496.5 L865.5 502.5 L865.5 510.5 L865.5 519.5 L866.5 529.5 L866.5 541.5 L866.5 553.5 L866.5 566.5 L866.5 579.5 L867.5 592.5 L867.5 606.5 L867.5 619.5 L867.5 631.5 L867.5 643.5 L868.5 654.5 L868.5 664.5 L868.5 673.5 L868.5 680.5 L869.5 686.5 L869.5 690.5 L869.5 692.5 L869.5 693.5 L869.5 692.5 L870.5 689.5 L870.5 684.5 L870.5 678.5 L870.5 670.5 L870.5 661.5 L871.5 651.5 L871.5 640.5 L871.5 627.5 L871.5 615.5 L872.5 601.5 L872.5 588.5 L872.5 575.5 L872.5 561.5 L872.5 549.5 L873.5 537.5 L873.5 526.5 L873.5 516.5 L873.5 507.5 L873.5 500.5 L874.5 494.5 L874.5 490.5 L874.5 488.5 L874.5 487.5 L875.5 489.5 L875.5 491.5 L875.5 496.5 L875.5 502.5 L875.5 510.5 L876.5 519.5 L876.5 529.5 L876.5 541.5 L876.5 553.5 L877.5 566.5 L877.5 579.5 L877.5 592.5 L877.5 606.5 L877.5 619.5 L878.5 631.5 L878.5 643.5 L878.5 654.5 L878.5 664.5 L878.5 673.5 L879.5 680.5 L879.5 686.5 L879.5 690.5 L879.5 692.5 L880.5 693.5 L880.5 692.5 L880.5 689.5 L880.5 684.5 L880.5 678.5 L881.5 670.5 L881.5 661.5 L881.5 651.5 L881.5 640.5 L881.5 627.5 L882.5 615.5 L882.5 601.5 L882.5 588.5 L882.5 575.5 L883.5 561.5 L883.5 549.5 L883.5 537.5 L883.5 526.5 L883.5 516.5 L884.5 507.5 L884.5 500.5 L884.5 494.5 L884.5 490.5 L884.5 488.5 L885.5 487.5 L885.5 489.5 L885.5 491.5 L885.5 496.5 L886.5 502.5 L886.5 510.5 L886.5 519.5 L886.5 529.5 L886.5 541.5 L887.5 553.5 L887.5 566.5 L887.5 579.5 L887.5 592.5 L887.5 606.5 L888.5 619.5 L888.5 631.5 L888.5 643.5 L888.5 654.5 L889.5 664.5 L889.5 673.5 L889.5 680.5 L889.5 686.5 L889.5 690.5 L890.5 692.5 L890.5 693.5 L890.5 692.5 L890.5 689.5 L891.5 684.5 L891.5 678.5 L891.5 670.5 L891.5 661.5 L891.5 651.5 L892.5 640.5 L892.5 627.5 L892.5 615.5 L892.5 601.5 L892.5 588.5 L893.5 575.5 L893.5 561.5 L893.5 549.5 L893.5 537.5 L894.5 526.5 L894.5 516.5 L894.5 507.5 L894.5 500.5 L894.5 494.5 L895.5 490.5 L895.5 488.5 L895.5 487.5 L895.5 489.5 L895.5 491.5 L896.5 496.5 L896.5 502.5 L896.5 510.5 L896.5 519.5 L897.5 529.5 L897.5 541.5 L897.5 553.5 L897.5 566.5 L897.5 579.5 L898.5 592.5 L898.5 606.5 L898.5 619.5 L898.5 631.5 L898.5 643.5 L899.5 654.5 L899.5 664.5 L899.5 673.5 L899.5 680.5 L900.5 686.5 L900.5 690.5 L900.5 692.5 L900.5 693.5 L900.5 692.5 L901.5 689.5 L901.5 684.5 L901.5 678.5 L901.5 670.5 L901.5 661.5 L902.5 651.5 L902.5 640.5 L902.5 627.5 L902.5 615.5 L903.5 601.5 L903.5 588.5 L903.5 575.5 L903.5 561.5 L903.5 549.5 L904.5 537.5 L904.5 526.5 L904.5 516.5 L904.5 507.5 L905.5 500.5 L905.5 494.5 L905.5 490.5 L905.5 488.5 L905.5 487.5 L906.5 489.5 L906.5 491.5 L906.5 496.5 L906.5 502.5 L906.5 510.5 L907.5 519.5 L907.5 529.5 L907.5 541.5 L907.5 553.5 L908.5 566.5 L908.5 579.5 L908.5 592.5 L908.5 606.5 L908.5 619.5 L909.5 631.5 L909.5 643.5 L909.5 654.5 L909.5 664.5 L909.5 673.5 L910.5 680.5 L910.5 686.5 L910.5 690.5 L910.5 692.5 L911.5 693.5 L911.5 692.5 L911.5 689.5 L911.5 684.5 L911.5 678.5 L912.5 670.5 L912.5 661.5 L912.5 651.5 L912.5 640.5 L912.5 627.5 L913.5 615.5 L913.5 601.5 L913.5 588.5 L913.5 575.5 L914.5 561.5 L914.5 549.5 L914.5 537.5 L914.5 526.5 L914.5 516.5 L915.5 507.5 L915.5 500.5 L915.5 494.5 L915.5 490.5 L915.5 488.5 L916.5 487.5 L916.5 489.5 L916.5 491.5 L916.5 496.5 L917.5 502.5 L917.5 510.5 L917.5 519.5 L917.5 529.5 L917.5 541.5 L918.5 553.5 L918.5 566.5 L918.5 579.5 L918.5 592.5 L919.5 606.5 L919.5 619.5 L919.5 631.5 L919.5 643.5 L919.5 654.5 L920.5 664.5 L920.5 673.5 L920.5 680.5 L920.5 686.5 L920.5 690.5 L921.5 692.5 L921.5 693.5 L921.5 692.5 L921.5 689.5 L922.5 684.5 L922.5 678.5 L922.5 670.5 L922.5 661.5 L922.5 651.5 L923.5 640.5 L923.5 627.5 L923.5 615.5 L923.5 601.5 L923.5 588.5 L924.5 575.5 L924.5 561.5 L924.5 549.5 L924.5 537.5 L925.5 526.5 L925.5 516.5 L925.5 507.5 L925.5 500.5 L925.5 494.5 L926.5 490.5 L926.5 488.5 L926.5 487.5 L926.5 489.5 L926.5 491.5 L927.5 496.5 L927.5 502.5 L927.5 510.5 L927.5 519.5 L928.5 529.5 L928.5 541.5 L928.5 553.5 L928.5 566.5 L928.5 579.5 L929.5 592.5 L929.5 606.5 L929.5 619.5 L929.5 631.5 L930.5 643.5 L930.5 654.5 L930.5 664.5 L930.5 673.5 L930.5 680.5 L931.5 686.5 L931.5 690.5 L931.5 692.5 L931.5 693.5 L931.5 692.5 L932.5 689.5 L932.5 684.5 L932.5 678.5 L932.5 670.5 L933.5 661.5 L933.5 651.5 L933.5 640.5 L933.5 627.5 L933.5 615.5 L934.5 601.5 L934.5 588.5 L934.5 575.5 L934.5 561.5 L934.5 549.5 L935.5 537.5 L935.5 526.5 L935.5 516.5 L935.5 507.5 L936.5 500.5 L936.5 494.5 L936.5 490.5 L936.5 488.5 L936.5 487.5 L937.5 489.5 L937.5 491.5 L937.5 496.5 L937.5 502.5 L937.5 510.5 L938.5 519.5 L938.5 529.5 L938.5 541.5 L938.5 553.5 L939.5 566.5 L939.5 579.5 L939.5 592.5 L939.5 606.5 L939.5 619.5 L940.5 631.5 L940.5 643.5 L940.5 654.5 L940.5 664.5 L940.5 673.5 L941.5 680.5 L941.5 686.5 L941.5 690.5 L941.5 692.5 L942.5 693.5 L942.5 692.5 L942.5 689.5 L942.5 684.5 L942.5 678.5 L943.5 670.5 L943.5 661.5 L943.5 651.5 L943.5 640.5 L944.5 627.5 L944.5 615.5 L944.5 601.5 L944.5 588.5 L944.5 575.5 L945.5 561.5 L945.5 549.5 L945.5 537.5 L945.5 526.5 L945.5 516.5 L946.5 507.5 L946.5 500.5 L946.5 494.5 L946.5 490.5 L947.5 488.5 L947.5 487.5 L947.5 489.5 L947.5 491.5 L947.5 496.5 L948.5 502.5 L948.5 510.5 L948.5 519.5 L948.5 529.5 L948.5 541.5 L949.5 553.5 L949.5 566.5 L949.5 579.5 L949.5 592.5 L950.5 606.5 L950.5 619.5 L950.5 631.5 L950.5 643.5 L950.5 654.5 L951.5 664.5 L951.5 673.5 L951.5 680.5 L951.5 686.5 L951.5 690.5 L952.5 692.5 L952.5 693.5 L952.5 692.5 L952.5 689.5 L953.5 684.5 L953.5 678.5 L953.5 670.5 L953.5 661.5 L953.5 651.5 L954.5 640.5 L954.5 627.5 L954.5 615.5 L954.5 601.5 L954.5 588.5 L955.5 575.5 L955.5 561.5 L955.5 549.5 L955.5 537.5 L956.5 526.5 L956.5 516.5 L956.5 507.5 L956.5 500.5 L956.5 494.5 L957.5 490.5 L957.5 488.5 L957.5 487.5 L957.5 489.5 L958.5 491.5 L958.5 496.5 L958.5 502.5 L958.5 510.5 L958.5 519.5 L959.5 529.5 L959.5 541.5 L959.5 553.5 L959.5 566.5 L959.5 579.5 L960.5 592.5 L960.5 606.5 L960.5 619.5 L960.5 631.5 L961.5 643.5 L961.5 654.5 L961.5 664.5 L961.5 673.5 L961.5 680.5 L962.5 686.5 L962.5 690.5 L962.5 692.5 L962.5 693.5 L962.5 692.5 L963.5 689.5 L963.5 684.5 L963.5 678.5 L963.5 670.5 L964.5 661.5 L964.5 651.5 L964.5 640.5 L964.5 627.5 L964.5 615.5 L965.5 601.5 L965.5 588.5 L965.5 575.5 L965.5 561.5 L965.5 549.5 L966.5 537.5 L966.5 526.5 L966.5 516.5 L966.5 507.5 L967.5 500.5 L967.5 494.5 L967.5 490.5 L967.5 488.5 L967.5 487.5 L968.5 489.5 L968.5 491.5 L968.5 496.5 L968.5 502.5 L968.5 510.5 L969.5 519.5 L969.5 529.5 L969.5 541.5 L969.5 553.5 L970.5 566.5 L970.5 579.5 L970.5 592.5 L970.5 606.5 L970.5 619.5 L971.5 631.5 L971.5 643.5 L971.5 654.5 L971.5 664.5 L972.5 673.5 L972.5 680.5 L972.5 686.5 L972.5 690.5 L972.5 692.5 L973.5 693.5 L973.5 692.5 L973.5 689.5 L973.5 684.5 L973.5 678.5 L974.5 670.5 L974.5 661.5 L974.5 651.5 L974.5 640.5 L975.5 627.5 L975.5 615.5 L975.5 601.5 L975.5 588.5 L975.5 575.5 L976.5 561.5 L976.5 549.5 L976.5 537.5 L976.5 526.5 L976.5 516.5 L977.5 507.5 L977.5 500.5 L977.5 494.5 L977.5 490.5 L978.5 488.5 L978.5 487.5 L978.5 489.5 L978.5 491.5 L978.5 496.5 L979.5 502.5 L979.5 510.5 L979.5 519.5 L979.5 529.5 L979.5 541.5 L980.5 553.5 L980.5 566.5 L980.5 579.5 L980.5 592.5 L981.5 606.5 L981.5 619.5 L981.5 631.5 L981.5 643.5 L981.5 654.5 L982.5 664.5 L982.5 673.5 L982.5 680.5 L982.5 686.5 L982.5 690.5 L983.5 692.5 L983.5 693.5 L983.5 692.5 L983.5 689.5 L984.5 684.5 L984.5 678.5 L984.5 670.5 L984.5 661.5 L984.5 651.5 L985.5 640.5 L985.5 627.5 L985.5 615.5 L985.5 601.5 L986.5 588.5 L986.5 575.5 L986.5 561.5 L986.5 549.5 L986.5 537.5 L987.5 526.5 L987.5 516.5 L987.5 507.5 L987.5 500.5 L987.5 494.5 L988.5 490.5 L988.5 488.5 L988.5 487.5 L988.5 489.5 L989.5 491.5 L989.5 496.5 L989.5 502.5 L989.5 510.5 L989.5 519.5 L990.5 529.5 L990.5 541.5 L990.5 553.5 L990.5 566.5 L990.5 579.5 L991.5 592.5 L991.5 606.5 L991.5 619.5 L991.5 631.5 L992.5 643.5 L992.5 654.5 L992.5 664.5 L992.5 673.5 L992.5 680.5 L993.5 686.5 L993.5 690.5 L993.5 692.5 L993.5 693.5 L993.5 692.5 L994.5 689.5 L994.5 684.5 L994.5 678.5 L994.5 670.5 L995.5 661.5 L995.5 651.5 L995.5 640.5 L995.5 627.5 L995.5 615.5 L996.5 601.5 L996.5 588.5 L996.5 575.5 L996.5 561.5 L996.5 549.5 L997.5 537.5 L997.5 526.5 L997.5 516.5 L997.5 507.5 L998.5 500.5 L998.5 494.5 L998.5 490.5 L998.5 488.5 L998.5 487.5 L999.5 489.5 L999.5 491.5 L999.5 496.5 L999.5 502.5 L1000.5 510.5 L1000.5 519.5 L1000.5 529.5 L1000.5 541.5 L1000.5 553.5 L1001.5 566.5 L1001.5 579.5 L1001.5 592.5 L1001.5 606.5 L1001.5 619.5 L1002.5 631.5 L1002.5 643.5 L1002.5 654.5 L1002.5 664.5 L1003.5 673.5 L1003.5 680.5 L1003.5 686.5 L1003.5 690.5 L1003.5 692.5 L1004.5 693.5 L1004.5 692.5 L1004.5 689.5 L1004.5 684.5 L1004.5 678.5 L1005.5 670.5 L1005.5 661.5 L1005.5 651.5 L1005.5 640.5 L1006.5 627.5 L1006.5 615.5 L1006.5 601.5 L1006.5 588.5 L1006.5 575.5 L1007.5 561.5 L1007.5 549.5 L1007.5 537.5 L1007.5 526.5 L1007.5 516.5 L1008.5 507.5 L1008.5 500.5 L1008.5 494.5 L1008.5 490.5 L1009.5 488.5 L1009.5 487.5 L1009.5 489.5 L1009.5 491.5 L1009.5 496.5 L1010.5 502.5 L1010.5 510.5 L1010.5 519.5 L1010.5 529.5 L1010.5 541.5 L1011.5 553.5 L1011.5 566.5 L1011.5 579.5 L1011.5 592.5 L1012.5 606.5 L1012.5 619.5 L1012.5 631.5 L1012.5 643.5 L1012.5 654.5 L1013.5 664.5 L1013.5 673.5 L1013.5 680.5 L1013.5 686.5 L1014.5 690.5 L1014.5 692.5 L1014.5 693.5 L1014.5 692.5 L1014.5 689.5 L1015.5 684.5 L1015.5 678.5 L1015.5 670.5 L1015.5 661.5 L1015.5 651.5 L1016.5 640.5 L1016.5 627.5 L1016.5 615.5 L1016.5 601.5 L1017.5 588.5 L1017.5 575.5 L1017.5 561.5 L1017.5 549.5 L1017.5 537.5 L1018.5 526.5 L1018.5 516.5 L1018.5 507.5 L1018.5 500.5 L1018.5 494.5 L1019.5 490.5 L1019.5 488.5 L1019.5 487.5 L1019.5 489.5 L1020.5 491.5 L1020.5 496.5 L1020.5 502.5 L1020.5 510.5 L1020.5 519.5 L1021.5 529.5 L1021.5 541.5 L1021.5 553.5 L1021.5 566.5 L1021.5 579.5 L1022.5 592.5 L1022.5 606.5 L1022.5 619.5 L1022.5 631.5 L1023.5 643.5 L1023.5 654.5 L1023.5 664.5 L1023.5 673.5 L1023.5 680.5 L1024.5 686.5 L1024.5 690.5 L1024.5 692.5 L1024.5 693.5 L1024.5 692.5 L1025.5 689.5 L1025.5 684.5 L1025.5 678.5 L1025.5 670.5 L1026.5 661.5 L1026.5 651.5 L1026.5 640.5 L1026.5 627.5 L1026.5 615.5 L1027.5 601.5 L1027.5 588.5 L1027.5 575.5 L1027.5 561.5 L1028.5 549.5 L1028.5 537.5 L1028.5 526.5 L1028.5 516.5 L1028.5 507.5 L1029.5 500.5 L1029.5 494.5 L1029.5 490.5 L1029.5 488.5 L1029.5 487.5 L1030.5 489.5 L1030.5 491.5 L1030.5 496.5 L1030.5 502.5 L1031.5 510.5 L1031.5 519.5 L1031.5 529.5 L1031.5 541.5 L1031.5 553.5 L1032.5 566.5 L1032.5 579.5 L1032.5 592.5 L1032.5 606.5 L1032.5 619.5 L1033.5 631.5 L1033.5 643.5 L1033.5 654.5 L1033.5 664.5 L1034.5 673.5 L1034.5 680.5 L1034.5 686.5 L1034.5 690.5 L1034.5 692.5 L1035.5 693.5 L1035.5 692.5 L1035.5 689.5 L1035.5 684.5 L1035.5 678.5 L1036.5 670.5 L1036.5 661.5 L1036.5 651.5 L1036.5 640.5 L1037.5 627.5 L1037.5 615.5 L1037.5 601.5 L1037.5 588.5 L1037.5 575.5 L1038.5 561.5 L1038.5 549.5 L1038.5 537.5 L1038.5 526.5 L1039.5 516.5 L1039.5 507.5 L1039.5 500.5 L1039.5 494.5 L1039.5 490.5 L1040.5 488.5 L1040.5 487.5 L1040.5 489.5 L1040.5 491.5 L1040.5 496.5 L1041.5 502.5 L1041.5 510.5 L1041.5 519.5 L1041.5 529.5 L1042.5 541.5 L1042.5 553.5 L1042.5 566.5 L1042.5 579.5 L1042.5 592.5 L1043.5 606.5 L1043.5 619.5 L1043.5 631.5 L1043.5 643.5 L1043.5 654.5 L1044.5 664.5 L1044.5 673.5 L1044.5 680.5 L1044.5 686.5 L1045.5 690.5 L1045.5 692.5 L1045.5 693.5 L1045.5 692.5 L1045.5 689.5 L1046.5 684.5 L1046.5 678.5 L1046.5 670.5 L1046.5 661.5 L1046.5 651.5 L1047.5 640.5 L1047.5 627.5 L1047.5 615.5 L1047.5 601.5 L1048.5 588.5 L1048.5 575.5 L1048.5 561.5 L1048.5 549.5 L1048.5 537.5 L1049.5 526.5 L1049.5 516.5 L1049.5 507.5 L1049.5 500.5 L1049.5 494.5 L1050.5 490.5 L1050.5 488.5 L1050.5 487.5 L1050.5 489.5 L1051.5 491.5 L1051.5 496.5 L1051.5 502.5 L1051.5 510.5 L1051.5 519.5 L1052.5 529.5 L1052.5 541.5 L1052.5 553.5 L1052.5 566.5 L1053.5 579.5 L1053.5 592.5 L1053.5 606.5 L1053.5 619.5 L1053.5 631.5 L1054.5 643.5 L1054.5 654.5 L1054.5 664.5 L1054.5 673.5 L1054.5 680.5 L1055.5 686.5 L1055.5 690.5 L1055.5 692.5 L1055.5 693.5 L1056.5 692.5 L1056.5 689.5 L1056.5 684.5 L1056.5 678.5 L1056.5 670.5 L1057.5 661.5 L1057.5 651.5 L1057.5 640.5 L1057.5 627.5 L1057.5 615.5 L1058.5 601.5 L1058.5 588.5 L1058.5 575.5 L1058.5 561.5 L1059.5 549.5 L1059.5 537.5 L1059.5 526.5 L1059.5 516.5 L1059.5 507.5 L1060.5 500.5 L1060.5 494.5 L1060.5 490.5 L1060.5 488.5 L1060.5 487.5 L1061.5 489.5 L1061.5 491.5 L1061.5 496.5 L1061.5 502.5 L1062.5 510.5 L1062.5 519.5 L1062.5 529.5 L1062.5 541.5 L1062.5 553.5 L1063.5 566.5 L1063.5 579.5 L1063.5 592.5 L1063.5 606.5 L1063.5 619.5 L1064.5 631.5 L1064.5 643.5 L1064.5 654.5 L1064.5 664.5 L1065.5 673.5 L1065.5 680.5 L1065.5 686.5 L1065.5 690.5 L1065.5 692.5 L1066.5 693.5 L1066.5 692.5 L1066.5 689.5 L1066.5 684.5 L1067.5 678.5 L1067.5 670.5 L1067.5 661.5 L1067.5 651.5 L1067.5 640.5 L1068.5 627.5 L1068.5 615.5 L1068.5 601.5 L1068.5 588.5 L1068.5 575.5 L1069.5 561.5 L1069.5 549.5 L1069.5 537.5 L1069.5 526.5 L1070.5 516.5 L1070.5 507.5 L1070.5 500.5 L1070.5 494.5 L1070.5 490.5 L1071.5 488.5 L1071.5 487.5 L1071.5 489.5 L1071.5 491.5 L1071.5 496.5 L1072.5 502.5 L1072.5 510.5 L1072.5 519.5 L1072.5 529.5 L1073.5 541.5 L1073.5 553.5 L1073.5 566.5 L1073.5 579.5 L1073.5 592.5 L1074.5 606.5 L1074.5 619.5 L1074.5 631.5 L1074.5 643.5 L1074.5 654.5 L1075.5 664.5 L1075.5 673.5 L1075.5 680.5 L1075.5 686.5 L1076.5 690.5 L1076.5 692.5 L1076.5 693.5 L1076.5 692.5 L1076.5 689.5 L1077.5 684.5 L1077.5 678.5 L1077.5 670.5 L1077.5 661.5 L1077.5 651.5 L1078.5 640.5 L1078.5 627.5 L1078.5 615.5 L1078.5 601.5 L1079.5 588.5 L1079.5 575.5 L1079.5 561.5" stroke="#00ff00" fill="none"/>
<path d="M45.5 460.5 L46.5 460.5 L47.5 460.5 L48.5 461.5 L48.5 460.5 L49.5 460.5 L49.5 459.5 L50.5 459.5 L50.5 458.5 L51.5 458.5 L51.5 457.5 L52.5 457.5 L52.5 456.5 L53.5 456.5 L53.5 455.5 L54.5 455.5 L54.5 454.5 L55.5 454.5 L55.5 453.5 L56.5 453.5 L56.5 452.5 L57.5 452.5 L57.5 451.5 L58.5 451.5 L59.5 451.5 L59.5 450.5 L60.5 450.5 L61.5 449.5 L62.5 449.5 L62.5 448.5 L63.5 448.5 L64.5 448.5 L64.5 447.5 L65.5 447.5 L66.5 447.5 L67.5 447.5 L68.5 447.5 L68.5 448.5 L69.5 448.5 L70.5 448.5 L70.5 449.5 L71.5 449.5 L72.5 449.5 L73.5 449.5 L73.5 448.5 L74.5 448.5 L75.5 448.5 L76.5 448.5 L77.5 449.5 L78.5 449.5 L79.5 449.5 L79.5 450.5 L80.5 450.5 L81.5 450.5 L82.5 450.5 L83.5 450.5 L84.5 450.5 L85.5 450.5 L86.5 450.5 L87.5 450.5 L87.5 451.5 L88.5 451.5 L89.5 451.5 L90.5 452.5 L91.5 452.5 L92.5 452.5 L93.5 452.5 L94.5 452.5 L95.5 452.5 L96.5 452.5 L97.5 452.5 L98.5 452.5 L98.5 453.5 L99.5 453.5 L100.5 453.5 L100.5 454.5 L101.5 454.5 L102.5 454.5 L103.5 454.5 L104.5 454.5 L105.5 454.5 L106.5 454.5 L107.5 454.5 L108.5 454.5 L109.5 454.5 L109.5 455.5 L110.5 455.5 L111.5 455.5 L111.5 456.5 L112.5 456.5 L113.5 456.5 L114.5 456.5 L115.5 456.5 L116.5 456.5 L117.5 456.5 L118.5 456.5 L119.5 456.5 L120.5 456.5 L120.5 457.5 L121.5 457.5 L122.5 457.5 L122.5 458.5 L123.5 458.5 L124.5 458.5 L125.5 458.5 L126.5 458.5 L126.5 457.5 L127.5 457.5 L128.5 457.5 L128.5 458.5 L129.5 458.5 L130.5 458.5 L130.5 459.5 L131.5 459.5 L132.5 459.5 L133.5 459.5 L133.5 460.5 L134.5 460.5 L135.5 460.5 L135.5 459.5 L136.5 459.5 L137.5 459.5 L138.5 459.5 L139.5 459.5 L139.5 460.5 L140.5 460.5 L141.5 460.5 L141.5 461.5 L142.5 461.5 L143.5 461.5 L144.5 461.5 L145.5 461.5 L146.5 461.5 L146.5 460.5 L147.5 460.5 L148.5 460.5 L149.5 460.5 L150.5 460.5 L151.5 460.5 L151.5 461.5 L151.5 460.5 L152.5 460.5 L152.5 459.5 L153.5 459.5 L154.5 458.5 L155.5 457.5 L156.5 456.5 L157.5 455.5 L157.5 454.5 L158.5 454.5 L158.5 453.5 L159.5 453.5 L160.5 452.5 L161.5 451.5 L162.5 451.5 L162.5 450.5 L163.5 450.5 L164.5 450.5 L164.5 449.5 L165.5 449.5 L166.5 448.5 L167.5 448.5 L168.5 448.5 L168.5 447.5 L169.5 447.5 L170.5 447.5 L171.5 447.5 L172.5 448.5 L173.5 448.5 L174.5 448.5 L174.5 449.5 L175.5 449.5 L176.5 449.5 L177.5 449.5 L177.5 448.5 L178.5 448.5 L179.5 448.5 L180.5 448.5 L180.5 449.5 L181.5 449.5 L182.5 449.5 L182.5 450.5 L183.5 450.5 L184.5 450.5 L185.5 450.5 L186.5 450.5 L187.5 450.5 L188.5 450.5 L189.5 450.5 L190.5 450.5 L191.5 450.5 L191.5 451.5 L192.5 451.5 L193.5 451.5 L193.5 452.5 L194.5 452.5 L195.5 452.5 L196.5 452.5 L197.5 452.5 L198.5 452.5 L199.5 452.5 L200.5 452.5 L201.5 452.5 L202.5 453.5 L203.5 453.5 L204.5 453.5 L204.5 454.5 L205.5 454.5 L206.5 454.5 L207.5 454.5 L208.5 454.5 L209.5 454.5 L210.5 454.5 L211.5 454.5 L212.5 454.5 L212.5 455.5 L213.5 455.5 L214.5 455.5 L215.5 456.5 L216.5 456.5 L217.5 456.5 L218.5 456.5 L219.5 456.5 L220.5 456.5 L221.5 456.5 L222.5 456.5 L223.5 456.5 L223.5 457.5 L224.5 457.5 L225.5 457.5 L225.5 458.5 L226.5 458.5 L227.5 458.5 L228.5 458.5 L229.5 458.5 L229.5 457.5 L230.5 457.5 L231.5 457.5 L231.5 458.5 L232.5 458.5 L233.5 458.5 L234.5 459.5 L235.5 459.5 L236.5 459.5 L236.5 460.5 L237.5 460.5 L238.5 460.5 L238.5 459.5 L239.5 459.5 L240.5 459.5 L241.5 459.5 L242.5 459.5 L242.5 460.5 L243.5 460.5 L244.5 460.5 L244.5 461.5 L245.5 461.5 L246.5 461.5 L247.5 461.5 L248.5 461.5 L249.5 461.5 L249.5 460.5 L250.5 460.5 L251.5 460.5 L252.5 460.5 L253.5 460.5 L254.5 460.5 L254.5 461.5 L255.5 460.5 L256.5 460.5 L256.5 459.5 L257.5 459.5 L257.5 458.5 L258.5 458.5 L258.5 457.5 L259.5 457.5 L259.5 456.5 L260.5 456.5 L260.5 455.5 L261.5 455.5 L261.5 454.5 L262.5 453.5 L263.5 453.5 L263.5 452.5 L264.5 452.5 L264.5 451.5 L265.5 451.5 L266.5 450.5 L267.5 450.5 L267.5 449.5 L268.5 449.5 L269.5 449.5 L269.5 448.5 L270.5 448.5 L271.5 448.5 L271.5 447.5 L272.5 447.5 L273.5 447.5 L274.5 447.5 L275.5 447.5 L275.5 448.5 L276.5 448.5 L277.5 448.5 L277.5 449.5 L278.5 449.5 L279.5 449.5 L280.5 449.5 L280.5 448.5 L281.5 448.5 L282.5 448.5 L283.5 448.5 L283.5 449.5 L284.5 449.5 L285.5 449.5 L286.5 450.5 L287.5 450.5 L288.5 450.5 L289.5 450.5 L290.5 450.5 L291.5 450.5 L292.5 450.5 L293.5 450.5 L294.5 450.5 L294.5 451.5 L295.5 451.5 L296.5 451.5 L296.5 452.5 L297.5 452.5 L298.5 452.5 L299.5 452.5 L300.5 452.5 L301.5 452.5 L302.5 452.5 L303.5 452.5 L304.5 452.5 L305.5 452.5 L305.5 453.5 L306.5 453.5 L307.5 453.5 L307.5 454.5 L308.5 454.5 L309.5 454.5 L310.5 454.5 L311.5 454.5 L312.5 454.5 L313.5 454.5 L314.5 454.5 L315.5 454.5 L316.5 454.5 L316.5 455.5 L317.5 455.5 L318.5 455.5 L318.5 456.5 L319.5 456.5 L320.5 456.5 L321.5 456.5 L322.5 456.5 L323.5 456.5 L324.5 456.5 L325.5 456.5 L326.5 456.5 L327.5 457.5 L328.5 457.5 L329.5 458.5 L330.5 458.5 L331.5 458.5 L332.5 458.5 L333.5 457.5 L334.5 457.5 L335.5 457.5 L335.5 458.5 L336.5 458.5 L337.5 458.5 L337.5 459.5 L338.5 459.5 L339.5 459.5 L340.5 460.5 L341.5 460.5 L342.5 460.5 L342.5 459.5 L343.5 459.5 L344.5 459.5 L345.5 459.5 L346.5 459.5 L346.5 460.5 L347.5 460.5 L348.5 460.5 L348.5 461.5 L349.5 461.5 L350.5 461.5 L351.5 461.5 L352.5 461.5 L353.5 461.5 L353.5 460.5 L354.5 460.5 L355.5 460.5 L356.5 460.5 L357.5 460.5 L358.5 460.5 L358.5 461.5 L358.5 460.5 L359.5 460.5 L359.5 459.5 L360.5 459.5 L360.5 458.5 L361.5 458.5 L361.5 457.5 L362.5 457.5 L362.5 456.5 L363.5 456.5 L363.5 455.5 L364.5 455.5 L364.5 454.5 L365.5 454.5 L365.5 453.5 L366.5 453.5 L366.5 452.5 L367.5 452.5 L367.5 451.5 L368.5 451.5 L369.5 451.5 L369.5 450.5 L370.5 450.5 L371.5 449.5 L372.5 449.5 L372.5 448.5 L373.5 448.5 L374.5 448.5 L375.5 447.5 L376.5 447.5 L377.5 447.5 L378.5 447.5 L378.5 448.5 L379.5 448.5 L380.5 448.5 L381.5 449.5 L382.5 449.5 L383.5 449.5 L384.5 448.5 L385.5 448.5 L386.5 448.5 L387.5 448.5 L387.5 449.5 L388.5 449.5 L389.5 449.5 L389.5 450.5 L390.5 450.5 L391.5 450.5 L392.5 450.5 L393.5 450.5 L394.5 450.5 L395.5 450.5 L396.5 450.5 L397.5 450.5 L398.5 451.5 L399.5 451.5 L400.5 451.5 L400.5 452.5 L401.5 452.5 L402.5 452.5 L403.5 452.5 L404.5 452.5 L405.5 452.5 L406.5 452.5 L407.5 452.5 L408.5 452.5 L408.5 453.5 L409.5 453.5 L410.5 453.5 L411.5 454.5 L412.5 454.5 L413.5 454.5 L414.5 454.5 L415.5 454.5 L416.5 454.5 L417.5 454.5 L418.5 454.5 L419.5 454.5 L419.5 455.5 L420.5 455.5 L421.5 455.5 L421.5 456.5 L422.5 456.5 L423.5 456.5 L424.5 456.5 L425.5 456.5 L426.5 456.5 L427.5 456.5 L428.5 456.5 L429.5 456.5 L430.5 456.5 L430.5 457.5 L431.5 457.5 L432.5 457.5 L432.5 458.5 L433.5 458.5 L434.5 458.5 L435.5 458.5 L436.5 458.5 L436.5 457.5 L437.5 457.5 L438.5 457.5 L438.5 458.5 L439.5 458.5 L440.5 458.5 L441.5 459.5 L442.5 459.5 L443.5 459.5 L443.5 460.5 L444.5 460.5 L445.5 460.5 L445.5 459.5 L446.5 459.5 L447.5 459.5 L448.5 459.5 L449.5 459.5 L449.5 460.5 L450.5 460.5 L451.5 460.5 L451.5 461.5 L452.5 461.5 L453.5 461.5 L454.5 461.5 L455.5 461.5 L456.5 461.5 L456.5 460.5 L457.5 460.5 L458.5 460.5 L459.5 460.5 L460.5 460.5 L461.5 460.5 L461.5 461.5 L461.5 460.5 L462.5 460.5 L463.5 459.5 L464.5 459.5 L464.5 458.5 L465.5 458.5 L465.5 457.5 L466.5 456.5 L467.5 456.5 L467.5 455.5 L468.5 454.5 L469.5 453.5 L470.5 453.5 L470.5 452.5 L471.5 452.5 L471.5 451.5 L472.5 451.5 L472.5 450.5 L473.5 450.5 L474.5 450.5 L474.5 449.5 L475.5 449.5 L476.5 449.5 L476.5 448.5 L477.5 448.5 L478.5 448.5 L478.5 447.5 L479.5 447.5 L480.5 447.5 L481.5 447.5 L482.5 447.5 L482.5 448.5 L483.5 448.5 L484.5 448.5 L484.5 449.5 L485.5 449.5 L486.5 449.5 L487.5 449.5 L487.5 448.5 L488.5 448.5 L489.5 448.5 L490.5 448.5 L490.5 449.5 L491.5 449.5 L492.5 449.5 L492.5 450.5 L493.5 450.5 L494.5 450.5 L495.5 450.5 L496.5 450.5 L497.5 450.5 L498.5 450.5 L499.5 450.5 L500.5 450.5 L501.5 450.5 L501.5 451.5 L502.5 451.5 L503.5 451.5 L503.5 452.5 L504.5 452.5 L505.5 452.5 L506.5 452.5 L507.5 452.5 L508.5 452.5 L509.5 452.5 L510.5 452.5 L511.5 452.5 L512.5 452.5 L512.5 453.5 L513.5 453.5 L514.5 453.5 L514.5 454.5 L515.5 454.5 L516.5 454.5 L517.5 454.5 L518.5 454.5 L519.5 454.5 L520.5 454.5 L521.5 454.5 L522.5 454.5 L523.5 455.5 L524.5 455.5 L525.5 455.5 L525.5 456.5 L526.5 456.5 L527.5 456.5 L528.5 456.5 L529.5 456.5 L530.5 456.5 L531.5 456.5 L532.5 456.5 L533.5 456.5 L533.5 457.5 L534.5 457.5 L535.5 457.5 L536.5 458.5 L537.5 458.5 L538.5 458.5 L539.5 458.5 L539.5 457.5 L540.5 457.5 L541.5 457.5 L542.5 458.5 L543.5 458.5 L544.5 458.5 L544.5 459.5 L545.5 459.5 L546.5 459.5 L546.5 460.5 L547.5 460.5 L548.5 460.5 L549.5 459.5 L550.5 459.5 L551.5 459.5 L552.5 459.5 L553.5 460.5 L554.5 460.5 L555.5 461.5 L556.5 461.5 L557.5 461.5 L558.5 461.5 L559.5 461.5 L560.5 460.5 L561.5 460.5 L562.5 460.5 L563.5 460.5 L564.5 460.5 L565.5 461.5 L565.5 460.5 L566.5 460.5 L566.5 459.5 L567.5 459.5 L567.5 458.5 L568.5 458.5 L568.5 457.5 L569.5 457.5 L569.5 456.5 L570.5 456.5 L570.5 455.5 L571.5 455.5 L571.5 454.5 L572.5 454.5 L572.5 453.5 L573.5 453.5 L573.5 452.5 L574.5 452.5 L574.5 451.5 L575.5 451.5 L576.5 451.5 L576.5 450.5 L577.5 450.5 L578.5 449.5 L579.5 449.5 L579.5 448.5 L580.5 448.5 L581.5 448.5 L581.5 447.5 L582.5 447.5 L583.5 447.5 L584.5 447.5 L585.5 447.5 L585.5 448.5 L586.5 448.5 L587.5 448.5 L587.5 449.5 L588.5 449.5 L589.5 449.5 L590.5 449.5 L590.5 448.5 L591.5 448.5 L592.5 448.5 L593.5 448.5 L594.5 449.5 L595.5 449.5 L596.5 449.5 L596.5 450.5 L597.5 450.5 L598.5 450.5 L599.5 450.5 L600.5 450.5 L601.5 450.5 L602.5 450.5 L603.5 450.5 L604.5 450.5 L604.5 451.5 L605.5 451.5 L606.5 451.5 L607.5 452.5 L608.5 452.5 L609.5 452.5 L610.5 452.5 L611.5 452.5 L612.5 452.5 L613.5 452.5 L614.5 452.5 L615.5 452.5 L615.5 453.5 L616.5 453.5 L617.5 453.5 L617.5 454.5 L618.5 454.5 L619.5 454.5 L620.5 454.5 L621.5 454.5 L622.5 454.5 L623.5 454.5 L624.5 454.5 L625.5 454.5 L626.5 454.5 L626.5 455.5 L627.5 455.5 L628.5 455.5 L628.5 456.5 L629.5 456.5 L630.5 456.5 L631.5 456.5 L632.5 456.5 L633.5 456.5 L634.5 456.5 L635.5 456.5 L636.5 456.5 L637.5 456.5 L637.5 457.5 L638.5 457.5 L639.5 457.5 L639.5 458.5 L640.5 458.5 L641.5 458.5 L642.5 458.5 L643.5 458.5 L643.5 457.5 L644.5 457.5 L645.5 457.5 L645.5 458.5 L646.5 458.5 L647.5 458.5 L647.5 459.5 L648.5 459.5 L649.5 459.5 L650.5 459.5 L650.5 460.5 L651.5 460.5 L652.5 460.5 L652.5 459.5 L653.5 459.5 L654.5 459.5 L655.5 459.5 L656.5 459.5 L656.5 460.5 L657.5 460.5 L658.5 460.5 L658.5 461.5 L659.5 461.5 L660.5 461.5 L661.5 461.5 L662.5 461.5 L663.5 461.5 L663.5 460.5 L664.5 460.5 L665.5 460.5 L666.5 460.5 L667.5 460.5 L668.5 460.5 L668.5 461.5 L668.5 460.5 L669.5 460.5 L669.5 459.5 L670.5 459.5 L671.5 458.5 L672.5 457.5 L673.5 456.5 L674.5 455.5 L674.5 454.5 L675.5 454.5 L675.5 453.5 L676.5 453.5 L677.5 452.5 L678.5 451.5 L679.5 451.5 L679.5 450.5 L680.5 450.5 L681.5 450.5 L681.5 449.5 L682.5 449.5 L683.5 448.5 L684.5 448.5 L685.5 448.5 L685.5 447.5 L686.5 447.5 L687.5 447.5 L688.5 447.5 L689.5 448.5 L690.5 448.5 L691.5 448.5 L691.5 449.5 L692.5 449.5 L693.5 449.5 L694.5 449.5 L694.5 448.5 L695.5 448.5 L696.5 448.5 L697.5 448.5 L697.5 449.5 L698.5 449.5 L699.5 449.5 L699.5 450.5 L700.5 450.5 L701.5 450.5 L702.5 450.5 L703.5 450.5 L704.5 450.5 L705.5 450.5 L706.5 450.5 L707.5 450.5 L708.5 450.5 L708.5 451.5 L709.5 451.5 L710.5 451.5 L710.5 452.5 L711.5 452.5 L712.5 452.5 L713.5 452.5 L714.5 452.5 L715.5 452.5 L716.5 452.5 L717.5 452.5 L718.5 452.5 L719.5 453.5 L720.5 453.5 L721.5 453.5 L721.5 454.5 L722.5 454.5 L723.5 454.5 L724.5 454.5 L725.5 454.5 L726.5 454.5 L727.5 454.5 L728.5 454.5 L729.5 454.5 L729.5 455.5 L730.5 455.5 L731.5 455.5 L732.5 456.5 L733.5 456.5 L734.5 456.5 L735.5 456.5 L736.5 456.5 L737.5 456.5 L738.5 456.5 L739.5 456.5 L740.5 456.5 L740.5 457.5 L741.5 457.5 L742.5 457.5 L742.5 458.5 L743.5 458.5 L744.5 458.5 L745.5 458.5 L746.5 458.5 L746.5 457.5 L747.5 457.5 L748.5 457.5 L748.5 458.5 L749.5 458.5 L750.5 458.5 L751.5 459.5 L752.5 459.5 L753.5 459.5 L753.5 460.5 L754.5 460.5 L755.5 460.5 L755.5 459.5 L756.5 459.5 L757.5 459.5 L758.5 459.5 L759.5 459.5 L759.5 460.5 L760.5 460.5 L761.5 460.5 L761.5 461.5 L762.5 461.5 L763.5 461.5 L764.5 461.5 L765.5 461.5 L766.5 461.5 L766.5 460.5 L767.5 460.5 L768.5 460.5 L769.5 460.5 L770.5 460.5 L771.5 460.5 L771.5 461.5 L772.5 460.5 L773.5 460.5 L773.5 459.5 L774.5 459.5 L774.5 458.5 L775.5 458.5 L775.5 457.5 L776.5 457.5 L776.5 456.5 L777.5 456.5 L777.5 455.5 L778.5 455.5 L778.5 454.5 L779.5 453.5 L780.5 453.5 L780.5 452.5 L781.5 452.5 L781.5 451.5 L782.5 451.5 L783.5 450.5 L784.5 450.5 L784.5 449.5 L785.5 449.5 L786.5 449.5 L786.5 448.5 L787.5 448.5 L788.5 448.5 L788.5 447.5 L789.5 447.5 L790.5 447.5 L791.5 447.5 L792.5 447.5 L792.5 448.5 L793.5 448.5 L794.5 448.5 L794.5 449.5 L795.5 449.5 L796.5 449.5 L797.5 449.5 L797.5 448.5 L798.5 448.5 L799.5 448.5 L800.5 448.5 L800.5 449.5 L801.5 449.5 L802.5 449.5 L803.5 450.5 L804.5 450.5 L805.5 450.5 L806.5 450.5 L807.5 450.5 L808.5 450.5 L809.5 450.5 L810.5 450.5 L811.5 450.5 L811.5 451.5 L812.5 451.5 L813.5 451.5 L813.5 452.5 L814.5 452.5 L815.5 452.5 L816.5 452.5 L817.5 452.5 L818.5 452.5 L819.5 452.5 L820.5 452.5 L821.5 452.5 L822.5 452.5 L822.5 453.5 L823.5 453.5 L824.5 453.5 L824.5 454.5 L825.5 454.5 L826.5 454.5 L827.5 454.5 L828.5 454.5 L829.5 454.5 L830.5 454.5 L831.5 454.5 L832.5 454.5 L833.5 454.5 L833.5 455.5 L834.5 455.5 L835.5 455.5 L835.5 456.5 L836.5 456.5 L837.5 456.5 L838.5 456.5 L839.5 456.5 L840.5 456.5 L841.5 456.5 L842.5 456.5 L843.5 456.5 L844.5 457.5 L845.5 457.5 L846.5 458.5 L847.5 458.5 L848.5 458.5 L849.5 458.5 L850.5 457.5 L851.5 457.5 L852.5 457.5 L852.5 458.5 L853.5 458.5 L854.5 458.5 L854.5 459.5 L855.5 459.5 L856.5 459.5 L857.5 460.5 L858.5 460.5 L859.5 460.5 L859.5 459.5 L860.5 459.5 L861.5 459.5 L862.5 459.5 L863.5 459.5 L863.5 460.5 L864.5 460.5 L865.5 460.5 L865.5 461.5 L866.5 461.5 L867.5 461.5 L868.5 461.5 L869.5 461.5 L870.5 461.5 L870.5 460.5 L871.5 460.5 L872.5 460.5 L873.5 460.5 L874.5 460.5 L875.5 460.5 L875.5 461.5 L875.5 460.5 L876.5 460.5 L876.5 459.5 L877.5 459.5 L877.5 458.5 L878.5 458.5 L878.5 457.5 L879.5 457.5 L879.5 456.5 L880.5 456.5 L880.5 455.5 L881.5 455.5 L881.5 454.5 L882.5 454.5 L882.5 453.5 L883.5 453.5 L883.5 452.5 L884.5 452.5 L884.5 451.5 L885.5 451.5 L886.5 451.5 L886.5 450.5 L887.5 450.5 L888.5 449.5 L889.5 449.5 L889.5 448.5 L890.5 448.5 L891.5 448.5 L892.5 447.5 L893.5 447.5 L894.5 447.5 L895.5 447.5 L895.5 448.5 L896.5 448.5 L897.5 448.5 L898.5 449.5 L899.5 449.5 L900.5 449.5 L901.5 448.5 L902.5 448.5 L903.5 448.5 L904.5 448.5 L904.5 449.5 L905.5 449.5 L906.5 449.5 L906.5 450.5 L907.5 450.5 L908.5 450.5 L909.5 450.5 L910.5 450.5 L911.5 450.5 L912.5 450.5 L913.5 450.5 L914.5 450.5 L915.5 451.5 L916.5 451.5 L917.5 451.5 L917.5 452.5 L918.5 452.5 L919.5 452.5 L920.5 452.5 L921.5 452.5 L922.5 452.5 L923.5 452.5 L924.5 452.5 L925.5 452.5 L925.5 453.5 L926.5 453.5 L927.5 453.5 L928.5 454.5 L929.5 454.5 L930.5 454.5 L931.5 454.5 L932.5 454.5 L933.5 454.5 L934.5 454.5 L935.5 454.5 L936.5 454.5 L936.5 455.5 L937.5 455.5 L938.5 455.5 L938.5 456.5 L939.5 456.5 L940.5 456.5 L941.5 456.5 L942.5 456.5 L943.5 456.5 L944.5 456.5 L945.5 456.5 L946.5 456.5 L947.5 456.5 L947.5 457.5 L948.5 457.5 L949.5 457.5 L949.5 458.5 L950.5 458.5 L951.5 458.5 L952.5 458.5 L953.5 458.5 L953.5 457.5 L954.5 457.5 L955.5 457.5 L955.5 458.5 L956.5 458.5 L957.5 458.5 L958.5 459.5 L959.5 459.5 L960.5 459.5 L960.5 460.5 L961.5 460.5 L962.5 460.5 L962.5 459.5 L963.5 459.5 L964.5 459.5 L965.5 459.5 L966.5 459.5 L966.5 460.5 L967.5 460.5 L968.5 460.5 L968.5 461.5 L969.5 461.5 L970.5 461.5 L971.5 461.5 L972.5 461.5 L973.5 461.5 L973.5 460.5 L974.5 460.5 L975.5 460.5 L976.5 460.5 L977.5 460.5 L978.5 460.5 L978.5 461.5 L978.5 460.5 L979.5 460.5 L980.5 459.5 L981.5 459.5 L981.5 458.5 L982.5 458.5 L982.5 457.5 L983.5 456.5 L984.5 456.5 L984.5 455.5 L985.5 454.5 L986.5 453.5 L987.5 453.5 L987.5 452.5 L988.5 452.5 L988.5 451.5 L989.5 451.5 L989.5 450.5 L990.5 450.5 L991.5 450.5 L991.5 449.5 L992.5 449.5 L993.5 449.5 L993.5 448.5 L994.5 448.5 L995.5 448.5 L995.5 447.5 L996.5 447.5 L997.5 447.5 L998.5 447.5 L999.5 447.5 L999.5 448.5 L1000.5 448.5 L1001.5 448.5 L1001.5 449.5 L1002.5 449.5 L1003.5 449.5 L1004.5 449.5 L1004.5 448.5 L1005.5 448.5 L1006.5 448.5 L1007.5 448.5 L1007.5 449.5 L1008.5 449.5 L1009.5 449.5 L1009.5 450.5 L1010.5 450.5 L1011.5 450.5 L1012.5 450.5 L1013.5 450.5 L1014.5 450.5 L1015.5 450.5 L1016.5 450.5 L1017.5 450.5 L1018.5 450.5 L1018.5 451.5 L1019.5 451.5 L1020.5 451.5 L1020.5 452.5 L1021.5 452.5 L1022.5 452.5 L1023.5 452.5 L1024.5 452.5 L1025.5 452.5 L1026.5 452.5 L1027.5 452.5 L1028.5 452.5 L1029.5 452.5 L1029.5 453.5 L1030.5 453.5 L1031.5 453.5 L1031.5 454.5 L1032.5 454.5 L1033.5 454.5 L1034.5 454.5 L1035.5 454.5 L1036.5 454.5 L1037.5 454.5 L1038.5 454.5 L1039.5 454.5 L1040.5 455.5 L1041.5 455.5 L1042.5 455.5 L1042.5 456.5 L1043.5 456.5 L1044.5 456.5 L1045.5 456.5 L1046.5 456.5 L1047.5 456.5 L1048.5 456.5 L1049.5 456.5 L1050.5 456.5 L1050.5 457.5 L1051.5 457.5 L1052.5 457.5 L1053.5 458.5 L1054.5 458.5 L1055.5 458.5 L1056.5 458.5 L1056.5 457.5 L1057.5 457.5 L1058.5 457.5 L1059.5 458.5 L1060.5 458.5 L1061.5 458.5 L1061.5 459.5 L1062.5 459.5 L1063.5 459.5 L1063.5 460.5 L1064.5 460.5 L1065.5 460.5 L1066.5 459.5 L1067.5 459.5 L1068.5 459.5 L1069.5 459.5 L1070.5 460.5 L1071.5 460.5 L1072.5 461.5 L1073.5 461.5 L1074.5 461.5 L1075.5 461.5 L1076.5 461.5 L1077.5 460.5 L1078.5 460.5 L1079.5 460.5" stroke="#0000ff" fill="none"/>
<path d="M45.5 718.5 L45.5 719.5 L46.5 719.5 L46.5 720.5 L47.5 720.5 L47.5 721.5 L48.5 721.5 L48.5 722.5 L49.5 722.5 L49.5 723.5 L50.5 723.5 L50.5 724.5 L51.5 724.5 L51.5 725.5 L52.5 725.5 L52.5 726.5 L53.5 726.5 L53.5 727.5 L54.5 727.5 L54.5 728.5 L55.5 728.5 L55.5 729.5 L56.5 729.5 L57.5 730.5 L58.5 730.5 L58.5 731.5 L59.5 731.5 L60.5 731.5 L60.5 732.5 L61.5 732.5 L62.5 732.5 L63.5 732.5 L64.5 732.5 L64.5 733.5 L65.5 733.5 L66.5 733.5 L67.5 733.5 L68.5 733.5 L69.5 733.5 L70.5 733.5 L70.5 732.5 L71.5 732.5 L72.5 732.5 L73.5 732.5 L74.5 732.5 L75.5 732.5 L76.5 732.5 L76.5 731.5 L77.5 731.5 L78.5 731.5 L79.5 731.5 L80.5 731.5 L81.5 731.5 L82.5 731.5 L82.5 730.5 L83.5 730.5 L84.5 730.5 L85.5 730.5 L86.5 730.5 L87.5 730.5 L88.5 730.5 L88.5 729.5 L89.5 729.5 L90.5 729.5 L91.5 729.5 L92.5 729.5 L93.5 729.5 L94.5 729.5 L94.5 728.5 L95.5 728.5 L96.5 728.5 L97.5 728.5 L98.5 728.5 L99.5 728.5 L100.5 728.5 L100.5 727.5 L101.5 727.5 L102.5 727.5 L103.5 727.5 L104.5 727.5 L105.5 727.5 L106.5 727.5 L106.5 726.5 L107.5 726.5 L108.5 726.5 L109.5 726.5 L110.5 726.5 L111.5 726.5 L112.5 726.5 L112.5 725.5 L113.5 725.5 L114.5 725.5 L115.5 725.5 L116.5 725.5 L117.5 725.5 L118.5 725.5 L118.5 724.5 L119.5 724.5 L120.5 724.5 L121.5 724.5 L122.5 724.5 L123.5 724.5 L124.5 724.5 L124.5 723.5 L125.5 723.5 L126.5 723.5 L127.5 723.5 L128.5 723.5 L129.5 723.5 L130.5 723.5 L131.5 722.5 L132.5 722.5 L133.5 722.5 L134.5 722.5 L135.5 722.5 L136.5 722.5 L136.5 721.5 L137.5 721.5 L138.5 721.5 L139.5 721.5 L140.5 721.5 L141.5 721.5 L142.5 721.5 L142.5 720.5 L143.5 720.5 L144.5 720.5 L145.5 720.5 L146.5 720.5 L147.5 720.5 L148.5 720.5 L149.5 720.5 L150.5 720.5 L151.5 720.5 L152.5 720.5 L153.5 720.5 L153.5 721.5 L154.5 721.5 L155.5 722.5 L156.5 722.5 L156.5 723.5 L157.5 723.5 L157.5 724.5 L158.5 724.5 L158.5 725.5 L159.5 725.5 L159.5 726.5 L160.5 726.5 L161.5 727.5 L162.5 727.5 L162.5 728.5 L163.5 728.5 L163.5 729.5 L164.5 729.5 L165.5 730.5 L166.5 730.5 L166.5 731.5 L167.5 731.5 L168.5 731.5 L168.5 732.5 L169.5 732.5 L170.5 732.5 L171.5 732.5 L172.5 732.5 L172.5 733.5 L173.5 733.5 L174.5 732.5 L175.5 732.5 L176.5 732.5 L177.5 732.5 L178.5 732.5 L179.5 732.5 L180.5 731.5 L181.5 731.5 L182.5 731.5 L183.5 731.5 L184.5 731.5 L185.5 731.5 L186.5 730.5 L187.5 730.5 L188.5 730.5 L189.5 730.5 L190.5 730.5 L191.5 730.5 L192.5 729.5 L193.5 729.5 L194.5 729.5 L195.5 729.5 L196.5 729.5 L197.5 729.5 L198.5 729.5 L198.5 728.5 L199.5 728.5 L200.5 728.5 L201.5 728.5 L202.5 728.5 L203.5 728.5 L204.5 728.5 L204.5 727.5 L205.5 727.5 L206.5 727.5 L207.5 727.5 L208.5 727.5 L209.5 727.5 L210.5 727.5 L210.5 726.5 L211.5 726.5 L212.5 726.5 L213.5 726.5 L214.5 726.5 L215.5 726.5 L216.5 726.5 L216.5 725.5 L217.5 725.5 L218.5 725.5 L219.5 725.5 L220.5 725.5 L221.5 725.5 L222.5 725.5 L222.5 724.5 L223.5 724.5 L224.5 724.5 L225.5 724.5 L226.5 724.5 L227.5 724.5 L228.5 724.5 L228.5 723.5 L229.5 723.5 L230.5 723.5 L231.5 723.5 L232.5 723.5 L233.5 723.5 L234.5 723.5 L234.5 722.5 L235.5 722.5 L236.5 722.5 L237.5 722.5 L238.5 722.5 L239.5 722.5 L240.5 722.5 L240.5 721.5 L241.5 721.5 L242.5 721.5 L243.5 721.5 L244.5 721.5 L245.5 721.5 L246.5 721.5 L246.5 720.5 L247.5 720.5 L248.5 720.5 L249.5 720.5 L250.5 720.5 L251.5 720.5 L252.5 720.5 L253.5 720.5 L254.5 720.5 L255.5 720.5 L256.5 720.5 L257.5 720.5 L257.5 721.5 L258.5 721.5 L258.5 722.5 L259.5 722.5 L259.5 723.5 L260.5 723.5 L260.5 724.5 L261.5 724.5 L262.5 725.5 L263.5 725.5 L263.5 726.5 L264.5 726.5 L264.5 727.5 L265.5 727.5 L265.5 728.5 L266.5 728.5 L266.5 729.5 L267.5 729.5 L268.5 729.5 L268.5 730.5 L269.5 730.5 L270.5 731.5 L271.5 731.5 L272.5 732.5 L273.5 732.5 L274.5 732.5 L275.5 732.5 L275.5 733.5 L276.5 733.5 L277.5 733.5 L277.5 732.5 L278.5 732.5 L279.5 732.5 L280.5 732.5 L281.5 732.5 L282.5 732.5 L283.5 732.5 L283.5 731.5 L284.5 731.5 L285.5 731.5 L286.5 731.5 L287.5 731.5 L288.5 731.5 L289.5 731.5 L289.5 730.5 L290.5 730.5 L291.5 730.5 L292.5 730.5 L293.5 730.5 L294.5 730.5 L295.5 730.5 L295.5 729.5 L296.5 729.5 L297.5 729.5 L298.5 729.5 L299.5 729.5 L300.5 729.5 L301.5 729.5 L301.5 728.5 L302.5 728.5 L303.5 728.5 L304.5 728.5 L305.5 728.5 L306.5 728.5 L307.5 728.5 L307.5 727.5 L308.5 727.5 L309.5 727.5 L310.5 727.5 L311.5 727.5 L312.5 727.5 L313.5 727.5 L313.5 726.5 L314.5 726.5 L315.5 726.5 L316.5 726.5 L317.5 726.5 L318.5 726.5 L319.5 726.5 L319.5 725.5 L320.5 725.5 L321.5 725.5 L322.5 725.5 L323.5 725.5 L324.5 725.5 L325.5 725.5 L325.5 724.5 L326.5 724.5 L327.5 724.5 L328.5 724.5 L329.5 724.5 L330.5 724.5 L331.5 724.5 L331.5 723.5 L332.5 723.5 L333.5 723.5 L334.5 723.5 L335.5 723.5 L336.5 723.5 L337.5 723.5 L337.5 722.5 L338.5 722.5 L339.5 722.5 L340.5 722.5 L341.5 722.5 L342.5 722.5 L343.5 722.5 L343.5 721.5 L344.5 721.5 L345.5 721.5 L346.5 721.5 L347.5 721.5 L348.5 721.5 L349.5 721.5 L349.5 720.5 L350.5 720.5 L351.5 720.5 L352.5 720.5 L353.5 720.5 L354.5 720.5 L355.5 720.5 L356.5 720.5 L357.5 720.5 L358.5 720.5 L359.5 720.5 L360.5 720.5 L360.5 721.5 L361.5 721.5 L361.5 722.5 L362.5 722.5 L363.5 722.5 L363.5 723.5 L364.5 723.5 L364.5 724.5 L365.5 724.5 L365.5 725.5 L366.5 725.5 L366.5 726.5 L367.5 726.5 L367.5 727.5 L368.5 727.5 L369.5 728.5 L370.5 728.5 L370.5 729.5 L371.5 729.5 L371.5 730.5 L372.5 730.5 L373.5 730.5 L373.5 731.5 L374.5 731.5 L375.5 731.5 L375.5 732.5 L376.5 732.5 L377.5 732.5 L378.5 732.5 L379.5 732.5 L379.5 733.5 L380.5 733.5 L380.5 732.5 L381.5 732.5 L382.5 732.5 L383.5 732.5 L384.5 732.5 L385.5 732.5 L386.5 732.5 L386.5 731.5 L387.5 731.5 L388.5 731.5 L389.5 731.5 L390.5 731.5 L391.5 731.5 L392.5 731.5 L392.5 730.5 L393.5 730.5 L394.5 730.5 L395.5 730.5 L396.5 730.5 L397.5 730.5 L398.5 730.5 L398.5 729.5 L399.5 729.5 L400.5 729.5 L401.5 729.5 L402.5 729.5 L403.5 729.5 L404.5 729.5 L405.5 728.5 L406.5 728.5 L407.5 728.5 L408.5 728.5 L409.5 728.5 L410.5 728.5 L411.5 727.5 L412.5 727.5 L413.5 727.5 L414.5 727.5 L415.5 727.5 L416.5 727.5 L417.5 726.5 L418.5 726.5 L419.5 726.5 L420.5 726.5 L421.5 726.5 L422.5 726.5 L423.5 725.5 L424.5 725.5 L425.5 725.5 L426.5 725.5 L427.5 725.5 L428.5 725.5 L429.5 724.5 L430.5 724.5 L431.5 724.5 L432.5 724.5 L433.5 724.5 L434.5 724.5 L435.5 723.5 L436.5 723.5 L437.5 723.5 L438.5 723.5 L439.5 723.5 L440.5 723.5 L441.5 723.5 L441.5 722.5 L442.5 722.5 L443.5 722.5 L444.5 722.5 L445.5 722.5 L446.5 722.5 L447.5 721.5 L448.5 721.5 L449.5 721.5 L450.5 721.5 L451.5 721.5 L452.5 721.5 L453.5 720.5 L454.5 720.5 L455.5 720.5 L456.5 720.5 L457.5 720.5 L458.5 720.5 L459.5 720.5 L460.5 720.5 L461.5 720.5 L462.5 720.5 L463.5 720.5 L464.5 721.5 L465.5 721.5 L465.5 722.5 L466.5 722.5 L466.5 723.5 L467.5 723.5 L467.5 724.5 L468.5 724.5 L469.5 725.5 L470.5 726.5 L471.5 726.5 L471.5 727.5 L472.5 727.5 L472.5 728.5 L473.5 728.5 L473.5 729.5 L474.5 729.5 L475.5 729.5 L475.5 730.5 L476.5 730.5 L476.5 731.5 L477.5 731.5 L478.5 731.5 L478.5 732.5 L479.5 732.5 L480.5 732.5 L481.5 732.5 L482.5 732.5 L482.5 733.5 L483.5 733.5 L484.5 733.5 L484.5 732.5 L485.5 732.5 L486.5 732.5 L487.5 732.5 L488.5 732.5 L489.5 732.5 L490.5 732.5 L490.5 731.5 L491.5 731.5 L492.5 731.5 L493.5 731.5 L494.5 731.5 L495.5 731.5 L496.5 731.5 L496.5 730.5 L497.5 730.5 L498.5 730.5 L499.5 730.5 L500.5 730.5 L501.5 730.5 L502.5 730.5 L502.5 729.5 L503.5 729.5 L504.5 729.5 L505.5 729.5 L506.5 729.5 L507.5 729.5 L508.5 729.5 L508.5 728.5 L509.5 728.5 L510.5 728.5 L511.5 728.5 L512.5 728.5 L513.5 728.5 L514.5 728.5 L514.5 727.5 L515.5 727.5 L516.5 727.5 L517.5 727.5 L518.5 727.5 L519.5 727.5 L520.5 727.5 L520.5 726.5 L521.5 726.5 L522.5 726.5 L523.5 726.5 L524.5 726.5 L525.5 726.5 L526.5 726.5 L526.5 725.5 L527.5 725.5 L528.5 725.5 L529.5 725.5 L530.5 725.5 L531.5 725.5 L532.5 725.5 L532.5 724.5 L533.5 724.5 L534.5 724.5 L535.5 724.5 L536.5 724.5 L537.5 724.5 L538.5 724.5 L538.5 723.5 L539.5 723.5 L540.5 723.5 L541.5 723.5 L542.5 723.5 L543.5 723.5 L544.5 723.5 L544.5 722.5 L545.5 722.5 L546.5 722.5 L547.5 722.5 L548.5 722.5 L549.5 722.5 L550.5 722.5 L550.5 721.5 L551.5 721.5 L552.5 721.5 L553.5 721.5 L554.5 721.5 L555.5 721.5 L556.5 721.5 L556.5 720.5 L557.5 720.5 L558.5 720.5 L559.5 720.5 L560.5 720.5 L561.5 720.5 L562.5 720.5 L563.5 720.5 L564.5 720.5 L565.5 720.5 L566.5 720.5 L567.5 720.5 L567.5 721.5 L568.5 721.5 L568.5 722.5 L569.5 722.5 L570.5 723.5 L571.5 724.5 L572.5 724.5 L572.5 725.5 L573.5 725.5 L573.5 726.5 L574.5 726.5 L574.5 727.5 L575.5 727.5 L575.5 728.5 L576.5 728.5 L577.5 729.5 L578.5 729.5 L578.5 730.5 L579.5 730.5 L580.5 730.5 L580.5 731.5 L581.5 731.5 L582.5 731.5 L582.5 732.5 L583.5 732.5 L584.5 732.5 L585.5 732.5 L586.5 733.5 L587.5 733.5 L587.5 732.5 L588.5 732.5 L589.5 732.5 L590.5 732.5 L591.5 732.5 L592.5 732.5 L593.5 732.5 L593.5 731.5 L594.5 731.5 L595.5 731.5 L596.5 731.5 L597.5 731.5 L598.5 731.5 L599.5 731.5 L599.5 730.5 L600.5 730.5 L601.5 730.5 L602.5 730.5 L603.5 730.5 L604.5 730.5 L605.5 730.5 L605.5 729.5 L606.5 729.5 L607.5 729.5 L608.5 729.5 L609.5 729.5 L610.5 729.5 L611.5 729.5 L611.5 728.5 L612.5 728.5 L613.5 728.5 L614.5 728.5 L615.5 728.5 L616.5 728.5 L617.5 728.5 L617.5 727.5 L618.5 727.5 L619.5 727.5 L620.5 727.5 L621.5 727.5 L622.5 727.5 L623.5 727.5 L623.5 726.5 L624.5 726.5 L625.5 726.5 L626.5 726.5 L627.5 726.5 L628.5 726.5 L629.5 726.5 L629.5 725.5 L630.5 725.5 L631.5 725.5 L632.5 725.5 L633.5 725.5 L634.5 725.5 L635.5 725.5 L635.5 724.5 L636.5 724.5 L637.5 724.5 L638.5 724.5 L639.5 724.5 L640.5 724.5 L641.5 724.5 L641.5 723.5 L642.5 723.5 L643.5 723.5 L644.5 723.5 L645.5 723.5 L646.5 723.5 L647.5 723.5 L648.5 722.5 L649.5 722.5 L650.5 722.5 L651.5 722.5 L652.5 722.5 L653.5 722.5 L653.5 721.5 L654.5 721.5 L655.5 721.5 L656.5 721.5 L657.5 721.5 L658.5 721.5 L659.5 721.5 L659.5 720.5 L660.5 720.5 L661.5 720.5 L662.5 720.5 L663.5 720.5 L664.5 720.5 L665.5 720.5 L666.5 720.5 L667.5 720.5 L668.5 720.5 L669.5 720.5 L670.5 720.5 L670.5 721.5 L671.5 721.5 L672.5 722.5 L673.5 722.5 L673.5 723.5 L674.5 723.5 L674.5 724.5 L675.5 724.5 L675.5 725.5 L676.5 725.5 L676.5 726.5 L677.5 726.5 L678.5 727.5 L679.5 727.5 L679.5 728.5 L680.5 728.5 L680.5 729.5 L681.5 729.5 L682.5 730.5 L683.5 730.5 L683.5 731.5 L684.5 731.5 L685.5 731.5 L685.5 732.5 L686.5 732.5 L687.5 732.5 L688.5 732.5 L689.5 732.5 L689.5 733.5 L690.5 733.5 L691.5 732.5 L692.5 732.5 L693.5 732.5 L694.5 732.5 L695.5 732.5 L696.5 732.5 L697.5 731.5 L698.5 731.5 L699.5 731.5 L700.5 731.5 L701.5 731.5 L702.5 731.5 L703.5 730.5 L704.5 730.5 L705.5 730.5 L706.5 730.5 L707.5 730.5 L708.5 730.5 L709.5 729.5 L710.5 729.5 L711.5 729.5 L712.5 729.5 L713.5 729.5 L714.5 729.5 L715.5 729.5 L715.5 728.5 L716.5 728.5 L717.5 728.5 L718.5 728.5 L719.5 728.5 L720.5 728.5 L721.5 728.5 L721.5 727.5 L722.5 727.5 L723.5 727.5 L724.5 727.5 L725.5 727.5 L726.5 727.5 L727.5 727.5 L727.5 726.5 L728.5 726.5 L729.5 726.5 L730.5 726.5 L731.5 726.5 L732.5 726.5 L733.5 726.5 L733.5 725.5 L734.5 725.5 L735.5 725.5 L736.5 725.5 L737.5 725.5 L738.5 725.5 L739.5 725.5 L739.5 724.5 L740.5 724.5 L741.5 724.5 L742.5 724.5 L743.5 724.5 L744.5 724.5 L745.5 724.5 L745.5 723.5 L746.5 723.5 L747.5 723.5 L748.5 723.5 L749.5 723.5 L750.5 723.5 L751.5 723.5 L751.5 722.5 L752.5 722.5 L753.5 722.5 L754.5 722.5 L755.5 722.5 L756.5 722.5 L757.5 722.5 L757.5 721.5 L758.5 721.5 L759.5 721.5 L760.5 721.5 L761.5 721.5 L762.5 721.5 L763.5 721.5 L763.5 720.5 L764.5 720.5 L765.5 720.5 L766.5 720.5 L767.5 720.5 L768.5 720.5 L769.5 720.5 L770.5 720.5 L771.5 720.5 L772.5 720.5 L773.5 720.5 L774.5 720.5 L774.5 721.5 L775.5 721.5 L775.5 722.5 L776.5 722.5 L776.5 723.5 L777.5 723.5 L777.5 724.5 L778.5 724.5 L779.5 725.5 L780.5 725.5 L780.5 726.5 L781.5 726.5 L781.5 727.5 L782.5 727.5 L782.5 728.5 L783.5 728.5 L783.5 729.5 L784.5 729.5 L785.5 729.5 L785.5 730.5 L786.5 730.5 L787.5 731.5 L788.5 731.5 L789.5 732.5 L790.5 732.5 L791.5 732.5 L792.5 732.5 L792.5 733.5 L793.5 733.5 L794.5 733.5 L794.5 732.5 L795.5 732.5 L796.5 732.5 L797.5 732.5 L798.5 732.5 L799.5 732.5 L800.5 732.5 L800.5 731.5 L801.5 731.5 L802.5 731.5 L803.5 731.5 L804.5 731.5 L805.5 731.5 L806.5 731.5 L806.5 730.5 L807.5 730.5 L808.5 730.5 L809.5 730.5 L810.5 730.5 L811.5 730.5 L812.5 730.5 L812.5 729.5 L813.5 729.5 L814.5 729.5 L815.5 729.5 L816.5 729.5 L817.5 729.5 L818.5 729.5 L818.5 728.5 L819.5 728.5 L820.5 728.5 L821.5 728.5 L822.5 728.5 L823.5 728.5 L824.5 728.5 L824.5 727.5 L825.5 727.5 L826.5 727.5 L827.5 727.5 L828.5 727.5 L829.5 727.5 L830.5 727.5 L830.5 726.5 L831.5 726.5 L832.5 726.5 L833.5 726.5 L834.5 726.5 L835.5 726.5 L836.5 726.5 L836.5 725.5 L837.5 725.5 L838.5 725.5 L839.5 725.5 L840.5 725.5 L841.5 725.5 L842.5 725.5 L842.5 724.5 L843.5 724.5 L844.5 724.5 L845.5 724.5 L846.5 724.5 L847.5 724.5 L848.5 724.5 L848.5 723.5 L849.5 723.5 L850.5 723.5 L851.5 723.5 L852.5 723.5 L853.5 723.5 L854.5 723.5 L854.5 722.5 L855.5 722.5 L856.5 722.5 L857.5 722.5 L858.5 722.5 L859.5 722.5 L860.5 722.5 L860.5 721.5 L861.5 721.5 L862.5 721.5 L863.5 721.5 L864.5 721.5 L865.5 721.5 L866.5 721.5 L866.5 720.5 L867.5 720.5 L868.5 720.5 L869.5 720.5 L870.5 720.5 L871.5 720.5 L872.5 720.5 L873.5 720.5 L874.5 720.5 L875.5 720.5 L876.5 720.5 L877.5 720.5 L877.5 721.5 L878.5 721.5 L878.5 722.5 L879.5 722.5 L880.5 722.5 L880.5 723.5 L881.5 723.5 L881.5 724.5 L882.5 724.5 L882.5 725.5 L883.5 725.5 L883.5 726.5 L884.5 726.5 L884.5 727.5 L885.5 727.5 L886.5 728.5 L887.5 728.5 L887.5 729.5 L888.5 729.5 L888.5 730.5 L889.5 730.5 L890.5 730.5 L890.5 731.5 L891.5 731.5 L892.5 731.5 L892.5 732.5 L893.5 732.5 L894.5 732.5 L895.5 732.5 L896.5 732.5 L896.5 733.5 L897.5 733.5 L897.5 732.5 L898.5 732.5 L899.5 732.5 L900.5 732.5 L901.5 732.5 L902.5 732.5 L903.5 732.5 L903.5 731.5 L904.5 731.5 L905.5 731.5 L906.5 731.5 L907.5 731.5 L908.5 731.5 L909.5 731.5 L909.5 730.5 L910.5 730.5 L911.5 730.5 L912.5 730.5 L913.5 730.5 L914.5 730.5 L915.5 730.5 L915.5 729.5 L916.5 729.5 L917.5 729.5 L918.5 729.5 L919.5 729.5 L920.5 729.5 L921.5 729.5 L922.5 728.5 L923.5 728.5 L924.5 728.5 L925.5 728.5 L926.5 728.5 L927.5 728.5 L928.5 727.5 L929.5 727.5 L930.5 727.5 L931.5 727.5 L932.5 727.5 L933.5 727.5 L934.5 726.5 L935.5 726.5 L936.5 726.5 L937.5 726.5 L938.5 726.5 L939.5 726.5 L940.5 725.5 L941.5 725.5 L942.5 725.5 L943.5 725.5 L944.5 725.5 L945.5 725.5 L946.5 724.5 L947.5 724.5 L948.5 724.5 L949.5 724.5 L950.5 724.5 L951.5 724.5 L952.5 723.5 L953.5 723.5 L954.5 723.5 L955.5 723.5 L956.5 723.5 L957.5 723.5 L958.5 723.5 L958.5 722.5 L959.5 722.5 L960.5 722.5 L961.5 722.5 L962.5 722.5 L963.5 722.5 L964.5 721.5 L965.5 721.5 L966.5 721.5 L967.5 721.5 L968.5 721.5 L969.5 721.5 L970.5 720.5 L971.5 720.5 L972.5 720.5 L973.5 720.5 L974.5 720.5 L975.5 720.5 L976.5 720.5 L977.5 720.5 L978.5 720.5 L979.5 720.5 L980.5 720.5 L981.5 721.5 L982.5 721.5 L982.5 722.5 L983.5 722.5 L983.5 723.5 L984.5 723.5 L984.5 724.5 L985.5 724.5 L986.5 725.5 L987.5 726.5 L988.5 726.5 L988.5 727.5 L989.5 727.5 L989.5 728.5 L990.5 728.5 L990.5 729.5 L991.5 729.5 L992.5 729.5 L992.5 730.5 L993.5 730.5 L993.5 731.5 L994.5 731.5 L995.5 731.5 L995.5 732.5 L996.5 732.5 L997.5 732.5 L998.5 732.5 L999.5 732.5 L999.5 733.5 L1000.5 733.5 L1001.5 733.5 L1001.5 732.5 L1002.5 732.5 L1003.5 732.5 L1004.5 732.5 L1005.5 732.5 L1006.5 732.5 L1007.5 732.5 L1007.5 731.5 L1008.5 731.5 L1009.5 731.5 L1010.5 731.5 L1011.5 731.5 L1012.5 731.5 L1013.5 731.5 L1013.5 730.5 L1014.5 730.5 L1015.5 730.5 L1016.5 730.5 L1017.5 730.5 L1018.5 730.5 L1019.5 730.5 L1019.5 729.5 L1020.5 729.5 L1021.5 729.5 L1022.5 729.5 L1023.5 729.5 L1024.5 729.5 L1025.5 729.5 L1025.5 728.5 L1026.5 728.5 L1027.5 728.5 L1028.5 728.5 L1029.5 728.5 L1030.5 728.5 L1031.5 728.5 L1031.5 727.5 L1032.5 727.5 L1033.5 727.5 L1034.5 727.5 L1035.5 727.5 L1036.5 727.5 L1037.5 727.5 L1037.5 726.5 L1038.5 726.5 L1039.5 726.5 L1040.5 726.5 L1041.5 726.5 L1042.5 726.5 L1043.5 726.5 L1043.5 725.5 L1044.5 725.5 L1045.5 725.5 L1046.5 725.5 L1047.5 725.5 L1048.5 725.5 L1049.5 725.5 L1049.5 724.5 L1050.5 724.5 L1051.5 724.5 L1052.5 724.5 L1053.5 724.5 L1054.5 724.5 L1055.5 724.5 L1055.5 723.5 L1056.5 723.5 L1057.5 723.5 L1058.5 723.5 L1059.5 723.5 L1060.5 723.5 L1061.5 723.5 L1061.5 722.5 L1062.5 722.5 L1063.5 722.5 L1064.5 722.5 L1065.5 722.5 L1066.5 722.5 L1067.5 722.5 L1067.5 721.5 L1068.5 721.5 L1069.5 721.5 L1070.5 721.5 L1071.5 721.5 L1072.5 721.5 L1073.5 721.5 L1073.5 720.5 L1074.5 720.5 L1075.5 720.5 L1076.5 720.5 L1077.5 720.5 L1078.5 720.5 L1079.5 720.5" stroke="#ff0000" fill="none"/>
<path d="M45.5 438.5H1079.5V741.5H45.5Z" stroke="#c0c0c0" fill="none"/>
<path d="M38 438.5H45" stroke="#c0c0c0"/>
<path d="M38 468.5H45" stroke="#c0c0c0"/>
<path d="M38 499.5H45" stroke="#c0c0c0"/>
<path d="M38 529.5H45" stroke="#c0c0c0"/>
<path d="M38 559.5H45" stroke="#c0c0c0"/>
<path d="M38 590.5H45" stroke="#c0c0c0"/>
<path d="M38 620.5H45" stroke="#c0c0c0"/>
<path d="M38 650.5H45" stroke="#c0c0c0"/>
<path d="M38 680.5H45" stroke="#c0c0c0"/>
<path d="M38 711.5H45" stroke="#c0c0c0"/>
<path d="M38 741.5H45" stroke="#c0c0c0"/>
</svg>
<svg width="1107" height="774" viewBox="0 0 1107 774">
<g font-size="13" fill="#c0c0c0" stroke="#c0c0c0" stroke-width="0.35"><text x="50.2" y="55.6" text-anchor="end">40dB</text><text x="50.2" y="88.6" text-anchor="end">20dB</text><text x="50.2" y="120.6" text-anchor="end">0dB</text><text x="50.2" y="153.6" text-anchor="end">-20dB</text><text x="50.2" y="185.6" text-anchor="end">-40dB</text><text x="50.2" y="218.6" text-anchor="end">-60dB</text><text x="50.2" y="250.6" text-anchor="end">-80dB</text><text x="50.2" y="283.6" text-anchor="end">-100dB</text><text x="50.2" y="315.6" text-anchor="end">-120dB</text><text x="50.2" y="348.6" text-anchor="end">-140dB</text><text x="50.2" y="380.6" text-anchor="end">-160dB</text><text x="58.5" y="397" text-anchor="middle">10Hz</text><text x="250.5" y="397" text-anchor="middle">100Hz</text><text x="441.5" y="397" text-anchor="middle">1KHz</text><text x="633.5" y="397" text-anchor="middle">10KHz</text><text x="825.5" y="397" text-anchor="middle">100KHz</text><text x="1016.5" y="397" text-anchor="middle">1MHz</text><text x="37.2" y="442.6" text-anchor="end">35V</text><text x="37.2" y="472.6" text-anchor="end">28V</text><text x="37.2" y="503.6" text-anchor="end">21V</text><text x="37.2" y="533.6" text-anchor="end">14V</text><text x="37.2" y="563.6" text-anchor="end">7V</text><text x="37.2" y="594.6" text-anchor="end">0V</text><text x="37.2" y="624.6" text-anchor="end">-7V</text><text x="37.2" y="654.6" text-anchor="end">-14V</text><text x="37.2" y="684.6" text-anchor="end">-21V</text><text x="37.2" y="715.6" text-anchor="end">-28V</text><text x="37.2" y="745.6" text-anchor="end">-35V</text><text x="44.8" y="761.7" text-anchor="middle">0ms</text><text x="147.8" y="761.7" text-anchor="middle">10ms</text><text x="251.8" y="761.7" text-anchor="middle">20ms</text><text x="354.8" y="761.7" text-anchor="middle">30ms</text><text x="458.8" y="761.7" text-anchor="middle">40ms</text><text x="561.8" y="761.7" text-anchor="middle">50ms</text><text x="664.8" y="761.7" text-anchor="middle">60ms</text><text x="768.8" y="761.7" text-anchor="middle">70ms</text><text x="871.8" y="761.7" text-anchor="middle">80ms</text><text x="975.8" y="761.7" text-anchor="middle">90ms</text><text x="1097.3" y="761.7" text-anchor="end">100ms</text></g>
<g font-size="13" font-weight="bold" text-anchor="middle"><text x="220.5" y="45" fill="#00ff00">V(out)</text><text x="548" y="45" fill="#ff0000">V(n027)</text><text x="875" y="45" fill="#0000ff">V(n001)</text><text x="216.5" y="432" fill="#00ff00">V(out)</text><text x="561" y="432" fill="#0000ff">V(n001)</text><text x="905" y="432" fill="#ff0000">V(n027)</text></g>
</svg>
</body></html>
